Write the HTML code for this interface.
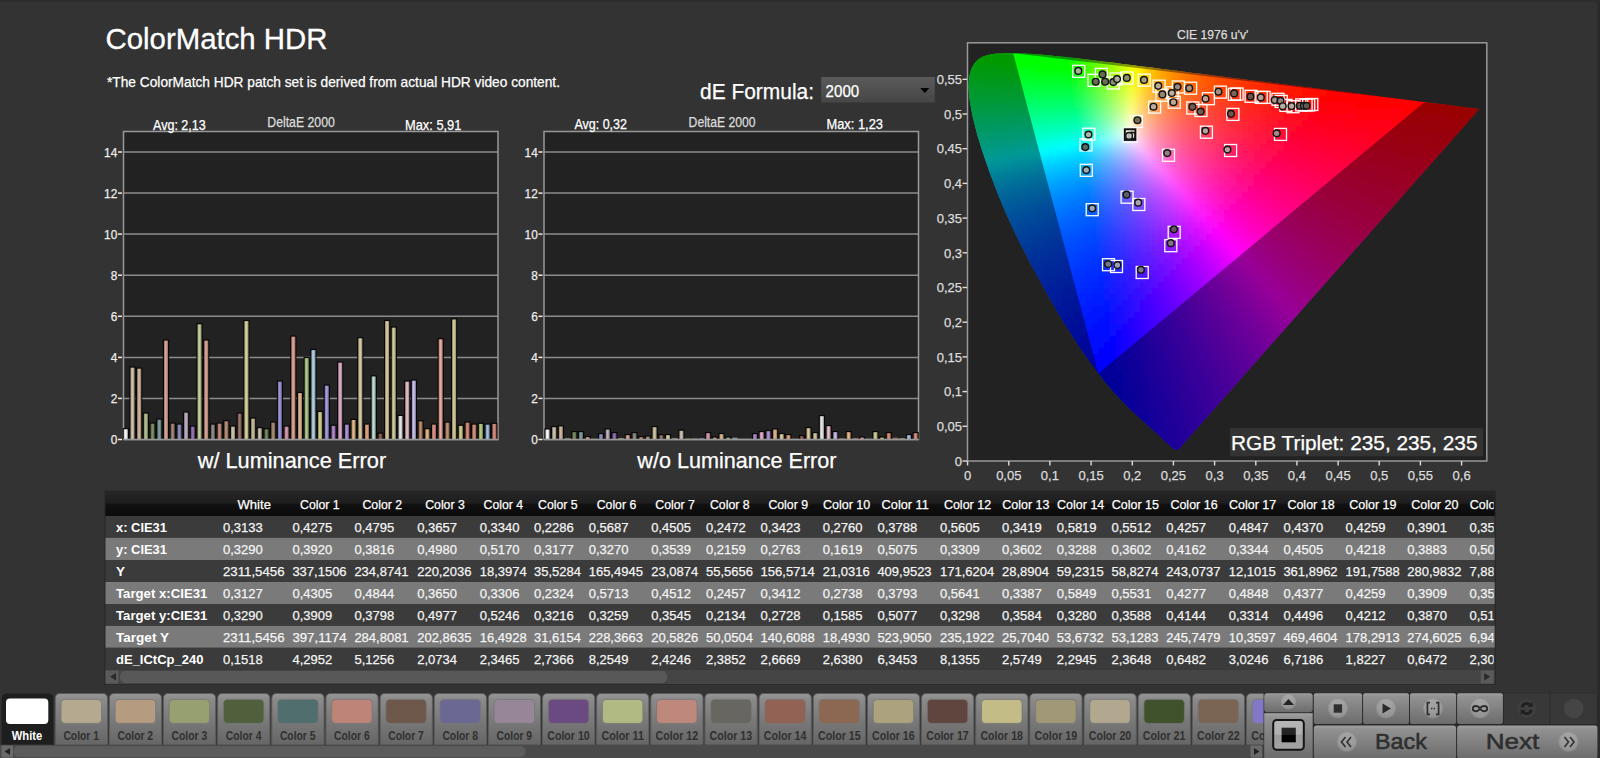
<!DOCTYPE html>
<html><head><meta charset="utf-8"><title>ColorMatch HDR</title>
<style>
html,body{margin:0;padding:0;background:#333;overflow:hidden}
svg{display:block;font-family:"Liberation Sans", "DejaVu Sans", sans-serif}
.c rect{width:7px;height:7px}
</style></head><body>
<svg width="1600" height="758" viewBox="0 0 1600 758">
<defs><clipPath id="locus"><path d="M1178.4 449.5L1176.7 449.9L1174.9 449.5L1173.4 448.4L1171.9 447.3L1170.8 446.4L1169.5 445.3L1168.0 444.0L1166.3 442.5L1164.5 440.8L1162.5 438.9L1161.4 437.8L1160.2 436.8L1159.0 435.6L1157.8 434.5L1156.5 433.3L1155.1 432.0L1153.6 430.7L1152.0 429.2L1150.4 427.7L1148.6 426.2L1146.8 424.5L1144.9 422.8L1143.0 421.0L1141.0 419.2L1138.9 417.3L1136.7 415.3L1134.4 413.1L1132.0 410.9L1129.5 408.5L1127.0 405.9L1124.3 403.3L1121.6 400.5L1118.8 397.5L1115.8 394.3L1112.8 391.0L1109.6 387.3L1106.2 383.2L1102.6 378.7L1098.7 373.7L1094.6 368.3L1090.3 362.4L1085.8 356.1L1081.2 349.4L1076.5 342.4L1071.7 335.0L1066.7 327.1L1061.6 318.9L1056.5 310.3L1051.3 301.3L1046.0 292.0L1040.8 282.5L1035.5 272.8L1030.2 262.9L1025.1 253.0L1020.0 243.0L1015.0 232.9L1010.3 222.8L1005.8 212.9L1001.6 203.0L997.7 193.4L994.1 184.0L990.6 174.9L987.4 166.1L984.5 157.6L981.8 149.4L979.4 141.7L977.2 134.5L975.4 127.6L973.8 121.2L972.4 115.2L971.3 109.6L970.3 104.4L969.6 99.6L969.1 95.1L968.8 90.9L968.6 87.1L968.7 83.5L968.9 80.2L969.2 77.1L969.8 74.2L970.5 71.6L971.3 69.1L972.3 66.9L973.4 64.9L974.7 63.1L976.1 61.4L977.6 60.0L979.2 58.8L980.9 57.7L982.7 56.8L984.5 56.0L986.5 55.4L988.5 54.8L990.5 54.4L992.7 54.1L994.8 53.8L997.1 53.6L999.3 53.5L1001.6 53.4L1003.9 53.3L1006.3 53.2L1008.6 53.2L1010.9 53.2L1013.3 53.2L1015.6 53.2L1017.9 53.3L1020.3 53.4L1022.7 53.5L1025.1 53.6L1027.6 53.7L1030.0 53.8L1032.5 54.0L1035.1 54.2L1037.7 54.4L1040.3 54.6L1043.0 54.8L1045.7 55.0L1048.5 55.3L1051.3 55.6L1054.1 55.9L1057.1 56.1L1060.0 56.5L1063.1 56.8L1066.1 57.1L1069.3 57.5L1072.5 57.8L1075.8 58.2L1079.1 58.6L1082.5 59.0L1086.0 59.4L1089.6 59.8L1093.2 60.3L1096.9 60.7L1100.7 61.2L1104.5 61.7L1108.5 62.1L1112.5 62.6L1116.6 63.1L1120.8 63.7L1125.0 64.2L1129.4 64.7L1133.8 65.3L1138.3 65.9L1142.9 66.4L1147.6 67.0L1152.4 67.6L1157.3 68.3L1162.2 68.9L1167.3 69.5L1172.4 70.2L1177.6 70.8L1182.9 71.5L1188.2 72.2L1193.7 72.9L1199.2 73.6L1204.8 74.3L1210.5 75.0L1216.2 75.7L1222.0 76.4L1227.8 77.2L1233.7 77.9L1239.6 78.7L1245.6 79.4L1251.7 80.2L1257.7 81.0L1263.7 81.7L1269.7 82.5L1275.6 83.2L1281.5 84.0L1287.2 84.7L1293.0 85.4L1298.8 86.2L1304.5 86.9L1310.3 87.6L1316.0 88.3L1321.6 89.0L1327.1 89.7L1332.4 90.4L1337.7 91.1L1342.8 91.7L1347.8 92.3L1352.7 93.0L1357.4 93.6L1362.1 94.1L1366.6 94.7L1371.0 95.3L1375.3 95.8L1379.4 96.3L1383.4 96.9L1387.3 97.3L1391.0 97.8L1394.6 98.3L1398.1 98.7L1401.4 99.1L1404.6 99.5L1407.8 99.9L1410.8 100.3L1413.7 100.7L1416.5 101.0L1419.2 101.4L1421.8 101.7L1424.4 102.0L1426.9 102.3L1429.3 102.7L1431.7 103.0L1434.0 103.2L1436.2 103.5L1438.3 103.8L1440.4 104.1L1442.4 104.3L1444.3 104.6L1446.2 104.8L1447.9 105.0L1451.3 105.4L1454.3 105.8L1457.0 106.2L1459.4 106.5L1461.6 106.7L1463.5 107.0L1465.3 107.2L1467.7 107.5L1469.5 107.7L1471.4 108.0L1473.4 108.2L1475.2 108.5L1477.1 108.7L1478.9 108.9L1479.3 109.0Z"/></clipPath><filter id="cb" x="-5%" y="-5%" width="110%" height="110%"><feGaussianBlur stdDeviation="3.0"/></filter><linearGradient id="bg" x1="0" x2="1" y1="0" y2="0"><stop offset="0" stop-color="#000" stop-opacity=".3"/><stop offset=".45" stop-color="#fff" stop-opacity=".18"/><stop offset="1" stop-color="#000" stop-opacity=".35"/></linearGradient><linearGradient id="dd" x1="0" x2="0" y1="0" y2="1"><stop offset="0" stop-color="#5a5a5a"/><stop offset="1" stop-color="#464646"/></linearGradient><linearGradient id="th" x1="0" x2="0" y1="0" y2="1"><stop offset="0" stop-color="#262626"/><stop offset=".46" stop-color="#1e1e1e"/><stop offset=".54" stop-color="#101010"/><stop offset="1" stop-color="#0b0b0b"/></linearGradient><clipPath id="tc"><rect x="105.5" y="490" width="1388.2" height="196"/></clipPath><linearGradient id="cg" x1="0" x2="0" y1="0" y2="1"><stop offset="0" stop-color="#979797"/><stop offset=".12" stop-color="#8a8a8a"/><stop offset="1" stop-color="#666"/></linearGradient><clipPath id="sc"><rect x="0" y="690" width="1264" height="68"/></clipPath><linearGradient id="bt" x1="0" x2="0" y1="0" y2="1"><stop offset="0" stop-color="#a2a2a2"/><stop offset=".1" stop-color="#929292"/><stop offset="1" stop-color="#6c6c6c"/></linearGradient><radialGradient id="hl"><stop offset="0" stop-color="#fff" stop-opacity=".26"/><stop offset=".82" stop-color="#fff" stop-opacity=".2"/><stop offset="1" stop-color="#fff" stop-opacity="0"/></radialGradient><linearGradient id="gl" x1="0" x2="0" y1="0" y2="1"><stop offset="0" stop-color="#b6b6b6"/><stop offset=".48" stop-color="#b0b0b0"/><stop offset=".5" stop-color="#9c9c9c"/><stop offset="1" stop-color="#a4a4a4"/></linearGradient><linearGradient id="gk" x1="0" x2="0" y1="0" y2="1"><stop offset="0" stop-color="#262626"/><stop offset=".48" stop-color="#202020"/><stop offset=".5" stop-color="#000"/><stop offset="1" stop-color="#000"/></linearGradient></defs>
<rect x="0" y="0" width="1600" height="758" fill="#333"/>
<text x="105.5" y="48.7" font-size="29.5" fill="#fff" textLength="222" lengthAdjust="spacingAndGlyphs" stroke="#fff" stroke-width="0.3">ColorMatch HDR</text>
<text x="107" y="86.7" font-size="14.6" fill="#fff" textLength="453" lengthAdjust="spacingAndGlyphs" stroke="#fff" stroke-width="0.25">*The ColorMatch HDR patch set is derived from actual HDR video content.</text>
<rect x="123.5" y="131.5" width="374.5" height="308.0" fill="#222"/>
<line x1="123.5" y1="398.4" x2="498.0" y2="398.4" stroke="#8c8c8c" stroke-width="1.5"/>
<line x1="123.5" y1="357.4" x2="498.0" y2="357.4" stroke="#8c8c8c" stroke-width="1.5"/>
<line x1="123.5" y1="316.3" x2="498.0" y2="316.3" stroke="#8c8c8c" stroke-width="1.5"/>
<line x1="123.5" y1="275.2" x2="498.0" y2="275.2" stroke="#8c8c8c" stroke-width="1.5"/>
<line x1="123.5" y1="234.1" x2="498.0" y2="234.1" stroke="#8c8c8c" stroke-width="1.5"/>
<line x1="123.5" y1="193.1" x2="498.0" y2="193.1" stroke="#8c8c8c" stroke-width="1.5"/>
<line x1="123.5" y1="152.0" x2="498.0" y2="152.0" stroke="#8c8c8c" stroke-width="1.5"/>
<rect x="123.5" y="131.5" width="374.5" height="308.0" fill="none" stroke="#999" stroke-width="1.5"/>
<line x1="118.0" y1="439.5" x2="122.0" y2="439.5" stroke="#eee" stroke-width="1.5"/>
<text x="117.3" y="444.3" font-size="13.6" fill="#eee" text-anchor="end" textLength="6.6" lengthAdjust="spacingAndGlyphs" stroke="#eee" stroke-width="0.25">0</text>
<line x1="118.0" y1="398.4" x2="122.0" y2="398.4" stroke="#eee" stroke-width="1.5"/>
<text x="117.3" y="403.2" font-size="13.6" fill="#eee" text-anchor="end" textLength="6.6" lengthAdjust="spacingAndGlyphs" stroke="#eee" stroke-width="0.25">2</text>
<line x1="118.0" y1="357.4" x2="122.0" y2="357.4" stroke="#eee" stroke-width="1.5"/>
<text x="117.3" y="362.2" font-size="13.6" fill="#eee" text-anchor="end" textLength="6.6" lengthAdjust="spacingAndGlyphs" stroke="#eee" stroke-width="0.25">4</text>
<line x1="118.0" y1="316.3" x2="122.0" y2="316.3" stroke="#eee" stroke-width="1.5"/>
<text x="117.3" y="321.1" font-size="13.6" fill="#eee" text-anchor="end" textLength="6.6" lengthAdjust="spacingAndGlyphs" stroke="#eee" stroke-width="0.25">6</text>
<line x1="118.0" y1="275.2" x2="122.0" y2="275.2" stroke="#eee" stroke-width="1.5"/>
<text x="117.3" y="280.0" font-size="13.6" fill="#eee" text-anchor="end" textLength="6.6" lengthAdjust="spacingAndGlyphs" stroke="#eee" stroke-width="0.25">8</text>
<line x1="118.0" y1="234.1" x2="122.0" y2="234.1" stroke="#eee" stroke-width="1.5"/>
<text x="117.3" y="238.9" font-size="13.6" fill="#eee" text-anchor="end" textLength="13.2" lengthAdjust="spacingAndGlyphs" stroke="#eee" stroke-width="0.25">10</text>
<line x1="118.0" y1="193.1" x2="122.0" y2="193.1" stroke="#eee" stroke-width="1.5"/>
<text x="117.3" y="197.9" font-size="13.6" fill="#eee" text-anchor="end" textLength="13.2" lengthAdjust="spacingAndGlyphs" stroke="#eee" stroke-width="0.25">12</text>
<line x1="118.0" y1="152.0" x2="122.0" y2="152.0" stroke="#eee" stroke-width="1.5"/>
<text x="117.3" y="156.8" font-size="13.6" fill="#eee" text-anchor="end" textLength="13.2" lengthAdjust="spacingAndGlyphs" stroke="#eee" stroke-width="0.25">14</text>
<rect x="544" y="131.5" width="374.5" height="308.0" fill="#222"/>
<line x1="544" y1="398.4" x2="918.5" y2="398.4" stroke="#8c8c8c" stroke-width="1.5"/>
<line x1="544" y1="357.4" x2="918.5" y2="357.4" stroke="#8c8c8c" stroke-width="1.5"/>
<line x1="544" y1="316.3" x2="918.5" y2="316.3" stroke="#8c8c8c" stroke-width="1.5"/>
<line x1="544" y1="275.2" x2="918.5" y2="275.2" stroke="#8c8c8c" stroke-width="1.5"/>
<line x1="544" y1="234.1" x2="918.5" y2="234.1" stroke="#8c8c8c" stroke-width="1.5"/>
<line x1="544" y1="193.1" x2="918.5" y2="193.1" stroke="#8c8c8c" stroke-width="1.5"/>
<line x1="544" y1="152.0" x2="918.5" y2="152.0" stroke="#8c8c8c" stroke-width="1.5"/>
<rect x="544" y="131.5" width="374.5" height="308.0" fill="none" stroke="#999" stroke-width="1.5"/>
<line x1="538.5" y1="439.5" x2="542.5" y2="439.5" stroke="#eee" stroke-width="1.5"/>
<text x="537.8" y="444.3" font-size="13.6" fill="#eee" text-anchor="end" textLength="6.6" lengthAdjust="spacingAndGlyphs" stroke="#eee" stroke-width="0.25">0</text>
<line x1="538.5" y1="398.4" x2="542.5" y2="398.4" stroke="#eee" stroke-width="1.5"/>
<text x="537.8" y="403.2" font-size="13.6" fill="#eee" text-anchor="end" textLength="6.6" lengthAdjust="spacingAndGlyphs" stroke="#eee" stroke-width="0.25">2</text>
<line x1="538.5" y1="357.4" x2="542.5" y2="357.4" stroke="#eee" stroke-width="1.5"/>
<text x="537.8" y="362.2" font-size="13.6" fill="#eee" text-anchor="end" textLength="6.6" lengthAdjust="spacingAndGlyphs" stroke="#eee" stroke-width="0.25">4</text>
<line x1="538.5" y1="316.3" x2="542.5" y2="316.3" stroke="#eee" stroke-width="1.5"/>
<text x="537.8" y="321.1" font-size="13.6" fill="#eee" text-anchor="end" textLength="6.6" lengthAdjust="spacingAndGlyphs" stroke="#eee" stroke-width="0.25">6</text>
<line x1="538.5" y1="275.2" x2="542.5" y2="275.2" stroke="#eee" stroke-width="1.5"/>
<text x="537.8" y="280.0" font-size="13.6" fill="#eee" text-anchor="end" textLength="6.6" lengthAdjust="spacingAndGlyphs" stroke="#eee" stroke-width="0.25">8</text>
<line x1="538.5" y1="234.1" x2="542.5" y2="234.1" stroke="#eee" stroke-width="1.5"/>
<text x="537.8" y="238.9" font-size="13.6" fill="#eee" text-anchor="end" textLength="13.2" lengthAdjust="spacingAndGlyphs" stroke="#eee" stroke-width="0.25">10</text>
<line x1="538.5" y1="193.1" x2="542.5" y2="193.1" stroke="#eee" stroke-width="1.5"/>
<text x="537.8" y="197.9" font-size="13.6" fill="#eee" text-anchor="end" textLength="13.2" lengthAdjust="spacingAndGlyphs" stroke="#eee" stroke-width="0.25">12</text>
<line x1="538.5" y1="152.0" x2="542.5" y2="152.0" stroke="#eee" stroke-width="1.5"/>
<text x="537.8" y="156.8" font-size="13.6" fill="#eee" text-anchor="end" textLength="13.2" lengthAdjust="spacingAndGlyphs" stroke="#eee" stroke-width="0.25">14</text>
<rect x="967.5" y="42.8" width="519.3" height="418.2" fill="#222"/>
<g clip-path="url(#locus)"><g filter="url(#cb)" class="c"><g transform="translate(0 42)"><rect x=984 fill=#0f0 /><rect x=990 fill=#0f0 /><rect x=996 fill=#0f0 /><rect x=1002 fill=#0f0 /><rect x=1008 fill=#0f0 /><rect x=1014 fill=#0f0 /><rect x=1020 fill=#0f0 /><rect x=1026 fill=#0f0 /><rect x=1032 fill=#0f0 /><rect x=1038 fill=#0f0 /><rect x=1044 fill=#0f0 /><rect x=1050 fill=#0f0 /><rect x=1056 fill=#0f0 /><rect x=1062 fill=#0f0 /></g>
<g transform="translate(0 48)"><rect x=972 fill=#0f0 /><rect x=978 fill=#0f0 /><rect x=984 fill=#0f0 /><rect x=990 fill=#0f0 /><rect x=996 fill=#0f0 /><rect x=1002 fill=#0f0 /><rect x=1008 fill=#0f0 /><rect x=1014 fill=#0f0 /><rect x=1020 fill=#0f0 /><rect x=1026 fill=#0f0 /><rect x=1032 fill=#0f0 /><rect x=1038 fill=#0f0 /><rect x=1044 fill=#0f0 /><rect x=1050 fill=#0f0 /><rect x=1056 fill=#0f0 /><rect x=1062 fill=#0f0 /><rect x=1068 fill=#0eff00 /><rect x=1074 fill=#23ff00 /><rect x=1080 fill=#37ff00 /><rect x=1086 fill=#4bff00 /><rect x=1092 fill=#5fff00 /><rect x=1098 fill=#74ff00 /><rect x=1104 fill=#89ff00 /><rect x=1110 fill=#9fff00 /></g>
<g transform="translate(0 54)"><rect x=966 fill=#0f0 /><rect x=972 fill=#0f0 /><rect x=978 fill=#0f0 /><rect x=984 fill=#0f0 /><rect x=990 fill=#0f0 /><rect x=996 fill=#0f0 /><rect x=1002 fill=#0f0 /><rect x=1008 fill=#0f0 /><rect x=1014 fill=#0f0 /><rect x=1020 fill=#0f0 /><rect x=1026 fill=#0f0 /><rect x=1032 fill=#0f0 /><rect x=1038 fill=#0f0 /><rect x=1044 fill=#0f0 /><rect x=1050 fill=#0f0 /><rect x=1056 fill=#0f0 /><rect x=1062 fill=#0f0 /><rect x=1068 fill=#0bff00 /><rect x=1074 fill=#20ff00 /><rect x=1080 fill=#35ff00 /><rect x=1086 fill=#49ff00 /><rect x=1092 fill=#5eff00 /><rect x=1098 fill=#73ff00 /><rect x=1104 fill=#89ff00 /><rect x=1110 fill=#9fff00 /><rect x=1116 fill=#b6ff00 /><rect x=1122 fill=#ceff00 /><rect x=1128 fill=#e7ff00 /><rect x=1134 fill=#fffd00 /><rect x=1140 fill=#ffe500 /><rect x=1146 fill=#ffd100 /><rect x=1152 fill=#ffbf00 /><rect x=1158 fill=#ffaf00 /></g>
<g transform="translate(0 60)"><rect x=960 fill=#00ff0a /><rect x=966 fill=#00ff09 /><rect x=972 fill=#00ff07 /><rect x=978 fill=#00ff06 /><rect x=984 fill=#00ff04 /><rect x=990 fill=#00ff03 /><rect x=996 fill=#00ff01 /><rect x=1002 fill=#0f0 /><rect x=1008 fill=#0f0 /><rect x=1014 fill=#0f0 /><rect x=1020 fill=#0f0 /><rect x=1026 fill=#0f0 /><rect x=1032 fill=#0f0 /><rect x=1038 fill=#0f0 /><rect x=1044 fill=#0f0 /><rect x=1050 fill=#0f0 /><rect x=1056 fill=#0f0 /><rect x=1062 fill=#0f0 /><rect x=1068 fill=#08ff00 /><rect x=1074 fill=#1eff00 /><rect x=1080 fill=#3f0 /><rect x=1086 fill=#48ff00 /><rect x=1092 fill=#5dff00 /><rect x=1098 fill=#72ff00 /><rect x=1104 fill=#8f0 /><rect x=1110 fill=#9fff00 /><rect x=1116 fill=#b7ff00 /><rect x=1122 fill=#cfff00 /><rect x=1128 fill=#e9ff00 /><rect x=1134 fill=#fffb00 /><rect x=1140 fill=#ffe300 /><rect x=1146 fill=#ffce00 /><rect x=1152 fill=#ffbc00 /><rect x=1158 fill=#ffad00 /><rect x=1164 fill=#ff9f00 /><rect x=1170 fill=#ff9200 /><rect x=1176 fill=#ff8700 /><rect x=1182 fill=#ff7d00 /><rect x=1188 fill=#ff7400 /><rect x=1194 fill=#ff6b00 /><rect x=1200 fill=#ff6400 /><rect x=1206 fill=#ff5d00 /></g>
<g transform="translate(0 66)"><rect x=960 fill=#00ff18 /><rect x=966 fill=#00ff17 /><rect x=972 fill=#00ff16 /><rect x=978 fill=#00ff14 /><rect x=984 fill=#00ff13 /><rect x=990 fill=#00ff12 /><rect x=996 fill=#0f1 /><rect x=1002 fill=#00ff10 /><rect x=1008 fill=#00ff0e /><rect x=1014 fill=#00ff0d /><rect x=1020 fill=#00ff0b /><rect x=1026 fill=#00ff0a /><rect x=1032 fill=#00ff08 /><rect x=1038 fill=#00ff06 /><rect x=1044 fill=#00ff05 /><rect x=1050 fill=#00ff03 /><rect x=1056 fill=#0f0 /><rect x=1062 fill=#0f0 /><rect x=1068 fill=#05ff00 /><rect x=1074 fill=#1bff00 /><rect x=1080 fill=#31ff00 /><rect x=1086 fill=#46ff00 /><rect x=1092 fill=#5bff00 /><rect x=1098 fill=#71ff00 /><rect x=1104 fill=#8f0 /><rect x=1110 fill=#9fff00 /><rect x=1116 fill=#b8ff00 /><rect x=1122 fill=#d1ff00 /><rect x=1128 fill=#eaff00 /><rect x=1134 fill=#fff900 /><rect x=1140 fill=#ffe000 /><rect x=1146 fill=#fc0 /><rect x=1152 fill=#ffba00 /><rect x=1158 fill=#fa0 /><rect x=1164 fill=#ff9c00 /><rect x=1170 fill=#ff9000 /><rect x=1176 fill=#ff8500 /><rect x=1182 fill=#ff7b00 /><rect x=1188 fill=#ff7100 /><rect x=1194 fill=#ff6900 /><rect x=1200 fill=#ff6100 /><rect x=1206 fill=#ff5a00 /><rect x=1212 fill=#ff5400 /><rect x=1218 fill=#ff4e00 /><rect x=1224 fill=#ff4800 /><rect x=1230 fill=#ff4300 /><rect x=1236 fill=#ff3e00 /><rect x=1242 fill=#ff3a00 /><rect x=1248 fill=#ff3500 /><rect x=1254 fill=#ff3100 /></g>
<g transform="translate(0 72)"><rect x=960 fill=#00ff25 /><rect x=966 fill=#00ff24 /><rect x=972 fill=#00ff23 /><rect x=978 fill=#0f2 /><rect x=984 fill=#00ff21 /><rect x=990 fill=#00ff20 /><rect x=996 fill=#00ff1f /><rect x=1002 fill=#00ff1f /><rect x=1008 fill=#00ff1d /><rect x=1014 fill=#00ff1c /><rect x=1020 fill=#00ff1b /><rect x=1026 fill=#00ff1a /><rect x=1032 fill=#00ff19 /><rect x=1038 fill=#00ff18 /><rect x=1044 fill=#00ff16 /><rect x=1050 fill=#00ff15 /><rect x=1056 fill=#00ff14 /><rect x=1062 fill=#00ff12 /><rect x=1068 fill=#01ff11 /><rect x=1074 fill=#18ff0f /><rect x=1080 fill=#2eff0d /><rect x=1086 fill=#44ff0b /><rect x=1092 fill=#5aff09 /><rect x=1098 fill=#71ff07 /><rect x=1104 fill=#88ff05 /><rect x=1110 fill=#a0ff03 /><rect x=1116 fill=#b8ff00 /><rect x=1122 fill=#d2ff00 /><rect x=1128 fill=#ecff00 /><rect x=1134 fill=#fff600 /><rect x=1140 fill=#ffde00 /><rect x=1146 fill=#ffc900 /><rect x=1152 fill=#ffb700 /><rect x=1158 fill=#ffa700 /><rect x=1164 fill=#f90 /><rect x=1170 fill=#ff8d00 /><rect x=1176 fill=#ff8200 /><rect x=1182 fill=#ff7800 /><rect x=1188 fill=#ff6f00 /><rect x=1194 fill=#ff6700 /><rect x=1200 fill=#ff5f00 /><rect x=1206 fill=#ff5800 /><rect x=1212 fill=#ff5200 /><rect x=1218 fill=#ff4c00 /><rect x=1224 fill=#ff4600 /><rect x=1230 fill=#ff4100 /><rect x=1236 fill=#ff3c00 /><rect x=1242 fill=#ff3700 /><rect x=1248 fill=#f30 /><rect x=1254 fill=#ff2f00 /><rect x=1260 fill=#ff2b00 /><rect x=1266 fill=#ff2800 /><rect x=1272 fill=#ff2400 /><rect x=1278 fill=#ff2100 /><rect x=1284 fill=#ff1e00 /><rect x=1290 fill=#ff1b00 /><rect x=1296 fill=#ff1800 /><rect x=1302 fill=#ff1500 /></g>
<g transform="translate(0 78)"><rect x=960 fill=#00ff32 /><rect x=966 fill=#00ff31 /><rect x=972 fill=#00ff30 /><rect x=978 fill=#00ff30 /><rect x=984 fill=#00ff2f /><rect x=990 fill=#00ff2f /><rect x=996 fill=#00ff2e /><rect x=1002 fill=#00ff2d /><rect x=1008 fill=#00ff2c /><rect x=1014 fill=#00ff2c /><rect x=1020 fill=#00ff2b /><rect x=1026 fill=#00ff2a /><rect x=1032 fill=#00ff29 /><rect x=1038 fill=#00ff28 /><rect x=1044 fill=#00ff27 /><rect x=1050 fill=#00ff26 /><rect x=1056 fill=#00ff25 /><rect x=1062 fill=#00ff24 /><rect x=1068 fill=#00ff23 /><rect x=1074 fill=#16ff22 /><rect x=1080 fill=#2cff21 /><rect x=1086 fill=#42ff1f /><rect x=1092 fill=#59ff1e /><rect x=1098 fill=#70ff1d /><rect x=1104 fill=#87ff1b /><rect x=1110 fill=#a0ff1a /><rect x=1116 fill=#b9ff18 /><rect x=1122 fill=#d3ff16 /><rect x=1128 fill=#eeff14 /><rect x=1134 fill=#fff412 /><rect x=1140 fill=#ffdb0e /><rect x=1146 fill=#ffc70b /><rect x=1152 fill=#ffb408 /><rect x=1158 fill=#ffa506 /><rect x=1164 fill=#ff9703 /><rect x=1170 fill=#ff8a01 /><rect x=1176 fill=#ff7f00 /><rect x=1182 fill=#ff7500 /><rect x=1188 fill=#ff6c00 /><rect x=1194 fill=#ff6400 /><rect x=1200 fill=#ff5d00 /><rect x=1206 fill=#ff5600 /><rect x=1212 fill=#ff4f00 /><rect x=1218 fill=#ff4900 /><rect x=1224 fill=#f40 /><rect x=1230 fill=#ff3f00 /><rect x=1236 fill=#ff3a00 /><rect x=1242 fill=#ff3500 /><rect x=1248 fill=#ff3100 /><rect x=1254 fill=#ff2d00 /><rect x=1260 fill=#ff2900 /><rect x=1266 fill=#ff2600 /><rect x=1272 fill=#f20 /><rect x=1278 fill=#ff1f00 /><rect x=1284 fill=#ff1c00 /><rect x=1290 fill=#ff1900 /><rect x=1296 fill=#ff1600 /><rect x=1302 fill=#ff1300 /><rect x=1308 fill=#f10 /><rect x=1314 fill=#ff0e00 /><rect x=1320 fill=#ff0c00 /><rect x=1326 fill=#ff0900 /><rect x=1332 fill=#ff0700 /><rect x=1338 fill=#ff0500 /><rect x=1344 fill=#ff0200 /></g>
<g transform="translate(0 84)"><rect x=960 fill=#00ff3f /><rect x=966 fill=#00ff3e /><rect x=972 fill=#00ff3e /><rect x=978 fill=#00ff3d /><rect x=984 fill=#00ff3d /><rect x=990 fill=#00ff3d /><rect x=996 fill=#00ff3c /><rect x=1002 fill=#00ff3c /><rect x=1008 fill=#00ff3b /><rect x=1014 fill=#00ff3b /><rect x=1020 fill=#00ff3a /><rect x=1026 fill=#00ff3a /><rect x=1032 fill=#00ff39 /><rect x=1038 fill=#00ff39 /><rect x=1044 fill=#00ff38 /><rect x=1050 fill=#00ff37 /><rect x=1056 fill=#00ff37 /><rect x=1062 fill=#00ff36 /><rect x=1068 fill=#00ff35 /><rect x=1074 fill=#13ff35 /><rect x=1080 fill=#2aff34 /><rect x=1086 fill=#40ff33 /><rect x=1092 fill=#57ff32 /><rect x=1098 fill=#6fff31 /><rect x=1104 fill=#87ff30 /><rect x=1110 fill=#a0ff2f /><rect x=1116 fill=#baff2e /><rect x=1122 fill=#d4ff2d /><rect x=1128 fill=#f0ff2c /><rect x=1134 fill=#fff128 /><rect x=1140 fill=#ffd923 /><rect x=1146 fill=#ffc41f /><rect x=1152 fill=#ffb21b /><rect x=1158 fill=#ffa217 /><rect x=1164 fill=#ff9414 /><rect x=1170 fill=#ff8812 /><rect x=1176 fill=#ff7d0f /><rect x=1182 fill=#ff730d /><rect x=1188 fill=#ff6a0b /><rect x=1194 fill=#ff6209 /><rect x=1200 fill=#ff5a08 /><rect x=1206 fill=#ff5306 /><rect x=1212 fill=#ff4d05 /><rect x=1218 fill=#ff4703 /><rect x=1224 fill=#ff4102 /><rect x=1230 fill=#ff3c00 /><rect x=1236 fill=#ff3800 /><rect x=1242 fill=#f30 /><rect x=1248 fill=#ff2f00 /><rect x=1254 fill=#ff2b00 /><rect x=1260 fill=#ff2700 /><rect x=1266 fill=#ff2400 /><rect x=1272 fill=#ff2000 /><rect x=1278 fill=#ff1d00 /><rect x=1284 fill=#ff1a00 /><rect x=1290 fill=#ff1700 /><rect x=1296 fill=#ff1400 /><rect x=1302 fill=#f10 /><rect x=1308 fill=#ff0f00 /><rect x=1314 fill=#ff0c00 /><rect x=1320 fill=#ff0a00 /><rect x=1326 fill=#ff0700 /><rect x=1332 fill=#ff0500 /><rect x=1338 fill=#ff0300 /><rect x=1344 fill=#f00 /><rect x=1350 fill=#f00 /><rect x=1356 fill=#f00 /><rect x=1362 fill=#f00 /><rect x=1368 fill=#f00 /><rect x=1374 fill=#f00 /><rect x=1380 fill=#f00 /><rect x=1386 fill=#f00 /><rect x=1392 fill=#f00 /></g>
<g transform="translate(0 90)"><rect x=960 fill=#00ff4c /><rect x=966 fill=#00ff4c /><rect x=972 fill=#00ff4b /><rect x=978 fill=#00ff4b /><rect x=984 fill=#00ff4b /><rect x=990 fill=#00ff4b /><rect x=996 fill=#00ff4b /><rect x=1002 fill=#00ff4a /><rect x=1008 fill=#00ff4a /><rect x=1014 fill=#00ff4a /><rect x=1020 fill=#00ff4a /><rect x=1026 fill=#00ff4a /><rect x=1032 fill=#00ff49 /><rect x=1038 fill=#00ff49 /><rect x=1044 fill=#00ff49 /><rect x=1050 fill=#00ff49 /><rect x=1056 fill=#00ff48 /><rect x=1062 fill=#00ff48 /><rect x=1068 fill=#00ff48 /><rect x=1074 fill=#0fff47 /><rect x=1080 fill=#27ff47 /><rect x=1086 fill=#3eff47 /><rect x=1092 fill=#56ff46 /><rect x=1098 fill=#6eff46 /><rect x=1104 fill=#87ff45 /><rect x=1110 fill=#a0ff45 /><rect x=1116 fill=#baff45 /><rect x=1122 fill=#d6ff44 /><rect x=1128 fill=#f2ff44 /><rect x=1134 fill=#ffef3f /><rect x=1140 fill=#ffd638 /><rect x=1146 fill=#ffc132 /><rect x=1152 fill=#ffaf2d /><rect x=1158 fill=#ff9f28 /><rect x=1164 fill=#ff9124 /><rect x=1170 fill=#ff8521 /><rect x=1176 fill=#ff7a1e /><rect x=1182 fill=#ff701b /><rect x=1188 fill=#ff6718 /><rect x=1194 fill=#ff5f16 /><rect x=1200 fill=#ff5814 /><rect x=1206 fill=#ff5112 /><rect x=1212 fill=#ff4a10 /><rect x=1218 fill=#ff450e /><rect x=1224 fill=#ff3f0d /><rect x=1230 fill=#ff3a0b /><rect x=1236 fill=#ff350a /><rect x=1242 fill=#ff3109 /><rect x=1248 fill=#ff2d07 /><rect x=1254 fill=#ff2906 /><rect x=1260 fill=#ff2505 /><rect x=1266 fill=#ff2104 /><rect x=1272 fill=#ff1e03 /><rect x=1278 fill=#ff1b02 /><rect x=1284 fill=#ff1801 /><rect x=1290 fill=#ff1500 /><rect x=1296 fill=#ff1200 /><rect x=1302 fill=#ff0f00 /><rect x=1308 fill=#ff0d00 /><rect x=1314 fill=#ff0a00 /><rect x=1320 fill=#ff0800 /><rect x=1326 fill=#ff0500 /><rect x=1332 fill=#ff0300 /><rect x=1338 fill=#f00 /><rect x=1344 fill=#f00 /><rect x=1350 fill=#f00 /><rect x=1356 fill=#f00 /><rect x=1362 fill=#f00 /><rect x=1368 fill=#f00 /><rect x=1374 fill=#f00 /><rect x=1380 fill=#f00 /><rect x=1386 fill=#f00 /><rect x=1392 fill=#f00 /><rect x=1398 fill=#f00 /><rect x=1404 fill=#f00 /><rect x=1410 fill=#f00 /><rect x=1416 fill=#f00 /><rect x=1422 fill=#f00 /><rect x=1428 fill=#f00 /><rect x=1434 fill=#f00 /><rect x=1440 fill=#f00 /></g>
<g transform="translate(0 96)"><rect x=960 fill=#00ff59 /><rect x=966 fill=#00ff59 /><rect x=972 fill=#00ff59 /><rect x=978 fill=#00ff59 /><rect x=984 fill=#00ff59 /><rect x=990 fill=#00ff59 /><rect x=996 fill=#00ff59 /><rect x=1002 fill=#00ff59 /><rect x=1008 fill=#00ff59 /><rect x=1014 fill=#00ff59 /><rect x=1020 fill=#00ff5a /><rect x=1026 fill=#00ff5a /><rect x=1032 fill=#00ff5a /><rect x=1038 fill=#00ff5a /><rect x=1044 fill=#00ff5a /><rect x=1050 fill=#00ff5a /><rect x=1056 fill=#00ff5a /><rect x=1062 fill=#00ff5a /><rect x=1068 fill=#00ff5a /><rect x=1074 fill=#0cff5a /><rect x=1080 fill=#25ff5a /><rect x=1086 fill=#3cff5b /><rect x=1092 fill=#54ff5b /><rect x=1098 fill=#6dff5b /><rect x=1104 fill=#86ff5b /><rect x=1110 fill=#a0ff5b /><rect x=1116 fill=#bbff5b /><rect x=1122 fill=#d7ff5b /><rect x=1128 fill=#f5ff5b /><rect x=1134 fill=#ffec55 /><rect x=1140 fill=#ffd34c /><rect x=1146 fill=#ffbe45 /><rect x=1152 fill=#ffac3e /><rect x=1158 fill=#ff9c39 /><rect x=1164 fill=#ff8f34 /><rect x=1170 fill=#ff822f /><rect x=1176 fill=#ff772c /><rect x=1182 fill=#ff6d28 /><rect x=1188 fill=#ff6525 /><rect x=1194 fill=#ff5c22 /><rect x=1200 fill=#ff5520 /><rect x=1206 fill=#ff4e1d /><rect x=1212 fill=#ff481b /><rect x=1218 fill=#ff4219 /><rect x=1224 fill=#ff3d17 /><rect x=1230 fill=#ff3815 /><rect x=1236 fill=#ff3314 /><rect x=1242 fill=#ff2f12 /><rect x=1248 fill=#ff2a11 /><rect x=1254 fill=#ff270f /><rect x=1260 fill=#ff230e /><rect x=1266 fill=#ff1f0d /><rect x=1272 fill=#ff1c0b /><rect x=1278 fill=#ff190a /><rect x=1284 fill=#ff1609 /><rect x=1290 fill=#ff1308 /><rect x=1296 fill=#ff1007 /><rect x=1302 fill=#ff0d06 /><rect x=1308 fill=#ff0b06 /><rect x=1314 fill=#ff0805 /><rect x=1320 fill=#ff0604 /><rect x=1326 fill=#ff0303 /><rect x=1332 fill=#ff0102 /><rect x=1338 fill=#ff0001 /><rect x=1344 fill=#ff0001 /><rect x=1350 fill=#f00 /><rect x=1356 fill=#f00 /><rect x=1362 fill=#f00 /><rect x=1368 fill=#f00 /><rect x=1374 fill=#f00 /><rect x=1380 fill=#f00 /><rect x=1386 fill=#f00 /><rect x=1392 fill=#f00 /><rect x=1398 fill=#f00 /><rect x=1404 fill=#f00 /><rect x=1410 fill=#f00 /><rect x=1416 fill=#f00 /><rect x=1422 fill=#f00 /><rect x=1428 fill=#f00 /><rect x=1434 fill=#f00 /><rect x=1440 fill=#f00 /><rect x=1446 fill=#f00 /><rect x=1452 fill=#f00 /><rect x=1458 fill=#f00 /><rect x=1464 fill=#f00 /><rect x=1470 fill=#f00 /></g>
<g transform="translate(0 102)"><rect x=960 fill=#0f6 /><rect x=966 fill=#00ff67 /><rect x=972 fill=#00ff67 /><rect x=978 fill=#00ff67 /><rect x=984 fill=#00ff67 /><rect x=990 fill=#00ff68 /><rect x=996 fill=#00ff68 /><rect x=1002 fill=#00ff68 /><rect x=1008 fill=#00ff69 /><rect x=1014 fill=#00ff69 /><rect x=1020 fill=#00ff69 /><rect x=1026 fill=#00ff6a /><rect x=1032 fill=#00ff6a /><rect x=1038 fill=#00ff6b /><rect x=1044 fill=#00ff6b /><rect x=1050 fill=#00ff6c /><rect x=1056 fill=#00ff6c /><rect x=1062 fill=#00ff6d /><rect x=1068 fill=#00ff6d /><rect x=1074 fill=#08ff6e /><rect x=1080 fill=#22ff6e /><rect x=1086 fill=#3aff6f /><rect x=1092 fill=#53ff6f /><rect x=1098 fill=#6cff70 /><rect x=1104 fill=#86ff71 /><rect x=1110 fill=#a0ff72 /><rect x=1116 fill=#bcff72 /><rect x=1122 fill=#d9ff73 /><rect x=1128 fill=#f7ff74 /><rect x=1134 fill=#ffe96b /><rect x=1140 fill=#ffd060 /><rect x=1146 fill=#ffbb57 /><rect x=1152 fill=#ffa950 /><rect x=1158 fill=#ff9949 /><rect x=1164 fill=#ff8c43 /><rect x=1170 fill=#ff7f3e /><rect x=1176 fill=#ff7539 /><rect x=1182 fill=#ff6b35 /><rect x=1188 fill=#ff6231 /><rect x=1194 fill=#ff5a2e /><rect x=1200 fill=#ff522b /><rect x=1206 fill=#ff4c28 /><rect x=1212 fill=#ff4625 /><rect x=1218 fill=#ff4023 /><rect x=1224 fill=#ff3a21 /><rect x=1230 fill=#ff351f /><rect x=1236 fill=#ff311d /><rect x=1242 fill=#ff2c1b /><rect x=1248 fill=#ff2819 /><rect x=1254 fill=#ff2418 /><rect x=1260 fill=#ff2116 /><rect x=1266 fill=#ff1d15 /><rect x=1272 fill=#ff1a13 /><rect x=1278 fill=#ff1712 /><rect x=1284 fill=#ff1411 /><rect x=1290 fill=#ff1110 /><rect x=1296 fill=#ff0e0f /><rect x=1302 fill=#ff0b0e /><rect x=1308 fill=#ff090d /><rect x=1314 fill=#ff060c /><rect x=1320 fill=#ff040b /><rect x=1326 fill=#ff010a /><rect x=1332 fill=#ff0009 /><rect x=1338 fill=#ff0008 /><rect x=1344 fill=#ff0007 /><rect x=1350 fill=#ff0007 /><rect x=1356 fill=#ff0006 /><rect x=1362 fill=#ff0005 /><rect x=1368 fill=#ff0004 /><rect x=1374 fill=#ff0004 /><rect x=1380 fill=#ff0003 /><rect x=1386 fill=#ff0002 /><rect x=1392 fill=#ff0002 /><rect x=1398 fill=#ff0001 /><rect x=1404 fill=#f00 /><rect x=1410 fill=#f00 /><rect x=1416 fill=#f00 /><rect x=1422 fill=#f00 /><rect x=1428 fill=#f00 /><rect x=1434 fill=#f00 /><rect x=1440 fill=#f00 /><rect x=1446 fill=#f00 /><rect x=1452 fill=#f00 /><rect x=1458 fill=#f00 /><rect x=1464 fill=#f00 /><rect x=1470 fill=#f00 /><rect x=1476 fill=#f00 /></g>
<g transform="translate(0 108)"><rect x=960 fill=#00ff74 /><rect x=966 fill=#00ff74 /><rect x=972 fill=#00ff75 /><rect x=978 fill=#00ff75 /><rect x=984 fill=#00ff76 /><rect x=990 fill=#0f7 /><rect x=996 fill=#0f7 /><rect x=1002 fill=#00ff78 /><rect x=1008 fill=#00ff78 /><rect x=1014 fill=#00ff79 /><rect x=1020 fill=#00ff7a /><rect x=1026 fill=#00ff7b /><rect x=1032 fill=#00ff7b /><rect x=1038 fill=#00ff7c /><rect x=1044 fill=#00ff7d /><rect x=1050 fill=#00ff7e /><rect x=1056 fill=#00ff7f /><rect x=1062 fill=#00ff7f /><rect x=1068 fill=#00ff80 /><rect x=1074 fill=#05ff81 /><rect x=1080 fill=#1fff83 /><rect x=1086 fill=#38ff84 /><rect x=1092 fill=#51ff85 /><rect x=1098 fill=#6bff86 /><rect x=1104 fill=#85ff87 /><rect x=1110 fill=#a0ff89 /><rect x=1116 fill=#bdff8a /><rect x=1122 fill=#dbff8c /><rect x=1128 fill=#faff8d /><rect x=1134 fill=#ffe681 /><rect x=1140 fill=#ffcd75 /><rect x=1146 fill=#ffb86a /><rect x=1152 fill=#ffa661 /><rect x=1158 fill=#ff9659 /><rect x=1164 fill=#ff8952 /><rect x=1170 fill=#ff7d4c /><rect x=1176 fill=#ff7247 /><rect x=1182 fill=#ff6842 /><rect x=1188 fill=#ff5f3e /><rect x=1194 fill=#ff573a /><rect x=1200 fill=#ff5036 /><rect x=1206 fill=#ff4933 /><rect x=1212 fill=#ff4330 /><rect x=1218 fill=#ff3d2d /><rect x=1224 fill=#ff382a /><rect x=1230 fill=#ff3328 /><rect x=1236 fill=#ff2e26 /><rect x=1242 fill=#ff2a24 /><rect x=1248 fill=#ff2622 /><rect x=1254 fill=#ff2220 /><rect x=1260 fill=#ff1e1e /><rect x=1266 fill=#ff1b1c /><rect x=1272 fill=#ff181b /><rect x=1278 fill=#ff1519 /><rect x=1284 fill=#ff1218 /><rect x=1290 fill=#ff0f17 /><rect x=1296 fill=#ff0c16 /><rect x=1302 fill=#ff0914 /><rect x=1308 fill=#ff0713 /><rect x=1314 fill=#ff0412 /><rect x=1320 fill=#ff0111 /><rect x=1326 fill=#ff0010 /><rect x=1332 fill=#ff000f /><rect x=1338 fill=#ff000e /><rect x=1344 fill=#ff000d /><rect x=1350 fill=#ff000c /><rect x=1356 fill=#ff000c /><rect x=1362 fill=#ff000b /><rect x=1368 fill=#ff000a /><rect x=1374 fill=#ff0009 /><rect x=1380 fill=#ff0009 /><rect x=1386 fill=#ff0008 /><rect x=1392 fill=#ff0007 /><rect x=1398 fill=#ff0007 /><rect x=1404 fill=#ff0006 /><rect x=1410 fill=#ff0005 /><rect x=1416 fill=#ff0005 /><rect x=1422 fill=#ff0004 /><rect x=1428 fill=#ff0004 /><rect x=1434 fill=#ff0003 /><rect x=1440 fill=#ff0002 /><rect x=1446 fill=#ff0002 /><rect x=1452 fill=#ff0001 /><rect x=1458 fill=#ff0001 /><rect x=1464 fill=#f00 /><rect x=1470 fill=#f00 /><rect x=1476 fill=#f00 /><rect x=1482 fill=#f00 /></g>
<g transform="translate(0 114)"><rect x=960 fill=#00ff82 /><rect x=966 fill=#00ff83 /><rect x=972 fill=#00ff83 /><rect x=978 fill=#00ff84 /><rect x=984 fill=#00ff85 /><rect x=990 fill=#00ff86 /><rect x=996 fill=#00ff87 /><rect x=1002 fill=#00ff87 /><rect x=1008 fill=#0f8 /><rect x=1014 fill=#00ff89 /><rect x=1020 fill=#00ff8a /><rect x=1026 fill=#00ff8c /><rect x=1032 fill=#00ff8d /><rect x=1038 fill=#00ff8e /><rect x=1044 fill=#00ff8f /><rect x=1050 fill=#00ff90 /><rect x=1056 fill=#00ff92 /><rect x=1062 fill=#00ff93 /><rect x=1068 fill=#00ff94 /><rect x=1074 fill=#00ff96 /><rect x=1080 fill=#1cff97 /><rect x=1086 fill=#35ff99 /><rect x=1092 fill=#4fff9b /><rect x=1098 fill=#6aff9d /><rect x=1104 fill=#85ff9f /><rect x=1110 fill=#a1ffa1 /><rect x=1116 fill=#beffa3 /><rect x=1122 fill=#dcffa5 /><rect x=1128 fill=#fcffa8 /><rect x=1134 fill=#ffe398 /><rect x=1140 fill=#ffca89 /><rect x=1146 fill=#ffb57d /><rect x=1152 fill=#ffa372 /><rect x=1158 fill=#ff9369 /><rect x=1164 fill=#ff8662 /><rect x=1170 fill=#ff7a5b /><rect x=1176 fill=#ff6f54 /><rect x=1182 fill=#ff654f /><rect x=1188 fill=#ff5c4a /><rect x=1194 fill=#ff5445 /><rect x=1200 fill=#ff4d41 /><rect x=1206 fill=#ff473d /><rect x=1212 fill=#ff403a /><rect x=1218 fill=#ff3b37 /><rect x=1224 fill=#ff3534 /><rect x=1230 fill=#ff3131 /><rect x=1236 fill=#ff2c2f /><rect x=1242 fill=#ff282c /><rect x=1248 fill=#ff242a /><rect x=1254 fill=#ff2028 /><rect x=1260 fill=#ff1c26 /><rect x=1266 fill=#ff1924 /><rect x=1272 fill=#ff1622 /><rect x=1278 fill=#ff1221 /><rect x=1284 fill=#ff0f1f /><rect x=1290 fill=#ff0d1e /><rect x=1296 fill=#ff0a1c /><rect x=1302 fill=#ff071b /><rect x=1308 fill=#ff041a /><rect x=1314 fill=#ff0218 /><rect x=1320 fill=#ff0017 /><rect x=1326 fill=#ff0016 /><rect x=1332 fill=#ff0015 /><rect x=1338 fill=#ff0014 /><rect x=1344 fill=#ff0013 /><rect x=1350 fill=#ff0012 /><rect x=1356 fill=#f01 /><rect x=1362 fill=#ff0010 /><rect x=1368 fill=#ff000f /><rect x=1374 fill=#ff000f /><rect x=1380 fill=#ff000e /><rect x=1386 fill=#ff000d /><rect x=1392 fill=#ff000c /><rect x=1398 fill=#ff000c /><rect x=1404 fill=#ff000b /><rect x=1410 fill=#ff000a /><rect x=1416 fill=#ff000a /><rect x=1422 fill=#ff0009 /><rect x=1428 fill=#ff0008 /><rect x=1434 fill=#ff0008 /><rect x=1440 fill=#ff0007 /><rect x=1446 fill=#ff0007 /><rect x=1452 fill=#ff0006 /><rect x=1458 fill=#ff0006 /><rect x=1464 fill=#ff0005 /><rect x=1470 fill=#ff0004 /><rect x=1476 fill=#ff0004 /></g>
<g transform="translate(0 120)"><rect x=960 fill=#00ff90 /><rect x=966 fill=#00ff91 /><rect x=972 fill=#00ff92 /><rect x=978 fill=#00ff93 /><rect x=984 fill=#00ff94 /><rect x=990 fill=#00ff95 /><rect x=996 fill=#00ff96 /><rect x=1002 fill=#00ff98 /><rect x=1008 fill=#0f9 /><rect x=1014 fill=#00ff9a /><rect x=1020 fill=#00ff9b /><rect x=1026 fill=#00ff9d /><rect x=1032 fill=#00ff9e /><rect x=1038 fill=#00ffa0 /><rect x=1044 fill=#00ffa2 /><rect x=1050 fill=#00ffa3 /><rect x=1056 fill=#00ffa5 /><rect x=1062 fill=#00ffa7 /><rect x=1068 fill=#00ffa9 /><rect x=1074 fill=#00ffab /><rect x=1080 fill=#18ffad /><rect x=1086 fill=#33ffaf /><rect x=1092 fill=#4dffb2 /><rect x=1098 fill=#68ffb4 /><rect x=1104 fill=#84ffb7 /><rect x=1110 fill=#a1ffb9 /><rect x=1116 fill=#bfffbc /><rect x=1122 fill=#deffc0 /><rect x=1128 fill=#ffffc3 /><rect x=1134 fill=#ffe0af /><rect x=1140 fill=#ffc79e /><rect x=1146 fill=#ffb290 /><rect x=1152 fill=#ffa084 /><rect x=1158 fill=#ff907a /><rect x=1164 fill=#ff8371 /><rect x=1170 fill=#ff7769 /><rect x=1176 fill=#ff6c62 /><rect x=1182 fill=#ff625c /><rect x=1188 fill=#ff5a56 /><rect x=1194 fill=#ff5251 /><rect x=1200 fill=#ff4a4c /><rect x=1206 fill=#ff4448 /><rect x=1212 fill=#ff3e44 /><rect x=1218 fill=#ff3841 /><rect x=1224 fill=#ff333d /><rect x=1230 fill=#ff2e3a /><rect x=1236 fill=#ff2a37 /><rect x=1242 fill=#ff2535 /><rect x=1248 fill=#ff2132 /><rect x=1254 fill=#ff1e30 /><rect x=1260 fill=#ff1a2e /><rect x=1266 fill=#ff172c /><rect x=1272 fill=#ff132a /><rect x=1278 fill=#ff1028 /><rect x=1284 fill=#ff0d26 /><rect x=1290 fill=#ff0a25 /><rect x=1296 fill=#ff0823 /><rect x=1302 fill=#ff0521 /><rect x=1308 fill=#ff0220 /><rect x=1314 fill=#ff001f /><rect x=1320 fill=#ff001d /><rect x=1326 fill=#ff001c /><rect x=1332 fill=#ff001b /><rect x=1338 fill=#ff001a /><rect x=1344 fill=#ff0019 /><rect x=1350 fill=#ff0018 /><rect x=1356 fill=#ff0017 /><rect x=1362 fill=#ff0016 /><rect x=1368 fill=#ff0015 /><rect x=1374 fill=#ff0014 /><rect x=1380 fill=#ff0013 /><rect x=1386 fill=#ff0012 /><rect x=1392 fill=#f01 /><rect x=1398 fill=#f01 /><rect x=1404 fill=#ff0010 /><rect x=1410 fill=#ff000f /><rect x=1416 fill=#ff000e /><rect x=1422 fill=#ff000e /><rect x=1428 fill=#ff000d /><rect x=1434 fill=#ff000c /><rect x=1440 fill=#ff000c /><rect x=1446 fill=#ff000b /><rect x=1452 fill=#ff000a /><rect x=1458 fill=#ff000a /><rect x=1464 fill=#ff0009 /><rect x=1470 fill=#ff0009 /></g>
<g transform="translate(0 126)"><rect x=966 fill=#00ffa0 /><rect x=972 fill=#00ffa1 /><rect x=978 fill=#00ffa2 /><rect x=984 fill=#00ffa4 /><rect x=990 fill=#00ffa5 /><rect x=996 fill=#00ffa6 /><rect x=1002 fill=#00ffa8 /><rect x=1008 fill=#0fa /><rect x=1014 fill=#00ffab /><rect x=1020 fill=#00ffad /><rect x=1026 fill=#00ffaf /><rect x=1032 fill=#00ffb1 /><rect x=1038 fill=#00ffb3 /><rect x=1044 fill=#00ffb5 /><rect x=1050 fill=#00ffb7 /><rect x=1056 fill=#00ffb9 /><rect x=1062 fill=#0fb /><rect x=1068 fill=#00ffbe /><rect x=1074 fill=#00ffc1 /><rect x=1080 fill=#15ffc3 /><rect x=1086 fill=#30ffc6 /><rect x=1092 fill=#4bffc9 /><rect x=1098 fill=#67ffcc /><rect x=1104 fill=#83ffd0 /><rect x=1110 fill=#a1ffd3 /><rect x=1116 fill=#c0ffd7 /><rect x=1122 fill=#e0ffdb /><rect x=1128 fill=#fffcdd /><rect x=1134 fill=#ffddc6 /><rect x=1140 fill=#ffc4b3 /><rect x=1146 fill=#ffafa3 /><rect x=1152 fill=#ff9d96 /><rect x=1158 fill=#ff8d8a /><rect x=1164 fill=#ff7f80 /><rect x=1170 fill=#ff7377 /><rect x=1176 fill=#ff6970 /><rect x=1182 fill=#ff5f69 /><rect x=1188 fill=#ff5762 /><rect x=1194 fill=#ff4f5d /><rect x=1200 fill=#ff4857 /><rect x=1206 fill=#ff4153 /><rect x=1212 fill=#ff3b4e /><rect x=1218 fill=#ff364a /><rect x=1224 fill=#ff3047 /><rect x=1230 fill=#ff2c43 /><rect x=1236 fill=#ff2740 /><rect x=1242 fill=#ff233d /><rect x=1248 fill=#ff1f3b /><rect x=1254 fill=#ff1b38 /><rect x=1260 fill=#ff1835 /><rect x=1266 fill=#ff1433 /><rect x=1272 fill=#ff1131 /><rect x=1278 fill=#ff0e2f /><rect x=1284 fill=#ff0b2d /><rect x=1290 fill=#ff082b /><rect x=1296 fill=#ff052a /><rect x=1302 fill=#ff0228 /><rect x=1308 fill=#ff0026 /><rect x=1314 fill=#ff0025 /><rect x=1320 fill=#ff0023 /><rect x=1326 fill=#f02 /><rect x=1332 fill=#ff0021 /><rect x=1338 fill=#ff001f /><rect x=1344 fill=#ff001e /><rect x=1350 fill=#ff001d /><rect x=1356 fill=#ff001c /><rect x=1362 fill=#ff001b /><rect x=1368 fill=#ff001a /><rect x=1374 fill=#ff0019 /><rect x=1380 fill=#ff0018 /><rect x=1386 fill=#ff0017 /><rect x=1392 fill=#ff0016 /><rect x=1398 fill=#ff0015 /><rect x=1404 fill=#ff0015 /><rect x=1410 fill=#ff0014 /><rect x=1416 fill=#ff0013 /><rect x=1422 fill=#ff0012 /><rect x=1428 fill=#f01 /><rect x=1434 fill=#f01 /><rect x=1440 fill=#ff0010 /><rect x=1446 fill=#ff000f /><rect x=1452 fill=#ff000f /><rect x=1458 fill=#ff000e /><rect x=1464 fill=#ff000d /><rect x=1470 fill=#ff000d /></g>
<g transform="translate(0 132)"><rect x=966 fill=#00ffaf /><rect x=972 fill=#00ffb0 /><rect x=978 fill=#00ffb2 /><rect x=984 fill=#00ffb3 /><rect x=990 fill=#00ffb5 /><rect x=996 fill=#00ffb7 /><rect x=1002 fill=#00ffb9 /><rect x=1008 fill=#0fb /><rect x=1014 fill=#00ffbd /><rect x=1020 fill=#00ffbf /><rect x=1026 fill=#00ffc1 /><rect x=1032 fill=#00ffc3 /><rect x=1038 fill=#00ffc6 /><rect x=1044 fill=#00ffc8 /><rect x=1050 fill=#00ffcb /><rect x=1056 fill=#00ffce /><rect x=1062 fill=#00ffd1 /><rect x=1068 fill=#00ffd4 /><rect x=1074 fill=#00ffd7 /><rect x=1080 fill=#11ffda /><rect x=1086 fill=#2dffde /><rect x=1092 fill=#49ffe2 /><rect x=1098 fill=#66ffe6 /><rect x=1104 fill=#83ffea /><rect x=1110 fill=#a1ffee /><rect x=1116 fill=#c1fff3 /><rect x=1122 fill=#e2fff8 /><rect x=1128 fill=#fff9f7 /><rect x=1134 fill=#ffdade /><rect x=1140 fill=#ffc1c8 /><rect x=1146 fill=#ffabb7 /><rect x=1152 fill=#ff99a8 /><rect x=1158 fill=#ff8a9b /><rect x=1164 fill=#ff7c90 /><rect x=1170 fill=#ff7086 /><rect x=1176 fill=#ff667d /><rect x=1182 fill=#ff5c76 /><rect x=1188 fill=#ff546f /><rect x=1194 fill=#ff4c68 /><rect x=1200 fill=#ff4563 /><rect x=1206 fill=#ff3e5d /><rect x=1212 fill=#ff3859 /><rect x=1218 fill=#ff3354 /><rect x=1224 fill=#ff2e50 /><rect x=1230 fill=#ff294c /><rect x=1236 fill=#ff2549 /><rect x=1242 fill=#ff2046 /><rect x=1248 fill=#ff1c43 /><rect x=1254 fill=#ff1940 /><rect x=1260 fill=#ff153d /><rect x=1266 fill=#ff123b /><rect x=1272 fill=#ff0f38 /><rect x=1278 fill=#ff0c36 /><rect x=1284 fill=#ff0934 /><rect x=1290 fill=#ff0632 /><rect x=1296 fill=#ff0330 /><rect x=1302 fill=#ff002e /><rect x=1308 fill=#ff002d /><rect x=1314 fill=#ff002b /><rect x=1320 fill=#ff0029 /><rect x=1326 fill=#ff0028 /><rect x=1332 fill=#ff0026 /><rect x=1338 fill=#ff0025 /><rect x=1344 fill=#ff0024 /><rect x=1350 fill=#ff0023 /><rect x=1356 fill=#ff0021 /><rect x=1362 fill=#ff0020 /><rect x=1368 fill=#ff001f /><rect x=1374 fill=#ff001e /><rect x=1380 fill=#ff001d /><rect x=1386 fill=#ff001c /><rect x=1392 fill=#ff001b /><rect x=1398 fill=#ff001a /><rect x=1404 fill=#ff0019 /><rect x=1410 fill=#ff0018 /><rect x=1416 fill=#ff0017 /><rect x=1422 fill=#ff0017 /><rect x=1428 fill=#ff0016 /><rect x=1434 fill=#ff0015 /><rect x=1440 fill=#ff0014 /><rect x=1446 fill=#ff0014 /><rect x=1452 fill=#ff0013 /><rect x=1458 fill=#ff0012 /><rect x=1464 fill=#ff0012 /></g>
<g transform="translate(0 138)"><rect x=966 fill=#00ffbe /><rect x=972 fill=#00ffc0 /><rect x=978 fill=#00ffc2 /><rect x=984 fill=#00ffc4 /><rect x=990 fill=#00ffc6 /><rect x=996 fill=#00ffc8 /><rect x=1002 fill=#00ffca /><rect x=1008 fill=#0fc /><rect x=1014 fill=#00ffcf /><rect x=1020 fill=#00ffd1 /><rect x=1026 fill=#00ffd4 /><rect x=1032 fill=#00ffd7 /><rect x=1038 fill=#00ffda /><rect x=1044 fill=#0fd /><rect x=1050 fill=#00ffe0 /><rect x=1056 fill=#00ffe3 /><rect x=1062 fill=#00ffe7 /><rect x=1068 fill=#00ffea /><rect x=1074 fill=#0fe /><rect x=1080 fill=#0dfff2 /><rect x=1086 fill=#2afff7 /><rect x=1092 fill=#47fffb /><rect x=1098 fill=#64feff /><rect x=1104 fill=#7ff9ff /><rect x=1110 fill=#9bf4ff /><rect x=1116 fill=#b6efff /><rect x=1122 fill=#d1eaff /><rect x=1128 fill=#ede4ff /><rect x=1134 fill=#ffd7f6 /><rect x=1140 fill=#ffbdde /><rect x=1146 fill=#ffa8cb /><rect x=1152 fill=#ff96ba /><rect x=1158 fill=#ff86ac /><rect x=1164 fill=#ff799f /><rect x=1170 fill=#ff6d95 /><rect x=1176 fill=#ff638b /><rect x=1182 fill=#ff5983 /><rect x=1188 fill=#ff517b /><rect x=1194 fill=#ff4974 /><rect x=1200 fill=#ff426e /><rect x=1206 fill=#ff3c68 /><rect x=1212 fill=#ff3663 /><rect x=1218 fill=#ff305e /><rect x=1224 fill=#ff2b5a /><rect x=1230 fill=#ff2655 /><rect x=1236 fill=#ff2252 /><rect x=1242 fill=#ff1e4e /><rect x=1248 fill=#ff1a4b /><rect x=1254 fill=#ff1648 /><rect x=1260 fill=#ff1345 /><rect x=1266 fill=#ff0f42 /><rect x=1272 fill=#ff0c40 /><rect x=1278 fill=#ff093d /><rect x=1284 fill=#ff063b /><rect x=1290 fill=#ff0339 /><rect x=1296 fill=#ff0037 /><rect x=1302 fill=#ff0035 /><rect x=1308 fill=#f03 /><rect x=1314 fill=#ff0031 /><rect x=1320 fill=#ff002f /><rect x=1326 fill=#ff002e /><rect x=1332 fill=#ff002c /><rect x=1338 fill=#ff002b /><rect x=1344 fill=#ff0029 /><rect x=1350 fill=#ff0028 /><rect x=1356 fill=#ff0027 /><rect x=1362 fill=#ff0025 /><rect x=1368 fill=#ff0024 /><rect x=1374 fill=#ff0023 /><rect x=1380 fill=#f02 /><rect x=1386 fill=#ff0021 /><rect x=1392 fill=#ff0020 /><rect x=1398 fill=#ff001f /><rect x=1404 fill=#ff001e /><rect x=1410 fill=#ff001d /><rect x=1416 fill=#ff001c /><rect x=1422 fill=#ff001b /><rect x=1428 fill=#ff001a /><rect x=1434 fill=#ff0019 /><rect x=1440 fill=#ff0018 /><rect x=1446 fill=#ff0018 /><rect x=1452 fill=#ff0017 /><rect x=1458 fill=#ff0016 /></g>
<g transform="translate(0 144)"><rect x=972 fill=#00ffd0 /><rect x=978 fill=#00ffd2 /><rect x=984 fill=#00ffd4 /><rect x=990 fill=#00ffd7 /><rect x=996 fill=#00ffd9 /><rect x=1002 fill=#00ffdc /><rect x=1008 fill=#00ffdf /><rect x=1014 fill=#00ffe2 /><rect x=1020 fill=#00ffe4 /><rect x=1026 fill=#00ffe8 /><rect x=1032 fill=#00ffeb /><rect x=1038 fill=#0fe /><rect x=1044 fill=#00fff2 /><rect x=1050 fill=#00fff6 /><rect x=1056 fill=#00fff9 /><rect x=1062 fill=#00fffe /><rect x=1068 fill=#00fcff /><rect x=1074 fill=#00f8ff /><rect x=1080 fill=#09f3ff /><rect x=1086 fill=#25efff /><rect x=1092 fill=#3feaff /><rect x=1098 fill=#59e5ff /><rect x=1104 fill=#72e1ff /><rect x=1110 fill=#8bdcff /><rect x=1116 fill=#a4d7ff /><rect x=1122 fill=#bed2ff /><rect x=1128 fill=#d7cdff /><rect x=1134 fill=#f0c7ff /><rect x=1140 fill=#ffbaf4 /><rect x=1146 fill=#ffa4df /><rect x=1152 fill=#ff92cc /><rect x=1158 fill=#ff83bd /><rect x=1164 fill=#ff76af /><rect x=1170 fill=#ff6aa3 /><rect x=1176 fill=#ff5f99 /><rect x=1182 fill=#ff5690 /><rect x=1188 fill=#ff4e87 /><rect x=1194 fill=#ff4680 /><rect x=1200 fill=#ff3f79 /><rect x=1206 fill=#ff3973 /><rect x=1212 fill=#ff336d /><rect x=1218 fill=#ff2d68 /><rect x=1224 fill=#ff2863 /><rect x=1230 fill=#ff245f /><rect x=1236 fill=#ff1f5a /><rect x=1242 fill=#ff1b57 /><rect x=1248 fill=#ff1753 /><rect x=1254 fill=#ff1450 /><rect x=1260 fill=#ff104c /><rect x=1266 fill=#ff0d4a /><rect x=1272 fill=#ff0a47 /><rect x=1278 fill=#ff0744 /><rect x=1284 fill=#ff0442 /><rect x=1290 fill=#ff003f /><rect x=1296 fill=#ff003d /><rect x=1302 fill=#ff003b /><rect x=1308 fill=#ff0039 /><rect x=1314 fill=#ff0037 /><rect x=1320 fill=#ff0035 /><rect x=1326 fill=#f03 /><rect x=1332 fill=#ff0032 /><rect x=1338 fill=#ff0030 /><rect x=1344 fill=#ff002f /><rect x=1350 fill=#ff002d /><rect x=1356 fill=#ff002c /><rect x=1362 fill=#ff002a /><rect x=1368 fill=#ff0029 /><rect x=1374 fill=#ff0028 /><rect x=1380 fill=#ff0027 /><rect x=1386 fill=#ff0025 /><rect x=1392 fill=#ff0024 /><rect x=1398 fill=#ff0023 /><rect x=1404 fill=#f02 /><rect x=1410 fill=#ff0021 /><rect x=1416 fill=#ff0020 /><rect x=1422 fill=#ff001f /><rect x=1428 fill=#ff001e /><rect x=1434 fill=#ff001d /><rect x=1440 fill=#ff001d /><rect x=1446 fill=#ff001c /><rect x=1452 fill=#ff001b /></g>
<g transform="translate(0 150)"><rect x=972 fill=#00ffe0 /><rect x=978 fill=#00ffe3 /><rect x=984 fill=#00ffe5 /><rect x=990 fill=#00ffe8 /><rect x=996 fill=#00ffeb /><rect x=1002 fill=#0fe /><rect x=1008 fill=#00fff1 /><rect x=1014 fill=#00fff5 /><rect x=1020 fill=#00fff8 /><rect x=1026 fill=#00fffc /><rect x=1032 fill=#00feff /><rect x=1038 fill=#00fbff /><rect x=1044 fill=#00f7ff /><rect x=1050 fill=#00f3ff /><rect x=1056 fill=#00efff /><rect x=1062 fill=#00ebff /><rect x=1068 fill=#00e6ff /><rect x=1074 fill=#00e2ff /><rect x=1080 fill=#04deff /><rect x=1086 fill=#1fd9ff /><rect x=1092 fill=#37d5ff /><rect x=1098 fill=#4fd0ff /><rect x=1104 fill=#67ccff /><rect x=1110 fill=#7ec7ff /><rect x=1116 fill=#96c2ff /><rect x=1122 fill=#adbdff /><rect x=1128 fill=#c4b8ff /><rect x=1134 fill=#dcb3ff /><rect x=1140 fill=#f4aeff /><rect x=1146 fill=#ffa1f3 /><rect x=1152 fill=#ff8fdf /><rect x=1158 fill=#ff7fce /><rect x=1164 fill=#ff72bf /><rect x=1170 fill=#ff66b2 /><rect x=1176 fill=#ff5ca7 /><rect x=1182 fill=#ff539d /><rect x=1188 fill=#ff4a94 /><rect x=1194 fill=#ff438c /><rect x=1200 fill=#ff3c84 /><rect x=1206 fill=#ff367d /><rect x=1212 fill=#ff3077 /><rect x=1218 fill=#ff2b72 /><rect x=1224 fill=#ff266c /><rect x=1230 fill=#ff2168 /><rect x=1236 fill=#ff1d63 /><rect x=1242 fill=#ff195f /><rect x=1248 fill=#ff155b /><rect x=1254 fill=#ff1158 /><rect x=1260 fill=#ff0e54 /><rect x=1266 fill=#ff0a51 /><rect x=1272 fill=#ff074e /><rect x=1278 fill=#ff044b /><rect x=1284 fill=#ff0148 /><rect x=1290 fill=#ff0046 /><rect x=1296 fill=#f04 /><rect x=1302 fill=#ff0041 /><rect x=1308 fill=#ff003f /><rect x=1314 fill=#ff003d /><rect x=1320 fill=#ff003b /><rect x=1326 fill=#ff0039 /><rect x=1332 fill=#ff0037 /><rect x=1338 fill=#ff0036 /><rect x=1344 fill=#ff0034 /><rect x=1350 fill=#ff0032 /><rect x=1356 fill=#ff0031 /><rect x=1362 fill=#ff002f /><rect x=1368 fill=#ff002e /><rect x=1374 fill=#ff002d /><rect x=1380 fill=#ff002b /><rect x=1386 fill=#ff002a /><rect x=1392 fill=#ff0029 /><rect x=1398 fill=#ff0028 /><rect x=1404 fill=#ff0027 /><rect x=1410 fill=#ff0026 /><rect x=1416 fill=#ff0025 /><rect x=1422 fill=#ff0024 /><rect x=1428 fill=#ff0023 /><rect x=1434 fill=#f02 /><rect x=1440 fill=#ff0021 /><rect x=1446 fill=#ff0020 /></g>
<g transform="translate(0 156)"><rect x=972 fill=#00fff1 /><rect x=978 fill=#00fff4 /><rect x=984 fill=#00fff7 /><rect x=990 fill=#00fffa /><rect x=996 fill=#00fffe /><rect x=1002 fill=#00fdff /><rect x=1008 fill=#00f9ff /><rect x=1014 fill=#00f6ff /><rect x=1020 fill=#00f2ff /><rect x=1026 fill=#00efff /><rect x=1032 fill=#00ebff /><rect x=1038 fill=#00e7ff /><rect x=1044 fill=#00e3ff /><rect x=1050 fill=#00dfff /><rect x=1056 fill=#00dbff /><rect x=1062 fill=#00d7ff /><rect x=1068 fill=#00d3ff /><rect x=1074 fill=#00cfff /><rect x=1080 fill=#00cbff /><rect x=1086 fill=#19c7ff /><rect x=1092 fill=#31c2ff /><rect x=1098 fill=#47beff /><rect x=1104 fill=#5db9ff /><rect x=1110 fill=#73b5ff /><rect x=1116 fill=#89b0ff /><rect x=1122 fill=#9facff /><rect x=1128 fill=#b4a7ff /><rect x=1134 fill=#caa2ff /><rect x=1140 fill=#e09dff /><rect x=1146 fill=#f698ff /><rect x=1152 fill=#ff8bf2 /><rect x=1158 fill=#ff7ce0 /><rect x=1164 fill=#ff6fd0 /><rect x=1170 fill=#ff63c1 /><rect x=1176 fill=#ff59b5 /><rect x=1182 fill=#ff4faa /><rect x=1188 fill=#ff47a0 /><rect x=1194 fill=#ff4098 /><rect x=1200 fill=#ff3990 /><rect x=1206 fill=#f38 /><rect x=1212 fill=#ff2d82 /><rect x=1218 fill=#ff287c /><rect x=1224 fill=#ff2376 /><rect x=1230 fill=#ff1e71 /><rect x=1236 fill=#ff1a6c /><rect x=1242 fill=#ff1667 /><rect x=1248 fill=#ff1263 /><rect x=1254 fill=#ff0f5f /><rect x=1260 fill=#ff0b5c /><rect x=1266 fill=#ff0858 /><rect x=1272 fill=#ff0455 /><rect x=1278 fill=#ff0152 /><rect x=1284 fill=#ff004f /><rect x=1290 fill=#ff004d /><rect x=1296 fill=#ff004a /><rect x=1302 fill=#ff0048 /><rect x=1308 fill=#ff0045 /><rect x=1314 fill=#ff0043 /><rect x=1320 fill=#ff0041 /><rect x=1326 fill=#ff003f /><rect x=1332 fill=#ff003d /><rect x=1338 fill=#ff003b /><rect x=1344 fill=#ff0039 /><rect x=1350 fill=#ff0038 /><rect x=1356 fill=#ff0036 /><rect x=1362 fill=#ff0035 /><rect x=1368 fill=#f03 /><rect x=1374 fill=#ff0032 /><rect x=1380 fill=#ff0030 /><rect x=1386 fill=#ff002f /><rect x=1392 fill=#ff002e /><rect x=1398 fill=#ff002c /><rect x=1404 fill=#ff002b /><rect x=1410 fill=#ff002a /><rect x=1416 fill=#ff0029 /><rect x=1422 fill=#ff0028 /><rect x=1428 fill=#ff0027 /><rect x=1434 fill=#ff0026 /><rect x=1440 fill=#ff0025 /></g>
<g transform="translate(0 162)"><rect x=978 fill=#00f8ff /><rect x=984 fill=#00f5ff /><rect x=990 fill=#00f2ff /><rect x=996 fill=#0ef /><rect x=1002 fill=#00ebff /><rect x=1008 fill=#00e8ff /><rect x=1014 fill=#00e4ff /><rect x=1020 fill=#00e1ff /><rect x=1026 fill=#0df /><rect x=1032 fill=#00d9ff /><rect x=1038 fill=#00d6ff /><rect x=1044 fill=#00d2ff /><rect x=1050 fill=#00ceff /><rect x=1056 fill=#00caff /><rect x=1062 fill=#00c7ff /><rect x=1068 fill=#00c3ff /><rect x=1074 fill=#00bfff /><rect x=1080 fill=#00baff /><rect x=1086 fill=#14b6ff /><rect x=1092 fill=#2bb2ff /><rect x=1098 fill=#40aeff /><rect x=1104 fill=#55a9ff /><rect x=1110 fill=#69a5ff /><rect x=1116 fill=#7ea1ff /><rect x=1122 fill=#929cff /><rect x=1128 fill=#a697ff /><rect x=1134 fill=#bb93ff /><rect x=1140 fill=#cf8eff /><rect x=1146 fill=#e489ff /><rect x=1152 fill=#f984ff /><rect x=1158 fill=#ff78f1 /><rect x=1164 fill=#ff6be0 /><rect x=1170 fill=#ff5fd1 /><rect x=1176 fill=#ff55c3 /><rect x=1182 fill=#ff4cb8 /><rect x=1188 fill=#ff44ad /><rect x=1194 fill=#ff3da4 /><rect x=1200 fill=#ff369b /><rect x=1206 fill=#ff3093 /><rect x=1212 fill=#ff2a8c /><rect x=1218 fill=#ff2585 /><rect x=1224 fill=#ff207f /><rect x=1230 fill=#ff1b7a /><rect x=1236 fill=#ff1775 /><rect x=1242 fill=#ff1370 /><rect x=1248 fill=#ff0f6c /><rect x=1254 fill=#ff0c67 /><rect x=1260 fill=#ff0863 /><rect x=1266 fill=#ff0560 /><rect x=1272 fill=#ff025c /><rect x=1278 fill=#ff0059 /><rect x=1284 fill=#ff0056 /><rect x=1290 fill=#ff0053 /><rect x=1296 fill=#ff0050 /><rect x=1302 fill=#ff004e /><rect x=1308 fill=#ff004b /><rect x=1314 fill=#ff0049 /><rect x=1320 fill=#ff0047 /><rect x=1326 fill=#ff0045 /><rect x=1332 fill=#ff0043 /><rect x=1338 fill=#ff0041 /><rect x=1344 fill=#ff003f /><rect x=1350 fill=#ff003d /><rect x=1356 fill=#ff003b /><rect x=1362 fill=#ff003a /><rect x=1368 fill=#ff0038 /><rect x=1374 fill=#ff0036 /><rect x=1380 fill=#ff0035 /><rect x=1386 fill=#ff0034 /><rect x=1392 fill=#ff0032 /><rect x=1398 fill=#ff0031 /><rect x=1404 fill=#ff0030 /><rect x=1410 fill=#ff002e /><rect x=1416 fill=#ff002d /><rect x=1422 fill=#ff002c /><rect x=1428 fill=#ff002b /><rect x=1434 fill=#ff002a /></g>
<g transform="translate(0 168)"><rect x=978 fill=#00e8ff /><rect x=984 fill=#00e5ff /><rect x=990 fill=#00e2ff /><rect x=996 fill=#00deff /><rect x=1002 fill=#00dbff /><rect x=1008 fill=#00d8ff /><rect x=1014 fill=#00d4ff /><rect x=1020 fill=#00d1ff /><rect x=1026 fill=#00cdff /><rect x=1032 fill=#00caff /><rect x=1038 fill=#00c6ff /><rect x=1044 fill=#00c3ff /><rect x=1050 fill=#00bfff /><rect x=1056 fill=#0bf /><rect x=1062 fill=#00b8ff /><rect x=1068 fill=#00b4ff /><rect x=1074 fill=#00b0ff /><rect x=1080 fill=#00acff /><rect x=1086 fill=#10a8ff /><rect x=1092 fill=#25a4ff /><rect x=1098 fill=#39a0ff /><rect x=1104 fill=#4d9bff /><rect x=1110 fill=#6097ff /><rect x=1116 fill=#7493ff /><rect x=1122 fill=#878eff /><rect x=1128 fill=#9a8aff /><rect x=1134 fill=#ad85ff /><rect x=1140 fill=#c181ff /><rect x=1146 fill=#d47cff /><rect x=1152 fill=#e777ff /><rect x=1158 fill=#fb72ff /><rect x=1164 fill=#ff67f1 /><rect x=1170 fill=#ff5ce0 /><rect x=1176 fill=#ff52d2 /><rect x=1182 fill=#ff49c5 /><rect x=1188 fill=#ff41ba /><rect x=1194 fill=#ff39b0 /><rect x=1200 fill=#ff33a6 /><rect x=1206 fill=#ff2d9e /><rect x=1212 fill=#ff2796 /><rect x=1218 fill=#ff228f /><rect x=1224 fill=#ff1d89 /><rect x=1230 fill=#ff1983 /><rect x=1236 fill=#ff147e /><rect x=1242 fill=#ff1078 /><rect x=1248 fill=#ff0d74 /><rect x=1254 fill=#ff096f /><rect x=1260 fill=#ff066b /><rect x=1266 fill=#ff0267 /><rect x=1272 fill=#ff0064 /><rect x=1278 fill=#ff0060 /><rect x=1284 fill=#ff005d /><rect x=1290 fill=#ff005a /><rect x=1296 fill=#ff0057 /><rect x=1302 fill=#ff0054 /><rect x=1308 fill=#ff0051 /><rect x=1314 fill=#ff004f /><rect x=1320 fill=#ff004d /><rect x=1326 fill=#ff004a /><rect x=1332 fill=#ff0048 /><rect x=1338 fill=#ff0046 /><rect x=1344 fill=#f04 /><rect x=1350 fill=#ff0042 /><rect x=1356 fill=#ff0040 /><rect x=1362 fill=#ff003f /><rect x=1368 fill=#ff003d /><rect x=1374 fill=#ff003b /><rect x=1380 fill=#ff003a /><rect x=1386 fill=#ff0038 /><rect x=1392 fill=#ff0037 /><rect x=1398 fill=#ff0035 /><rect x=1404 fill=#ff0034 /><rect x=1410 fill=#f03 /><rect x=1416 fill=#ff0031 /><rect x=1422 fill=#ff0030 /><rect x=1428 fill=#ff002f /></g>
<g transform="translate(0 174)"><rect x=978 fill=#00daff /><rect x=984 fill=#00d6ff /><rect x=990 fill=#00d3ff /><rect x=996 fill=#00d0ff /><rect x=1002 fill=#00cdff /><rect x=1008 fill=#00caff /><rect x=1014 fill=#00c6ff /><rect x=1020 fill=#00c3ff /><rect x=1026 fill=#00bfff /><rect x=1032 fill=#00bcff /><rect x=1038 fill=#00b9ff /><rect x=1044 fill=#00b5ff /><rect x=1050 fill=#00b1ff /><rect x=1056 fill=#00aeff /><rect x=1062 fill=#0af /><rect x=1068 fill=#00a6ff /><rect x=1074 fill=#00a3ff /><rect x=1080 fill=#009fff /><rect x=1086 fill=#0c9bff /><rect x=1092 fill=#2097ff /><rect x=1098 fill=#3493ff /><rect x=1104 fill=#468fff /><rect x=1110 fill=#598bff /><rect x=1116 fill=#6b86ff /><rect x=1122 fill=#7d82ff /><rect x=1128 fill=#8f7eff /><rect x=1134 fill=#a17aff /><rect x=1140 fill=#b375ff /><rect x=1146 fill=#c671ff /><rect x=1152 fill=#d86cff /><rect x=1158 fill=#ea67ff /><rect x=1164 fill=#fd62ff /><rect x=1170 fill=#ff58f0 /><rect x=1176 fill=#ff4ee1 /><rect x=1182 fill=#ff45d3 /><rect x=1188 fill=#ff3dc7 /><rect x=1194 fill=#ff36bc /><rect x=1200 fill=#ff2fb2 /><rect x=1206 fill=#ff29a9 /><rect x=1212 fill=#ff24a1 /><rect x=1218 fill=#ff1f99 /><rect x=1224 fill=#ff1a93 /><rect x=1230 fill=#ff168c /><rect x=1236 fill=#ff1186 /><rect x=1242 fill=#ff0e81 /><rect x=1248 fill=#ff0a7c /><rect x=1254 fill=#ff0677 /><rect x=1260 fill=#ff0273 /><rect x=1266 fill=#ff006f /><rect x=1272 fill=#ff006b /><rect x=1278 fill=#ff0067 /><rect x=1284 fill=#ff0064 /><rect x=1290 fill=#ff0060 /><rect x=1296 fill=#ff005d /><rect x=1302 fill=#ff005a /><rect x=1308 fill=#ff0058 /><rect x=1314 fill=#f05 /><rect x=1320 fill=#ff0052 /><rect x=1326 fill=#ff0050 /><rect x=1332 fill=#ff004e /><rect x=1338 fill=#ff004b /><rect x=1344 fill=#ff0049 /><rect x=1350 fill=#ff0047 /><rect x=1356 fill=#ff0045 /><rect x=1362 fill=#f04 /><rect x=1368 fill=#ff0042 /><rect x=1374 fill=#ff0040 /><rect x=1380 fill=#ff003e /><rect x=1386 fill=#ff003d /><rect x=1392 fill=#ff003b /><rect x=1398 fill=#ff003a /><rect x=1404 fill=#ff0038 /><rect x=1410 fill=#ff0037 /><rect x=1416 fill=#ff0036 /><rect x=1422 fill=#ff0034 /><rect x=1428 fill=#f03 /></g>
<g transform="translate(0 180)"><rect x=984 fill=#00c9ff /><rect x=990 fill=#00c6ff /><rect x=996 fill=#00c3ff /><rect x=1002 fill=#00c0ff /><rect x=1008 fill=#00bdff /><rect x=1014 fill=#00b9ff /><rect x=1020 fill=#00b6ff /><rect x=1026 fill=#00b3ff /><rect x=1032 fill=#00afff /><rect x=1038 fill=#00acff /><rect x=1044 fill=#00a9ff /><rect x=1050 fill=#00a5ff /><rect x=1056 fill=#00a2ff /><rect x=1062 fill=#009eff /><rect x=1068 fill=#009aff /><rect x=1074 fill=#0097ff /><rect x=1080 fill=#0093ff /><rect x=1086 fill=#098fff /><rect x=1092 fill=#1c8bff /><rect x=1098 fill=#2e87ff /><rect x=1104 fill=#4084ff /><rect x=1110 fill=#5280ff /><rect x=1116 fill=#637bff /><rect x=1122 fill=#7477ff /><rect x=1128 fill=#8573ff /><rect x=1134 fill=#976fff /><rect x=1140 fill=#a86bff /><rect x=1146 fill=#b966ff /><rect x=1152 fill=#ca62ff /><rect x=1158 fill=#db5dff /><rect x=1164 fill=#ed59ff /><rect x=1170 fill=#fe54ff /><rect x=1176 fill=#ff4aef /><rect x=1182 fill=#ff42e1 /><rect x=1188 fill=#ff3ad4 /><rect x=1194 fill=#ff33c8 /><rect x=1200 fill=#ff2cbe /><rect x=1206 fill=#ff26b4 /><rect x=1212 fill=#ff21ac /><rect x=1218 fill=#ff1ca4 /><rect x=1224 fill=#ff179c /><rect x=1230 fill=#ff1396 /><rect x=1236 fill=#ff0e8f /><rect x=1242 fill=#ff0b8a /><rect x=1248 fill=#ff0784 /><rect x=1254 fill=#ff037f /><rect x=1260 fill=#ff007b /><rect x=1266 fill=#ff0076 /><rect x=1272 fill=#ff0072 /><rect x=1278 fill=#ff006e /><rect x=1284 fill=#ff006a /><rect x=1290 fill=#ff0067 /><rect x=1296 fill=#ff0064 /><rect x=1302 fill=#ff0061 /><rect x=1308 fill=#ff005e /><rect x=1314 fill=#ff005b /><rect x=1320 fill=#ff0058 /><rect x=1326 fill=#ff0056 /><rect x=1332 fill=#ff0053 /><rect x=1338 fill=#ff0051 /><rect x=1344 fill=#ff004f /><rect x=1350 fill=#ff004d /><rect x=1356 fill=#ff004b /><rect x=1362 fill=#ff0049 /><rect x=1368 fill=#ff0047 /><rect x=1374 fill=#ff0045 /><rect x=1380 fill=#ff0043 /><rect x=1386 fill=#ff0041 /><rect x=1392 fill=#ff0040 /><rect x=1398 fill=#ff003e /><rect x=1404 fill=#ff003d /><rect x=1410 fill=#ff003b /><rect x=1416 fill=#ff003a /><rect x=1422 fill=#ff0039 /></g>
<g transform="translate(0 186)"><rect x=984 fill=#00bdff /><rect x=990 fill=#00baff /><rect x=996 fill=#00b7ff /><rect x=1002 fill=#00b4ff /><rect x=1008 fill=#00b1ff /><rect x=1014 fill=#00aeff /><rect x=1020 fill=#00abff /><rect x=1026 fill=#00a7ff /><rect x=1032 fill=#00a4ff /><rect x=1038 fill=#00a1ff /><rect x=1044 fill=#009dff /><rect x=1050 fill=#009aff /><rect x=1056 fill=#0097ff /><rect x=1062 fill=#0093ff /><rect x=1068 fill=#0090ff /><rect x=1074 fill=#008cff /><rect x=1080 fill=#08f /><rect x=1086 fill=#0585ff /><rect x=1092 fill=#1881ff /><rect x=1098 fill=#2a7dff /><rect x=1104 fill=#3b79ff /><rect x=1110 fill=#4b75ff /><rect x=1116 fill=#5c72ff /><rect x=1122 fill=#6c6eff /><rect x=1128 fill=#7d69ff /><rect x=1134 fill=#8d65ff /><rect x=1140 fill=#9d61ff /><rect x=1146 fill=#ad5dff /><rect x=1152 fill=#be59ff /><rect x=1158 fill=#ce54ff /><rect x=1164 fill=#df50ff /><rect x=1170 fill=#ef4bff /><rect x=1176 fill=#ff47fe /><rect x=1182 fill=#ff3eef /><rect x=1188 fill=#ff36e1 /><rect x=1194 fill=#ff2fd5 /><rect x=1200 fill=#ff29c9 /><rect x=1206 fill=#ff23bf /><rect x=1212 fill=#ff1db6 /><rect x=1218 fill=#ff18ae /><rect x=1224 fill=#ff14a6 /><rect x=1230 fill=#ff0f9f /><rect x=1236 fill=#ff0b98 /><rect x=1242 fill=#ff0792 /><rect x=1248 fill=#ff048d /><rect x=1254 fill=#ff0087 /><rect x=1260 fill=#ff0082 /><rect x=1266 fill=#ff007e /><rect x=1272 fill=#ff0079 /><rect x=1278 fill=#ff0075 /><rect x=1284 fill=#ff0071 /><rect x=1290 fill=#ff006e /><rect x=1296 fill=#ff006a /><rect x=1302 fill=#ff0067 /><rect x=1308 fill=#ff0064 /><rect x=1314 fill=#ff0061 /><rect x=1320 fill=#ff005e /><rect x=1326 fill=#ff005b /><rect x=1332 fill=#ff0059 /><rect x=1338 fill=#ff0056 /><rect x=1344 fill=#ff0054 /><rect x=1350 fill=#ff0052 /><rect x=1356 fill=#ff0050 /><rect x=1362 fill=#ff004e /><rect x=1368 fill=#ff004c /><rect x=1374 fill=#ff004a /><rect x=1380 fill=#ff0048 /><rect x=1386 fill=#ff0046 /><rect x=1392 fill=#f04 /><rect x=1398 fill=#ff0043 /><rect x=1404 fill=#ff0041 /><rect x=1410 fill=#ff0040 /><rect x=1416 fill=#ff003e /></g>
<g transform="translate(0 192)"><rect x=984 fill=#00b2ff /><rect x=990 fill=#00afff /><rect x=996 fill=#00acff /><rect x=1002 fill=#00a9ff /><rect x=1008 fill=#00a6ff /><rect x=1014 fill=#00a3ff /><rect x=1020 fill=#00a0ff /><rect x=1026 fill=#009dff /><rect x=1032 fill=#009aff /><rect x=1038 fill=#0096ff /><rect x=1044 fill=#0093ff /><rect x=1050 fill=#0090ff /><rect x=1056 fill=#008cff /><rect x=1062 fill=#0089ff /><rect x=1068 fill=#0086ff /><rect x=1074 fill=#0082ff /><rect x=1080 fill=#007fff /><rect x=1086 fill=#027bff /><rect x=1092 fill=#1577ff /><rect x=1098 fill=#2574ff /><rect x=1104 fill=#3670ff /><rect x=1110 fill=#466cff /><rect x=1116 fill=#5569ff /><rect x=1122 fill=#6565ff /><rect x=1128 fill=#7561ff /><rect x=1134 fill=#845dff /><rect x=1140 fill=#9459ff /><rect x=1146 fill=#a355ff /><rect x=1152 fill=#b350ff /><rect x=1158 fill=#c24cff /><rect x=1164 fill=#d248ff /><rect x=1170 fill=#e144ff /><rect x=1176 fill=#f13fff /><rect x=1182 fill=#ff3afd /><rect x=1188 fill=#ff32ee /><rect x=1194 fill=#ff2ce1 /><rect x=1200 fill=#ff25d5 /><rect x=1206 fill=#ff1fcb /><rect x=1212 fill=#ff1ac1 /><rect x=1218 fill=#ff15b8 /><rect x=1224 fill=#ff11b0 /><rect x=1230 fill=#ff0ca8 /><rect x=1236 fill=#ff08a1 /><rect x=1242 fill=#ff049b /><rect x=1248 fill=#ff0095 /><rect x=1254 fill=#ff008f /><rect x=1260 fill=#ff008a /><rect x=1266 fill=#ff0085 /><rect x=1272 fill=#ff0081 /><rect x=1278 fill=#ff007c /><rect x=1284 fill=#ff0078 /><rect x=1290 fill=#ff0074 /><rect x=1296 fill=#ff0071 /><rect x=1302 fill=#ff006d /><rect x=1308 fill=#ff006a /><rect x=1314 fill=#ff0067 /><rect x=1320 fill=#ff0064 /><rect x=1326 fill=#ff0061 /><rect x=1332 fill=#ff005e /><rect x=1338 fill=#ff005c /><rect x=1344 fill=#ff0059 /><rect x=1350 fill=#ff0057 /><rect x=1356 fill=#f05 /><rect x=1362 fill=#ff0053 /><rect x=1368 fill=#ff0051 /><rect x=1374 fill=#ff004f /><rect x=1380 fill=#ff004d /><rect x=1386 fill=#ff004b /><rect x=1392 fill=#ff0049 /><rect x=1398 fill=#ff0047 /><rect x=1404 fill=#ff0046 /><rect x=1410 fill=#f04 /></g>
<g transform="translate(0 198)"><rect x=990 fill=#00a5ff /><rect x=996 fill=#00a2ff /><rect x=1002 fill=#009fff /><rect x=1008 fill=#009cff /><rect x=1014 fill=#09f /><rect x=1020 fill=#0096ff /><rect x=1026 fill=#0093ff /><rect x=1032 fill=#0090ff /><rect x=1038 fill=#008dff /><rect x=1044 fill=#008aff /><rect x=1050 fill=#0086ff /><rect x=1056 fill=#0083ff /><rect x=1062 fill=#0080ff /><rect x=1068 fill=#007dff /><rect x=1074 fill=#0079ff /><rect x=1080 fill=#0076ff /><rect x=1086 fill=#0072ff /><rect x=1092 fill=#116fff /><rect x=1098 fill=#226bff /><rect x=1104 fill=#3168ff /><rect x=1110 fill=#4164ff /><rect x=1116 fill=#5060ff /><rect x=1122 fill=#5f5dff /><rect x=1128 fill=#6d59ff /><rect x=1134 fill=#7c55ff /><rect x=1140 fill=#8b51ff /><rect x=1146 fill=#9a4dff /><rect x=1152 fill=#a949ff /><rect x=1158 fill=#b745ff /><rect x=1164 fill=#c641ff /><rect x=1170 fill=#d53cff /><rect x=1176 fill=#e438ff /><rect x=1182 fill=#f334ff /><rect x=1188 fill=#ff2ffc /><rect x=1194 fill=#ff28ee /><rect x=1200 fill=#ff22e1 /><rect x=1206 fill=#ff1cd6 /><rect x=1212 fill=#ff17cc /><rect x=1218 fill=#ff12c2 /><rect x=1224 fill=#ff0dba /><rect x=1230 fill=#ff09b2 /><rect x=1236 fill=#ff05aa /><rect x=1242 fill=#ff00a4 /><rect x=1248 fill=#ff009d /><rect x=1254 fill=#ff0097 /><rect x=1260 fill=#ff0092 /><rect x=1266 fill=#ff008d /><rect x=1272 fill=#f08 /><rect x=1278 fill=#ff0083 /><rect x=1284 fill=#ff007f /><rect x=1290 fill=#ff007b /><rect x=1296 fill=#f07 /><rect x=1302 fill=#ff0074 /><rect x=1308 fill=#ff0070 /><rect x=1314 fill=#ff006d /><rect x=1320 fill=#ff006a /><rect x=1326 fill=#ff0067 /><rect x=1332 fill=#ff0064 /><rect x=1338 fill=#ff0061 /><rect x=1344 fill=#ff005f /><rect x=1350 fill=#ff005c /><rect x=1356 fill=#ff005a /><rect x=1362 fill=#ff0058 /><rect x=1368 fill=#f05 /><rect x=1374 fill=#ff0053 /><rect x=1380 fill=#ff0051 /><rect x=1386 fill=#ff004f /><rect x=1392 fill=#ff004e /><rect x=1398 fill=#ff004c /><rect x=1404 fill=#ff004a /></g>
<g transform="translate(0 204)"><rect x=990 fill=#009cff /><rect x=996 fill=#09f /><rect x=1002 fill=#0096ff /><rect x=1008 fill=#0093ff /><rect x=1014 fill=#0090ff /><rect x=1020 fill=#008dff /><rect x=1026 fill=#008aff /><rect x=1032 fill=#0087ff /><rect x=1038 fill=#0084ff /><rect x=1044 fill=#0081ff /><rect x=1050 fill=#007eff /><rect x=1056 fill=#007bff /><rect x=1062 fill=#0078ff /><rect x=1068 fill=#0074ff /><rect x=1074 fill=#0071ff /><rect x=1080 fill=#006eff /><rect x=1086 fill=#006aff /><rect x=1092 fill=#0e67ff /><rect x=1098 fill=#1e63ff /><rect x=1104 fill=#2d60ff /><rect x=1110 fill=#3c5cff /><rect x=1116 fill=#4a59ff /><rect x=1122 fill=#5955ff /><rect x=1128 fill=#6751ff /><rect x=1134 fill=#754eff /><rect x=1140 fill=#834aff /><rect x=1146 fill=#9146ff /><rect x=1152 fill=#9f42ff /><rect x=1158 fill=#ae3eff /><rect x=1164 fill=#bc3aff /><rect x=1170 fill=#ca36ff /><rect x=1176 fill=#d832ff /><rect x=1182 fill=#e72dff /><rect x=1188 fill=#f529ff /><rect x=1194 fill=#ff24fb /><rect x=1200 fill=#ff1eee /><rect x=1206 fill=#ff18e2 /><rect x=1212 fill=#ff13d7 /><rect x=1218 fill=#ff0ecd /><rect x=1224 fill=#ff0ac4 /><rect x=1230 fill=#ff05bb /><rect x=1236 fill=#ff01b4 /><rect x=1242 fill=#ff00ac /><rect x=1248 fill=#ff00a6 /><rect x=1254 fill=#ff00a0 /><rect x=1260 fill=#ff009a /><rect x=1266 fill=#ff0094 /><rect x=1272 fill=#ff008f /><rect x=1278 fill=#ff008b /><rect x=1284 fill=#ff0086 /><rect x=1290 fill=#ff0082 /><rect x=1296 fill=#ff007e /><rect x=1302 fill=#ff007a /><rect x=1308 fill=#ff0076 /><rect x=1314 fill=#ff0073 /><rect x=1320 fill=#ff0070 /><rect x=1326 fill=#ff006d /><rect x=1332 fill=#ff006a /><rect x=1338 fill=#ff0067 /><rect x=1344 fill=#ff0064 /><rect x=1350 fill=#ff0061 /><rect x=1356 fill=#ff005f /><rect x=1362 fill=#ff005d /><rect x=1368 fill=#ff005a /><rect x=1374 fill=#ff0058 /><rect x=1380 fill=#ff0056 /><rect x=1386 fill=#ff0054 /><rect x=1392 fill=#ff0052 /><rect x=1398 fill=#ff0050 /></g>
<g transform="translate(0 210)"><rect x=996 fill=#0090ff /><rect x=1002 fill=#008eff /><rect x=1008 fill=#008bff /><rect x=1014 fill=#08f /><rect x=1020 fill=#0085ff /><rect x=1026 fill=#0082ff /><rect x=1032 fill=#007fff /><rect x=1038 fill=#007cff /><rect x=1044 fill=#0079ff /><rect x=1050 fill=#0076ff /><rect x=1056 fill=#0073ff /><rect x=1062 fill=#0070ff /><rect x=1068 fill=#006dff /><rect x=1074 fill=#0069ff /><rect x=1080 fill=#06f /><rect x=1086 fill=#0063ff /><rect x=1092 fill=#0b60ff /><rect x=1098 fill=#1b5cff /><rect x=1104 fill=#2959ff /><rect x=1110 fill=#3755ff /><rect x=1116 fill=#4552ff /><rect x=1122 fill=#534eff /><rect x=1128 fill=#614bff /><rect x=1134 fill=#6e47ff /><rect x=1140 fill=#7c43ff /><rect x=1146 fill=#8a40ff /><rect x=1152 fill=#973cff /><rect x=1158 fill=#a538ff /><rect x=1164 fill=#b234ff /><rect x=1170 fill=#c030ff /><rect x=1176 fill=#cd2cff /><rect x=1182 fill=#db28ff /><rect x=1188 fill=#e923ff /><rect x=1194 fill=#f71fff /><rect x=1200 fill=#ff1afa /><rect x=1206 fill=#ff15ed /><rect x=1212 fill=#ff0fe2 /><rect x=1218 fill=#ff0bd7 /><rect x=1224 fill=#ff06ce /><rect x=1230 fill=#ff01c5 /><rect x=1236 fill=#ff00bd /><rect x=1242 fill=#ff00b5 /><rect x=1248 fill=#ff00ae /><rect x=1254 fill=#ff00a8 /><rect x=1260 fill=#ff00a2 /><rect x=1266 fill=#ff009c /><rect x=1272 fill=#ff0097 /><rect x=1278 fill=#ff0092 /><rect x=1284 fill=#ff008d /><rect x=1290 fill=#f08 /><rect x=1296 fill=#ff0084 /><rect x=1302 fill=#ff0080 /><rect x=1308 fill=#ff007d /><rect x=1314 fill=#ff0079 /><rect x=1320 fill=#ff0076 /><rect x=1326 fill=#ff0072 /><rect x=1332 fill=#ff006f /><rect x=1338 fill=#ff006c /><rect x=1344 fill=#ff0069 /><rect x=1350 fill=#ff0067 /><rect x=1356 fill=#ff0064 /><rect x=1362 fill=#ff0062 /><rect x=1368 fill=#ff005f /><rect x=1374 fill=#ff005d /><rect x=1380 fill=#ff005b /><rect x=1386 fill=#ff0059 /><rect x=1392 fill=#ff0057 /></g>
<g transform="translate(0 216)"><rect x=996 fill=#0089ff /><rect x=1002 fill=#0086ff /><rect x=1008 fill=#0083ff /><rect x=1014 fill=#0080ff /><rect x=1020 fill=#007dff /><rect x=1026 fill=#007aff /><rect x=1032 fill=#0078ff /><rect x=1038 fill=#0075ff /><rect x=1044 fill=#0072ff /><rect x=1050 fill=#006fff /><rect x=1056 fill=#006cff /><rect x=1062 fill=#0069ff /><rect x=1068 fill=#0065ff /><rect x=1074 fill=#0062ff /><rect x=1080 fill=#005fff /><rect x=1086 fill=#005cff /><rect x=1092 fill=#0959ff /><rect x=1098 fill=#1755ff /><rect x=1104 fill=#2652ff /><rect x=1110 fill=#334fff /><rect x=1116 fill=#414bff /><rect x=1122 fill=#4e48ff /><rect x=1128 fill=#5b44ff /><rect x=1134 fill=#6841ff /><rect x=1140 fill=#753dff /><rect x=1146 fill=#823aff /><rect x=1152 fill=#8f36ff /><rect x=1158 fill=#9c32ff /><rect x=1164 fill=#a92eff /><rect x=1170 fill=#b62aff /><rect x=1176 fill=#c326ff /><rect x=1182 fill=#d122ff /><rect x=1188 fill=#de1eff /><rect x=1194 fill=#eb1aff /><rect x=1200 fill=#f816ff /><rect x=1206 fill=#ff11f9 /><rect x=1212 fill=#ff0ced /><rect x=1218 fill=#ff07e2 /><rect x=1224 fill=#ff02d8 /><rect x=1230 fill=#ff00cf /><rect x=1236 fill=#ff00c6 /><rect x=1242 fill=#ff00be /><rect x=1248 fill=#ff00b7 /><rect x=1254 fill=#ff00b0 /><rect x=1260 fill=#f0a /><rect x=1266 fill=#ff00a4 /><rect x=1272 fill=#ff009e /><rect x=1278 fill=#f09 /><rect x=1284 fill=#ff0094 /><rect x=1290 fill=#ff008f /><rect x=1296 fill=#ff008b /><rect x=1302 fill=#ff0087 /><rect x=1308 fill=#ff0083 /><rect x=1314 fill=#ff007f /><rect x=1320 fill=#ff007b /><rect x=1326 fill=#ff0078 /><rect x=1332 fill=#ff0075 /><rect x=1338 fill=#ff0072 /><rect x=1344 fill=#ff006f /><rect x=1350 fill=#ff006c /><rect x=1356 fill=#ff0069 /><rect x=1362 fill=#ff0067 /><rect x=1368 fill=#ff0064 /><rect x=1374 fill=#ff0062 /><rect x=1380 fill=#ff005f /><rect x=1386 fill=#ff005d /></g>
<g transform="translate(0 222)"><rect x=1002 fill=#007eff /><rect x=1008 fill=#007cff /><rect x=1014 fill=#0079ff /><rect x=1020 fill=#0076ff /><rect x=1026 fill=#0073ff /><rect x=1032 fill=#0071ff /><rect x=1038 fill=#006eff /><rect x=1044 fill=#006bff /><rect x=1050 fill=#0068ff /><rect x=1056 fill=#0065ff /><rect x=1062 fill=#0062ff /><rect x=1068 fill=#005fff /><rect x=1074 fill=#005cff /><rect x=1080 fill=#0059ff /><rect x=1086 fill=#0056ff /><rect x=1092 fill=#0652ff /><rect x=1098 fill=#154fff /><rect x=1104 fill=#224cff /><rect x=1110 fill=#3049ff /><rect x=1116 fill=#3d45ff /><rect x=1122 fill=#4942ff /><rect x=1128 fill=#563fff /><rect x=1134 fill=#633bff /><rect x=1140 fill=#6f38ff /><rect x=1146 fill=#7c34ff /><rect x=1152 fill=#8830ff /><rect x=1158 fill=#952dff /><rect x=1164 fill=#a129ff /><rect x=1170 fill=#ae25ff /><rect x=1176 fill=#ba21ff /><rect x=1182 fill=#c71dff /><rect x=1188 fill=#d319ff /><rect x=1194 fill=#e015ff /><rect x=1200 fill=#ed11ff /><rect x=1206 fill=#f90dff /><rect x=1212 fill=#ff08f8 /><rect x=1218 fill=#ff03ed /><rect x=1224 fill=#ff00e2 /><rect x=1230 fill=#ff00d8 /><rect x=1236 fill=#ff00cf /><rect x=1242 fill=#ff00c7 /><rect x=1248 fill=#ff00bf /><rect x=1254 fill=#ff00b8 /><rect x=1260 fill=#ff00b2 /><rect x=1266 fill=#ff00ab /><rect x=1272 fill=#ff00a6 /><rect x=1278 fill=#ff00a0 /><rect x=1284 fill=#ff009b /><rect x=1290 fill=#ff0096 /><rect x=1296 fill=#ff0091 /><rect x=1302 fill=#ff008d /><rect x=1308 fill=#ff0089 /><rect x=1314 fill=#ff0085 /><rect x=1320 fill=#ff0081 /><rect x=1326 fill=#ff007e /><rect x=1332 fill=#ff007a /><rect x=1338 fill=#f07 /><rect x=1344 fill=#ff0074 /><rect x=1350 fill=#ff0071 /><rect x=1356 fill=#ff006e /><rect x=1362 fill=#ff006c /><rect x=1368 fill=#ff0069 /><rect x=1374 fill=#ff0067 /><rect x=1380 fill=#ff0064 /></g>
<g transform="translate(0 228)"><rect x=1002 fill=#0078ff /><rect x=1008 fill=#0075ff /><rect x=1014 fill=#0072ff /><rect x=1020 fill=#0070ff /><rect x=1026 fill=#006dff /><rect x=1032 fill=#006aff /><rect x=1038 fill=#0067ff /><rect x=1044 fill=#0064ff /><rect x=1050 fill=#0062ff /><rect x=1056 fill=#005fff /><rect x=1062 fill=#005cff /><rect x=1068 fill=#0059ff /><rect x=1074 fill=#0056ff /><rect x=1080 fill=#0053ff /><rect x=1086 fill=#0050ff /><rect x=1092 fill=#034dff /><rect x=1098 fill=#1249ff /><rect x=1104 fill=#1f46ff /><rect x=1110 fill=#2c43ff /><rect x=1116 fill=#3940ff /><rect x=1122 fill=#453dff /><rect x=1128 fill=#5139ff /><rect x=1134 fill=#5d36ff /><rect x=1140 fill=#6a32ff /><rect x=1146 fill=#762fff /><rect x=1152 fill=#822bff /><rect x=1158 fill=#8e28ff /><rect x=1164 fill=#9a24ff /><rect x=1170 fill=#a620ff /><rect x=1176 fill=#b21dff /><rect x=1182 fill=#be19ff /><rect x=1188 fill=#ca15ff /><rect x=1194 fill=#d611ff /><rect x=1200 fill=#e20dff /><rect x=1206 fill=#ee08ff /><rect x=1212 fill=#fb03ff /><rect x=1218 fill=#ff00f7 /><rect x=1224 fill=#ff00ec /><rect x=1230 fill=#ff00e2 /><rect x=1236 fill=#ff00d9 /><rect x=1242 fill=#ff00d0 /><rect x=1248 fill=#ff00c8 /><rect x=1254 fill=#ff00c1 /><rect x=1260 fill=#ff00ba /><rect x=1266 fill=#ff00b3 /><rect x=1272 fill=#ff00ad /><rect x=1278 fill=#ff00a7 /><rect x=1284 fill=#ff00a2 /><rect x=1290 fill=#ff009d /><rect x=1296 fill=#ff0098 /><rect x=1302 fill=#ff0094 /><rect x=1308 fill=#ff008f /><rect x=1314 fill=#ff008b /><rect x=1320 fill=#ff0087 /><rect x=1326 fill=#ff0084 /><rect x=1332 fill=#ff0080 /><rect x=1338 fill=#ff007d /><rect x=1344 fill=#ff0079 /><rect x=1350 fill=#ff0076 /><rect x=1356 fill=#ff0074 /><rect x=1362 fill=#ff0071 /><rect x=1368 fill=#ff006e /><rect x=1374 fill=#ff006b /><rect x=1380 fill=#ff0069 /></g>
<g transform="translate(0 234)"><rect x=1008 fill=#006fff /><rect x=1014 fill=#006cff /><rect x=1020 fill=#0069ff /><rect x=1026 fill=#0067ff /><rect x=1032 fill=#0064ff /><rect x=1038 fill=#0061ff /><rect x=1044 fill=#005eff /><rect x=1050 fill=#005cff /><rect x=1056 fill=#0059ff /><rect x=1062 fill=#0056ff /><rect x=1068 fill=#0053ff /><rect x=1074 fill=#0050ff /><rect x=1080 fill=#004dff /><rect x=1086 fill=#004aff /><rect x=1092 fill=#0147ff /><rect x=1098 fill=#0f44ff /><rect x=1104 fill=#1c41ff /><rect x=1110 fill=#293eff /><rect x=1116 fill=#353bff /><rect x=1122 fill=#4137ff /><rect x=1128 fill=#4d34ff /><rect x=1134 fill=#5931ff /><rect x=1140 fill=#642eff /><rect x=1146 fill=#702aff /><rect x=1152 fill=#7c27ff /><rect x=1158 fill=#8723ff /><rect x=1164 fill=#9320ff /><rect x=1170 fill=#9e1cff /><rect x=1176 fill=#aa18ff /><rect x=1182 fill=#b614ff /><rect x=1188 fill=#c111ff /><rect x=1194 fill=#cd0cff /><rect x=1200 fill=#d908ff /><rect x=1206 fill=#e404ff /><rect x=1212 fill=#f000ff /><rect x=1218 fill=#fc00ff /><rect x=1224 fill=#ff00f7 /><rect x=1230 fill=#ff00ec /><rect x=1236 fill=#ff00e2 /><rect x=1242 fill=#ff00d9 /><rect x=1248 fill=#ff00d1 /><rect x=1254 fill=#ff00c9 /><rect x=1260 fill=#ff00c2 /><rect x=1266 fill=#f0b /><rect x=1272 fill=#ff00b5 /><rect x=1278 fill=#ff00af /><rect x=1284 fill=#ff00a9 /><rect x=1290 fill=#ff00a4 /><rect x=1296 fill=#ff009f /><rect x=1302 fill=#ff009a /><rect x=1308 fill=#ff0096 /><rect x=1314 fill=#ff0091 /><rect x=1320 fill=#ff008d /><rect x=1326 fill=#ff0089 /><rect x=1332 fill=#ff0086 /><rect x=1338 fill=#ff0082 /><rect x=1344 fill=#ff007f /><rect x=1350 fill=#ff007c /><rect x=1356 fill=#ff0079 /><rect x=1362 fill=#ff0076 /><rect x=1368 fill=#ff0073 /><rect x=1374 fill=#ff0070 /></g>
<g transform="translate(0 240)"><rect x=1008 fill=#0069ff /><rect x=1014 fill=#06f /><rect x=1020 fill=#0063ff /><rect x=1026 fill=#0061ff /><rect x=1032 fill=#005eff /><rect x=1038 fill=#005bff /><rect x=1044 fill=#0059ff /><rect x=1050 fill=#0056ff /><rect x=1056 fill=#0053ff /><rect x=1062 fill=#0050ff /><rect x=1068 fill=#004eff /><rect x=1074 fill=#004bff /><rect x=1080 fill=#0048ff /><rect x=1086 fill=#0045ff /><rect x=1092 fill=#0042ff /><rect x=1098 fill=#0d3fff /><rect x=1104 fill=#1a3cff /><rect x=1110 fill=#2639ff /><rect x=1116 fill=#3236ff /><rect x=1122 fill=#3d33ff /><rect x=1128 fill=#4930ff /><rect x=1134 fill=#542cff /><rect x=1140 fill=#5f29ff /><rect x=1146 fill=#6b26ff /><rect x=1152 fill=#7622ff /><rect x=1158 fill=#811fff /><rect x=1164 fill=#8c1bff /><rect x=1170 fill=#9718ff /><rect x=1176 fill=#a314ff /><rect x=1182 fill=#ae10ff /><rect x=1188 fill=#b90cff /><rect x=1194 fill=#c408ff /><rect x=1200 fill=#d004ff /><rect x=1206 fill=#db00ff /><rect x=1212 fill=#e600ff /><rect x=1218 fill=#f200ff /><rect x=1224 fill=#fd00ff /><rect x=1230 fill=#ff00f6 /><rect x=1236 fill=#ff00ec /><rect x=1242 fill=#ff00e2 /><rect x=1248 fill=#ff00da /><rect x=1254 fill=#ff00d1 /><rect x=1260 fill=#ff00ca /><rect x=1266 fill=#ff00c3 /><rect x=1272 fill=#ff00bc /><rect x=1278 fill=#ff00b6 /><rect x=1284 fill=#ff00b0 /><rect x=1290 fill=#ff00ab /><rect x=1296 fill=#ff00a5 /><rect x=1302 fill=#ff00a0 /><rect x=1308 fill=#ff009c /><rect x=1314 fill=#ff0097 /><rect x=1320 fill=#ff0093 /><rect x=1326 fill=#ff008f /><rect x=1332 fill=#ff008b /><rect x=1338 fill=#f08 /><rect x=1344 fill=#ff0084 /><rect x=1350 fill=#ff0081 /><rect x=1356 fill=#ff007e /><rect x=1362 fill=#ff007b /><rect x=1368 fill=#ff0078 /></g>
<g transform="translate(0 246)"><rect x=1014 fill=#0061ff /><rect x=1020 fill=#005eff /><rect x=1026 fill=#005bff /><rect x=1032 fill=#0059ff /><rect x=1038 fill=#0056ff /><rect x=1044 fill=#0053ff /><rect x=1050 fill=#0051ff /><rect x=1056 fill=#004eff /><rect x=1062 fill=#004bff /><rect x=1068 fill=#0049ff /><rect x=1074 fill=#0046ff /><rect x=1080 fill=#0043ff /><rect x=1086 fill=#0040ff /><rect x=1092 fill=#003dff /><rect x=1098 fill=#0b3aff /><rect x=1104 fill=#1737ff /><rect x=1110 fill=#2334ff /><rect x=1116 fill=#2e31ff /><rect x=1122 fill=#3a2eff /><rect x=1128 fill=#452bff /><rect x=1134 fill=#5028ff /><rect x=1140 fill=#5b25ff /><rect x=1146 fill=#6621ff /><rect x=1152 fill=#711eff /><rect x=1158 fill=#7b1bff /><rect x=1164 fill=#8617ff /><rect x=1170 fill=#9114ff /><rect x=1176 fill=#9c10ff /><rect x=1182 fill=#a70cff /><rect x=1188 fill=#b109ff /><rect x=1194 fill=#bc04ff /><rect x=1200 fill=#c700ff /><rect x=1206 fill=#d200ff /><rect x=1212 fill=#d0f /><rect x=1218 fill=#e800ff /><rect x=1224 fill=#f300ff /><rect x=1230 fill=#fe00ff /><rect x=1236 fill=#ff00f5 /><rect x=1242 fill=#ff00ec /><rect x=1248 fill=#ff00e2 /><rect x=1254 fill=#ff00da /><rect x=1260 fill=#ff00d2 /><rect x=1266 fill=#ff00cb /><rect x=1272 fill=#ff00c4 /><rect x=1278 fill=#ff00bd /><rect x=1284 fill=#ff00b7 /><rect x=1290 fill=#ff00b2 /><rect x=1296 fill=#ff00ac /><rect x=1302 fill=#ff00a7 /><rect x=1308 fill=#ff00a2 /><rect x=1314 fill=#ff009e /><rect x=1320 fill=#f09 /><rect x=1326 fill=#ff0095 /><rect x=1332 fill=#ff0091 /><rect x=1338 fill=#ff008d /><rect x=1344 fill=#ff008a /><rect x=1350 fill=#ff0086 /><rect x=1356 fill=#ff0083 /><rect x=1362 fill=#ff0080 /></g>
<g transform="translate(0 252)"><rect x=1014 fill=#005bff /><rect x=1020 fill=#0059ff /><rect x=1026 fill=#0056ff /><rect x=1032 fill=#0054ff /><rect x=1038 fill=#0051ff /><rect x=1044 fill=#004fff /><rect x=1050 fill=#004cff /><rect x=1056 fill=#0049ff /><rect x=1062 fill=#0047ff /><rect x=1068 fill=#04f /><rect x=1074 fill=#0041ff /><rect x=1080 fill=#003eff /><rect x=1086 fill=#003cff /><rect x=1092 fill=#0039ff /><rect x=1098 fill=#0836ff /><rect x=1104 fill=#1533ff /><rect x=1110 fill=#2030ff /><rect x=1116 fill=#2b2dff /><rect x=1122 fill=#362aff /><rect x=1128 fill=#4127ff /><rect x=1134 fill=#4c24ff /><rect x=1140 fill=#5621ff /><rect x=1146 fill=#611dff /><rect x=1152 fill=#6c1aff /><rect x=1158 fill=#7617ff /><rect x=1164 fill=#8113ff /><rect x=1170 fill=#8b10ff /><rect x=1176 fill=#950cff /><rect x=1182 fill=#a009ff /><rect x=1188 fill=#aa05ff /><rect x=1194 fill=#b500ff /><rect x=1200 fill=#bf00ff /><rect x=1206 fill=#ca00ff /><rect x=1212 fill=#d400ff /><rect x=1218 fill=#df00ff /><rect x=1224 fill=#ea00ff /><rect x=1230 fill=#f400ff /><rect x=1236 fill=#f0f /><rect x=1242 fill=#ff00f5 /><rect x=1248 fill=#ff00eb /><rect x=1254 fill=#ff00e3 /><rect x=1260 fill=#ff00da /><rect x=1266 fill=#ff00d3 /><rect x=1272 fill=#ff00cb /><rect x=1278 fill=#ff00c5 /><rect x=1284 fill=#ff00be /><rect x=1290 fill=#ff00b8 /><rect x=1296 fill=#ff00b3 /><rect x=1302 fill=#ff00ae /><rect x=1308 fill=#ff00a9 /><rect x=1314 fill=#ff00a4 /><rect x=1320 fill=#ff009f /><rect x=1326 fill=#ff009b /><rect x=1332 fill=#ff0097 /><rect x=1338 fill=#ff0093 /><rect x=1344 fill=#ff008f /><rect x=1350 fill=#ff008c /><rect x=1356 fill=#f08 /></g>
<g transform="translate(0 258)"><rect x=1020 fill=#0054ff /><rect x=1026 fill=#0051ff /><rect x=1032 fill=#004fff /><rect x=1038 fill=#004cff /><rect x=1044 fill=#004aff /><rect x=1050 fill=#0047ff /><rect x=1056 fill=#0045ff /><rect x=1062 fill=#0042ff /><rect x=1068 fill=#003fff /><rect x=1074 fill=#003dff /><rect x=1080 fill=#003aff /><rect x=1086 fill=#0037ff /><rect x=1092 fill=#0034ff /><rect x=1098 fill=#0632ff /><rect x=1104 fill=#122fff /><rect x=1110 fill=#1e2cff /><rect x=1116 fill=#2829ff /><rect x=1122 fill=#3326ff /><rect x=1128 fill=#3e23ff /><rect x=1134 fill=#4820ff /><rect x=1140 fill=#521dff /><rect x=1146 fill=#5d1aff /><rect x=1152 fill=#6716ff /><rect x=1158 fill=#7113ff /><rect x=1164 fill=#7b10ff /><rect x=1170 fill=#850cff /><rect x=1176 fill=#8f09ff /><rect x=1182 fill=#9a05ff /><rect x=1188 fill=#a401ff /><rect x=1194 fill=#ae00ff /><rect x=1200 fill=#b800ff /><rect x=1206 fill=#c200ff /><rect x=1212 fill=#c0f /><rect x=1218 fill=#d700ff /><rect x=1224 fill=#e100ff /><rect x=1230 fill=#eb00ff /><rect x=1236 fill=#f500ff /><rect x=1242 fill=#ff00fe /><rect x=1248 fill=#ff00f4 /><rect x=1254 fill=#ff00eb /><rect x=1260 fill=#ff00e3 /><rect x=1266 fill=#ff00db /><rect x=1272 fill=#ff00d3 /><rect x=1278 fill=#f0c /><rect x=1284 fill=#ff00c6 /><rect x=1290 fill=#ff00bf /><rect x=1296 fill=#ff00ba /><rect x=1302 fill=#ff00b4 /><rect x=1308 fill=#ff00af /><rect x=1314 fill=#f0a /><rect x=1320 fill=#ff00a5 /><rect x=1326 fill=#ff00a1 /><rect x=1332 fill=#ff009d /><rect x=1338 fill=#f09 /><rect x=1344 fill=#ff0095 /><rect x=1350 fill=#ff0091 /></g>
<g transform="translate(0 264)"><rect x=1020 fill=#004fff /><rect x=1026 fill=#004dff /><rect x=1032 fill=#004aff /><rect x=1038 fill=#0048ff /><rect x=1044 fill=#0045ff /><rect x=1050 fill=#0043ff /><rect x=1056 fill=#0040ff /><rect x=1062 fill=#003eff /><rect x=1068 fill=#003bff /><rect x=1074 fill=#0038ff /><rect x=1080 fill=#0036ff /><rect x=1086 fill=#03f /><rect x=1092 fill=#0030ff /><rect x=1098 fill=#042eff /><rect x=1104 fill=#102bff /><rect x=1110 fill=#1b28ff /><rect x=1116 fill=#2625ff /><rect x=1122 fill=#3022ff /><rect x=1128 fill=#3a1fff /><rect x=1134 fill=#451cff /><rect x=1140 fill=#4f19ff /><rect x=1146 fill=#5916ff /><rect x=1152 fill=#6213ff /><rect x=1158 fill=#6c10ff /><rect x=1164 fill=#760cff /><rect x=1170 fill=#8009ff /><rect x=1176 fill=#8a05ff /><rect x=1182 fill=#9401ff /><rect x=1188 fill=#9e00ff /><rect x=1194 fill=#a700ff /><rect x=1200 fill=#b100ff /><rect x=1206 fill=#b0f /><rect x=1212 fill=#c500ff /><rect x=1218 fill=#cf00ff /><rect x=1224 fill=#d900ff /><rect x=1230 fill=#e300ff /><rect x=1236 fill=#ed00ff /><rect x=1242 fill=#f700ff /><rect x=1248 fill=#ff00fd /><rect x=1254 fill=#ff00f4 /><rect x=1260 fill=#ff00eb /><rect x=1266 fill=#ff00e3 /><rect x=1272 fill=#ff00db /><rect x=1278 fill=#ff00d4 /><rect x=1284 fill=#ff00cd /><rect x=1290 fill=#ff00c6 /><rect x=1296 fill=#ff00c0 /><rect x=1302 fill=#f0b /><rect x=1308 fill=#ff00b5 /><rect x=1314 fill=#ff00b0 /><rect x=1320 fill=#ff00ab /><rect x=1326 fill=#ff00a7 /><rect x=1332 fill=#ff00a2 /><rect x=1338 fill=#ff009e /><rect x=1344 fill=#ff009a /></g>
<g transform="translate(0 270)"><rect x=1026 fill=#0049ff /><rect x=1032 fill=#0046ff /><rect x=1038 fill=#04f /><rect x=1044 fill=#0041ff /><rect x=1050 fill=#003fff /><rect x=1056 fill=#003cff /><rect x=1062 fill=#003aff /><rect x=1068 fill=#0037ff /><rect x=1074 fill=#0035ff /><rect x=1080 fill=#0032ff /><rect x=1086 fill=#002fff /><rect x=1092 fill=#002dff /><rect x=1098 fill=#022aff /><rect x=1104 fill=#0e27ff /><rect x=1110 fill=#1924ff /><rect x=1116 fill=#2322ff /><rect x=1122 fill=#2d1fff /><rect x=1128 fill=#371cff /><rect x=1134 fill=#4119ff /><rect x=1140 fill=#4b16ff /><rect x=1146 fill=#5513ff /><rect x=1152 fill=#5e10ff /><rect x=1158 fill=#680cff /><rect x=1164 fill=#7109ff /><rect x=1170 fill=#7b05ff /><rect x=1176 fill=#8502ff /><rect x=1182 fill=#8e00ff /><rect x=1188 fill=#9800ff /><rect x=1194 fill=#a100ff /><rect x=1200 fill=#ab00ff /><rect x=1206 fill=#b400ff /><rect x=1212 fill=#be00ff /><rect x=1218 fill=#c700ff /><rect x=1224 fill=#d100ff /><rect x=1230 fill=#db00ff /><rect x=1236 fill=#e400ff /><rect x=1242 fill=#e0f /><rect x=1248 fill=#f800ff /><rect x=1254 fill=#ff00fd /><rect x=1260 fill=#ff00f3 /><rect x=1266 fill=#ff00eb /><rect x=1272 fill=#ff00e3 /><rect x=1278 fill=#ff00db /><rect x=1284 fill=#ff00d4 /><rect x=1290 fill=#ff00ce /><rect x=1296 fill=#ff00c7 /><rect x=1302 fill=#ff00c1 /><rect x=1308 fill=#ff00bc /><rect x=1314 fill=#ff00b6 /><rect x=1320 fill=#ff00b1 /><rect x=1326 fill=#ff00ad /><rect x=1332 fill=#ff00a8 /><rect x=1338 fill=#ff00a4 /></g>
<g transform="translate(0 276)"><rect x=1026 fill=#04f /><rect x=1032 fill=#0042ff /><rect x=1038 fill=#0040ff /><rect x=1044 fill=#003dff /><rect x=1050 fill=#003bff /><rect x=1056 fill=#0038ff /><rect x=1062 fill=#0036ff /><rect x=1068 fill=#03f /><rect x=1074 fill=#0031ff /><rect x=1080 fill=#002eff /><rect x=1086 fill=#002cff /><rect x=1092 fill=#0029ff /><rect x=1098 fill=#0026ff /><rect x=1104 fill=#0c24ff /><rect x=1110 fill=#1721ff /><rect x=1116 fill=#211eff /><rect x=1122 fill=#2b1bff /><rect x=1128 fill=#3418ff /><rect x=1134 fill=#3e15ff /><rect x=1140 fill=#4812ff /><rect x=1146 fill=#510fff /><rect x=1152 fill=#5a0cff /><rect x=1158 fill=#6409ff /><rect x=1164 fill=#6d06ff /><rect x=1170 fill=#7602ff /><rect x=1176 fill=#8000ff /><rect x=1182 fill=#8900ff /><rect x=1188 fill=#9200ff /><rect x=1194 fill=#9b00ff /><rect x=1200 fill=#a500ff /><rect x=1206 fill=#ae00ff /><rect x=1212 fill=#b700ff /><rect x=1218 fill=#c100ff /><rect x=1224 fill=#ca00ff /><rect x=1230 fill=#d300ff /><rect x=1236 fill=#d0f /><rect x=1242 fill=#e600ff /><rect x=1248 fill=#ef00ff /><rect x=1254 fill=#f900ff /><rect x=1260 fill=#ff00fc /><rect x=1266 fill=#ff00f3 /><rect x=1272 fill=#ff00eb /><rect x=1278 fill=#ff00e3 /><rect x=1284 fill=#ff00dc /><rect x=1290 fill=#ff00d5 /><rect x=1296 fill=#ff00ce /><rect x=1302 fill=#ff00c8 /><rect x=1308 fill=#ff00c2 /><rect x=1314 fill=#ff00bd /><rect x=1320 fill=#ff00b8 /><rect x=1326 fill=#ff00b3 /><rect x=1332 fill=#ff00ae /><rect x=1338 fill=#ff00a9 /></g>
<g transform="translate(0 282)"><rect x=1032 fill=#003eff /><rect x=1038 fill=#003cff /><rect x=1044 fill=#0039ff /><rect x=1050 fill=#0037ff /><rect x=1056 fill=#0035ff /><rect x=1062 fill=#0032ff /><rect x=1068 fill=#0030ff /><rect x=1074 fill=#002dff /><rect x=1080 fill=#002bff /><rect x=1086 fill=#0028ff /><rect x=1092 fill=#0025ff /><rect x=1098 fill=#0023ff /><rect x=1104 fill=#0a20ff /><rect x=1110 fill=#151eff /><rect x=1116 fill=#1f1bff /><rect x=1122 fill=#2818ff /><rect x=1128 fill=#3215ff /><rect x=1134 fill=#3b12ff /><rect x=1140 fill=#440fff /><rect x=1146 fill=#4e0cff /><rect x=1152 fill=#5709ff /><rect x=1158 fill=#6006ff /><rect x=1164 fill=#6902ff /><rect x=1170 fill=#7200ff /><rect x=1176 fill=#7b00ff /><rect x=1182 fill=#8400ff /><rect x=1188 fill=#8d00ff /><rect x=1194 fill=#9600ff /><rect x=1200 fill=#9f00ff /><rect x=1206 fill=#a800ff /><rect x=1212 fill=#b100ff /><rect x=1218 fill=#ba00ff /><rect x=1224 fill=#c300ff /><rect x=1230 fill=#c0f /><rect x=1236 fill=#d500ff /><rect x=1242 fill=#de00ff /><rect x=1248 fill=#e700ff /><rect x=1254 fill=#f100ff /><rect x=1260 fill=#fa00ff /><rect x=1266 fill=#ff00fb /><rect x=1272 fill=#ff00f3 /><rect x=1278 fill=#ff00ea /><rect x=1284 fill=#ff00e3 /><rect x=1290 fill=#ff00dc /><rect x=1296 fill=#ff00d5 /><rect x=1302 fill=#ff00cf /><rect x=1308 fill=#ff00c9 /><rect x=1314 fill=#ff00c3 /><rect x=1320 fill=#ff00be /><rect x=1326 fill=#ff00b9 /><rect x=1332 fill=#ff00b4 /></g>
<g transform="translate(0 288)"><rect x=1032 fill=#003aff /><rect x=1038 fill=#0038ff /><rect x=1044 fill=#0036ff /><rect x=1050 fill=#03f /><rect x=1056 fill=#0031ff /><rect x=1062 fill=#002fff /><rect x=1068 fill=#002cff /><rect x=1074 fill=#002aff /><rect x=1080 fill=#0027ff /><rect x=1086 fill=#0025ff /><rect x=1092 fill=#02f /><rect x=1098 fill=#0020ff /><rect x=1104 fill=#081dff /><rect x=1110 fill=#131aff /><rect x=1116 fill=#1c18ff /><rect x=1122 fill=#2615ff /><rect x=1128 fill=#2f12ff /><rect x=1134 fill=#380fff /><rect x=1140 fill=#410cff /><rect x=1146 fill=#4a09ff /><rect x=1152 fill=#5306ff /><rect x=1158 fill=#5c03ff /><rect x=1164 fill=#6500ff /><rect x=1170 fill=#6e00ff /><rect x=1176 fill=#7600ff /><rect x=1182 fill=#7f00ff /><rect x=1188 fill=#80f /><rect x=1194 fill=#9100ff /><rect x=1200 fill=#9a00ff /><rect x=1206 fill=#a200ff /><rect x=1212 fill=#ab00ff /><rect x=1218 fill=#b400ff /><rect x=1224 fill=#bd00ff /><rect x=1230 fill=#c500ff /><rect x=1236 fill=#ce00ff /><rect x=1242 fill=#d700ff /><rect x=1248 fill=#e000ff /><rect x=1254 fill=#e900ff /><rect x=1260 fill=#f200ff /><rect x=1266 fill=#fb00ff /><rect x=1272 fill=#ff00fb /><rect x=1278 fill=#ff00f2 /><rect x=1284 fill=#ff00ea /><rect x=1290 fill=#ff00e3 /><rect x=1296 fill=#ff00dc /><rect x=1302 fill=#ff00d5 /><rect x=1308 fill=#ff00cf /><rect x=1314 fill=#ff00c9 /><rect x=1320 fill=#ff00c4 /><rect x=1326 fill=#ff00bf /></g>
<g transform="translate(0 294)"><rect x=1038 fill=#0035ff /><rect x=1044 fill=#0032ff /><rect x=1050 fill=#0030ff /><rect x=1056 fill=#002eff /><rect x=1062 fill=#002bff /><rect x=1068 fill=#0029ff /><rect x=1074 fill=#0027ff /><rect x=1080 fill=#0024ff /><rect x=1086 fill=#02f /><rect x=1092 fill=#001fff /><rect x=1098 fill=#001cff /><rect x=1104 fill=#071aff /><rect x=1110 fill=#1117ff /><rect x=1116 fill=#1a15ff /><rect x=1122 fill=#2412ff /><rect x=1128 fill=#2d0fff /><rect x=1134 fill=#360cff /><rect x=1140 fill=#3e09ff /><rect x=1146 fill=#4706ff /><rect x=1152 fill=#5003ff /><rect x=1158 fill=#5900ff /><rect x=1164 fill=#6100ff /><rect x=1170 fill=#6a00ff /><rect x=1176 fill=#7200ff /><rect x=1182 fill=#7b00ff /><rect x=1188 fill=#8300ff /><rect x=1194 fill=#8c00ff /><rect x=1200 fill=#9400ff /><rect x=1206 fill=#9d00ff /><rect x=1212 fill=#a500ff /><rect x=1218 fill=#ae00ff /><rect x=1224 fill=#b700ff /><rect x=1230 fill=#bf00ff /><rect x=1236 fill=#c800ff /><rect x=1242 fill=#d000ff /><rect x=1248 fill=#d900ff /><rect x=1254 fill=#e200ff /><rect x=1260 fill=#ea00ff /><rect x=1266 fill=#f300ff /><rect x=1272 fill=#fb00ff /><rect x=1278 fill=#ff00fa /><rect x=1284 fill=#ff00f2 /><rect x=1290 fill=#ff00ea /><rect x=1296 fill=#ff00e3 /><rect x=1302 fill=#ff00dc /><rect x=1308 fill=#ff00d6 /><rect x=1314 fill=#ff00d0 /><rect x=1320 fill=#ff00ca /></g>
<g transform="translate(0 300)"><rect x=1038 fill=#0031ff /><rect x=1044 fill=#002fff /><rect x=1050 fill=#002dff /><rect x=1056 fill=#002aff /><rect x=1062 fill=#0028ff /><rect x=1068 fill=#0026ff /><rect x=1074 fill=#0023ff /><rect x=1080 fill=#0021ff /><rect x=1086 fill=#001fff /><rect x=1092 fill=#001cff /><rect x=1098 fill=#001aff /><rect x=1104 fill=#0517ff /><rect x=1110 fill=#0f14ff /><rect x=1116 fill=#1812ff /><rect x=1122 fill=#210fff /><rect x=1128 fill=#2a0cff /><rect x=1134 fill=#3309ff /><rect x=1140 fill=#3c06ff /><rect x=1146 fill=#4403ff /><rect x=1152 fill=#4d00ff /><rect x=1158 fill=#50f /><rect x=1164 fill=#5e00ff /><rect x=1170 fill=#60f /><rect x=1176 fill=#6e00ff /><rect x=1182 fill=#70f /><rect x=1188 fill=#7f00ff /><rect x=1194 fill=#8700ff /><rect x=1200 fill=#9000ff /><rect x=1206 fill=#9800ff /><rect x=1212 fill=#a000ff /><rect x=1218 fill=#a900ff /><rect x=1224 fill=#b100ff /><rect x=1230 fill=#b900ff /><rect x=1236 fill=#c100ff /><rect x=1242 fill=#ca00ff /><rect x=1248 fill=#d200ff /><rect x=1254 fill=#db00ff /><rect x=1260 fill=#e300ff /><rect x=1266 fill=#eb00ff /><rect x=1272 fill=#f400ff /><rect x=1278 fill=#fc00ff /><rect x=1284 fill=#ff00f9 /><rect x=1290 fill=#ff00f1 /><rect x=1296 fill=#ff00ea /><rect x=1302 fill=#ff00e3 /><rect x=1308 fill=#ff00dc /><rect x=1314 fill=#ff00d6 /></g>
<g transform="translate(0 306)"><rect x=1044 fill=#002cff /><rect x=1050 fill=#002aff /><rect x=1056 fill=#0027ff /><rect x=1062 fill=#0025ff /><rect x=1068 fill=#0023ff /><rect x=1074 fill=#0020ff /><rect x=1080 fill=#001eff /><rect x=1086 fill=#001cff /><rect x=1092 fill=#0019ff /><rect x=1098 fill=#0017ff /><rect x=1104 fill=#0314ff /><rect x=1110 fill=#0d12ff /><rect x=1116 fill=#160fff /><rect x=1122 fill=#1f0cff /><rect x=1128 fill=#2809ff /><rect x=1134 fill=#3107ff /><rect x=1140 fill=#3904ff /><rect x=1146 fill=#4100ff /><rect x=1152 fill=#4a00ff /><rect x=1158 fill=#5200ff /><rect x=1164 fill=#5a00ff /><rect x=1170 fill=#6200ff /><rect x=1176 fill=#6a00ff /><rect x=1182 fill=#7300ff /><rect x=1188 fill=#7b00ff /><rect x=1194 fill=#8300ff /><rect x=1200 fill=#8b00ff /><rect x=1206 fill=#9300ff /><rect x=1212 fill=#9b00ff /><rect x=1218 fill=#a300ff /><rect x=1224 fill=#ab00ff /><rect x=1230 fill=#b300ff /><rect x=1236 fill=#bc00ff /><rect x=1242 fill=#c400ff /><rect x=1248 fill=#c0f /><rect x=1254 fill=#d400ff /><rect x=1260 fill=#dc00ff /><rect x=1266 fill=#e400ff /><rect x=1272 fill=#ed00ff /><rect x=1278 fill=#f500ff /><rect x=1284 fill=#fd00ff /><rect x=1290 fill=#ff00f9 /><rect x=1296 fill=#ff00f1 /><rect x=1302 fill=#ff00ea /><rect x=1308 fill=#ff00e3 /></g>
<g transform="translate(0 312)"><rect x=1050 fill=#0027ff /><rect x=1056 fill=#0024ff /><rect x=1062 fill=#02f /><rect x=1068 fill=#0020ff /><rect x=1074 fill=#001eff /><rect x=1080 fill=#001bff /><rect x=1086 fill=#0019ff /><rect x=1092 fill=#0016ff /><rect x=1098 fill=#0014ff /><rect x=1104 fill=#0211ff /><rect x=1110 fill=#0c0fff /><rect x=1116 fill=#150cff /><rect x=1122 fill=#1d0aff /><rect x=1128 fill=#2607ff /><rect x=1134 fill=#2e04ff /><rect x=1140 fill=#3701ff /><rect x=1146 fill=#3f00ff /><rect x=1152 fill=#4700ff /><rect x=1158 fill=#4f00ff /><rect x=1164 fill=#5700ff /><rect x=1170 fill=#5f00ff /><rect x=1176 fill=#6700ff /><rect x=1182 fill=#6f00ff /><rect x=1188 fill=#70f /><rect x=1194 fill=#7f00ff /><rect x=1200 fill=#8700ff /><rect x=1206 fill=#8e00ff /><rect x=1212 fill=#9600ff /><rect x=1218 fill=#9e00ff /><rect x=1224 fill=#a600ff /><rect x=1230 fill=#ae00ff /><rect x=1236 fill=#b600ff /><rect x=1242 fill=#be00ff /><rect x=1248 fill=#c600ff /><rect x=1254 fill=#ce00ff /><rect x=1260 fill=#d600ff /><rect x=1266 fill=#de00ff /><rect x=1272 fill=#e600ff /><rect x=1278 fill=#e0f /><rect x=1284 fill=#f600ff /><rect x=1290 fill=#fe00ff /><rect x=1296 fill=#ff00f8 /><rect x=1302 fill=#ff00f1 /></g>
<g transform="translate(0 318)"><rect x=1050 fill=#0024ff /><rect x=1056 fill=#02f /><rect x=1062 fill=#001fff /><rect x=1068 fill=#001dff /><rect x=1074 fill=#001bff /><rect x=1080 fill=#0018ff /><rect x=1086 fill=#0016ff /><rect x=1092 fill=#0014ff /><rect x=1098 fill=#01f /><rect x=1104 fill=#000fff /><rect x=1110 fill=#0a0cff /><rect x=1116 fill=#130aff /><rect x=1122 fill=#1c07ff /><rect x=1128 fill=#2404ff /><rect x=1134 fill=#2c01ff /><rect x=1140 fill=#3400ff /><rect x=1146 fill=#3c00ff /><rect x=1152 fill=#40f /><rect x=1158 fill=#4c00ff /><rect x=1164 fill=#5400ff /><rect x=1170 fill=#5c00ff /><rect x=1176 fill=#6300ff /><rect x=1182 fill=#6b00ff /><rect x=1188 fill=#7300ff /><rect x=1194 fill=#7b00ff /><rect x=1200 fill=#8200ff /><rect x=1206 fill=#8a00ff /><rect x=1212 fill=#9200ff /><rect x=1218 fill=#9a00ff /><rect x=1224 fill=#a100ff /><rect x=1230 fill=#a900ff /><rect x=1236 fill=#b100ff /><rect x=1242 fill=#b800ff /><rect x=1248 fill=#c000ff /><rect x=1254 fill=#c800ff /><rect x=1260 fill=#d000ff /><rect x=1266 fill=#d700ff /><rect x=1272 fill=#df00ff /><rect x=1278 fill=#e700ff /><rect x=1284 fill=#ef00ff /><rect x=1290 fill=#f700ff /><rect x=1296 fill=#f0f /></g>
<g transform="translate(0 324)"><rect x=1056 fill=#001fff /><rect x=1062 fill=#001dff /><rect x=1068 fill=#001aff /><rect x=1074 fill=#0018ff /><rect x=1080 fill=#0016ff /><rect x=1086 fill=#0013ff /><rect x=1092 fill=#01f /><rect x=1098 fill=#000fff /><rect x=1104 fill=#000cff /><rect x=1110 fill=#080aff /><rect x=1116 fill=#1107ff /><rect x=1122 fill=#1a04ff /><rect x=1128 fill=#2201ff /><rect x=1134 fill=#2a00ff /><rect x=1140 fill=#3200ff /><rect x=1146 fill=#3a00ff /><rect x=1152 fill=#4100ff /><rect x=1158 fill=#4900ff /><rect x=1164 fill=#5100ff /><rect x=1170 fill=#5800ff /><rect x=1176 fill=#6000ff /><rect x=1182 fill=#6800ff /><rect x=1188 fill=#6f00ff /><rect x=1194 fill=#70f /><rect x=1200 fill=#7e00ff /><rect x=1206 fill=#8600ff /><rect x=1212 fill=#8d00ff /><rect x=1218 fill=#9500ff /><rect x=1224 fill=#9d00ff /><rect x=1230 fill=#a400ff /><rect x=1236 fill=#ac00ff /><rect x=1242 fill=#b300ff /><rect x=1248 fill=#b0f /><rect x=1254 fill=#c200ff /><rect x=1260 fill=#ca00ff /><rect x=1266 fill=#d100ff /><rect x=1272 fill=#d900ff /><rect x=1278 fill=#e100ff /><rect x=1284 fill=#e800ff /><rect x=1290 fill=#f000ff /></g>
<g transform="translate(0 330)"><rect x=1056 fill=#001cff /><rect x=1062 fill=#001aff /><rect x=1068 fill=#0018ff /><rect x=1074 fill=#0016ff /><rect x=1080 fill=#0013ff /><rect x=1086 fill=#01f /><rect x=1092 fill=#000fff /><rect x=1098 fill=#000cff /><rect x=1104 fill=#000aff /><rect x=1110 fill=#0707ff /><rect x=1116 fill=#1004ff /><rect x=1122 fill=#1802ff /><rect x=1128 fill=#2000ff /><rect x=1134 fill=#2800ff /><rect x=1140 fill=#3000ff /><rect x=1146 fill=#3700ff /><rect x=1152 fill=#3f00ff /><rect x=1158 fill=#4700ff /><rect x=1164 fill=#4e00ff /><rect x=1170 fill=#50f /><rect x=1176 fill=#5d00ff /><rect x=1182 fill=#6400ff /><rect x=1188 fill=#6c00ff /><rect x=1194 fill=#7300ff /><rect x=1200 fill=#7b00ff /><rect x=1206 fill=#8200ff /><rect x=1212 fill=#8900ff /><rect x=1218 fill=#9100ff /><rect x=1224 fill=#9800ff /><rect x=1230 fill=#9f00ff /><rect x=1236 fill=#a700ff /><rect x=1242 fill=#ae00ff /><rect x=1248 fill=#b500ff /><rect x=1254 fill=#bd00ff /><rect x=1260 fill=#c400ff /><rect x=1266 fill=#c0f /><rect x=1272 fill=#d300ff /><rect x=1278 fill=#db00ff /><rect x=1284 fill=#e200ff /><rect x=1290 fill=#e900ff /></g>
<g transform="translate(0 336)"><rect x=1062 fill=#0018ff /><rect x=1068 fill=#0015ff /><rect x=1074 fill=#0013ff /><rect x=1080 fill=#01f /><rect x=1086 fill=#000fff /><rect x=1092 fill=#000cff /><rect x=1098 fill=#000aff /><rect x=1104 fill=#0007ff /><rect x=1110 fill=#0505ff /><rect x=1116 fill=#0e02ff /><rect x=1122 fill=#1600ff /><rect x=1128 fill=#1e00ff /><rect x=1134 fill=#2600ff /><rect x=1140 fill=#2e00ff /><rect x=1146 fill=#3500ff /><rect x=1152 fill=#3d00ff /><rect x=1158 fill=#40f /><rect x=1164 fill=#4b00ff /><rect x=1170 fill=#5300ff /><rect x=1176 fill=#5a00ff /><rect x=1182 fill=#6100ff /><rect x=1188 fill=#6800ff /><rect x=1194 fill=#7000ff /><rect x=1200 fill=#70f /><rect x=1206 fill=#7e00ff /><rect x=1212 fill=#8500ff /><rect x=1218 fill=#8d00ff /><rect x=1224 fill=#9400ff /><rect x=1230 fill=#9b00ff /><rect x=1236 fill=#a200ff /><rect x=1242 fill=#a900ff /><rect x=1248 fill=#b100ff /><rect x=1254 fill=#b800ff /><rect x=1260 fill=#bf00ff /><rect x=1266 fill=#c600ff /><rect x=1272 fill=#cd00ff /><rect x=1278 fill=#d500ff /><rect x=1284 fill=#dc00ff /></g>
<g transform="translate(0 342)"><rect x=1068 fill=#0013ff /><rect x=1074 fill=#01f /><rect x=1080 fill=#000eff /><rect x=1086 fill=#000cff /><rect x=1092 fill=#000aff /><rect x=1098 fill=#0007ff /><rect x=1104 fill=#0005ff /><rect x=1110 fill=#0402ff /><rect x=1116 fill=#0d00ff /><rect x=1122 fill=#1500ff /><rect x=1128 fill=#1c00ff /><rect x=1134 fill=#2400ff /><rect x=1140 fill=#2c00ff /><rect x=1146 fill=#30f /><rect x=1152 fill=#3a00ff /><rect x=1158 fill=#4200ff /><rect x=1164 fill=#4900ff /><rect x=1170 fill=#5000ff /><rect x=1176 fill=#5700ff /><rect x=1182 fill=#5e00ff /><rect x=1188 fill=#6500ff /><rect x=1194 fill=#6c00ff /><rect x=1200 fill=#7300ff /><rect x=1206 fill=#7a00ff /><rect x=1212 fill=#8200ff /><rect x=1218 fill=#8900ff /><rect x=1224 fill=#9000ff /><rect x=1230 fill=#9700ff /><rect x=1236 fill=#9e00ff /><rect x=1242 fill=#a500ff /><rect x=1248 fill=#ac00ff /><rect x=1254 fill=#b300ff /><rect x=1260 fill=#ba00ff /><rect x=1266 fill=#c100ff /><rect x=1272 fill=#c800ff /><rect x=1278 fill=#cf00ff /></g>
<g transform="translate(0 348)"><rect x=1068 fill=#01f /><rect x=1074 fill=#000eff /><rect x=1080 fill=#000cff /><rect x=1086 fill=#000aff /><rect x=1092 fill=#0007ff /><rect x=1098 fill=#0005ff /><rect x=1104 fill=#0002ff /><rect x=1110 fill=#0300ff /><rect x=1116 fill=#0b00ff /><rect x=1122 fill=#1300ff /><rect x=1128 fill=#1b00ff /><rect x=1134 fill=#20f /><rect x=1140 fill=#2a00ff /><rect x=1146 fill=#3100ff /><rect x=1152 fill=#3800ff /><rect x=1158 fill=#3f00ff /><rect x=1164 fill=#4600ff /><rect x=1170 fill=#4d00ff /><rect x=1176 fill=#5400ff /><rect x=1182 fill=#5b00ff /><rect x=1188 fill=#6200ff /><rect x=1194 fill=#6900ff /><rect x=1200 fill=#7000ff /><rect x=1206 fill=#70f /><rect x=1212 fill=#7e00ff /><rect x=1218 fill=#8500ff /><rect x=1224 fill=#8c00ff /><rect x=1230 fill=#9300ff /><rect x=1236 fill=#90f /><rect x=1242 fill=#a000ff /><rect x=1248 fill=#a700ff /><rect x=1254 fill=#ae00ff /><rect x=1260 fill=#b500ff /><rect x=1266 fill=#bc00ff /><rect x=1272 fill=#c300ff /></g>
<g transform="translate(0 354)"><rect x=1074 fill=#000cff /><rect x=1080 fill=#000aff /><rect x=1086 fill=#0008ff /><rect x=1092 fill=#0005ff /><rect x=1098 fill=#0003ff /><rect x=1104 fill=#00f /><rect x=1110 fill=#0100ff /><rect x=1116 fill=#0a00ff /><rect x=1122 fill=#1200ff /><rect x=1128 fill=#1900ff /><rect x=1134 fill=#2100ff /><rect x=1140 fill=#2800ff /><rect x=1146 fill=#2f00ff /><rect x=1152 fill=#3600ff /><rect x=1158 fill=#3d00ff /><rect x=1164 fill=#40f /><rect x=1170 fill=#4b00ff /><rect x=1176 fill=#5200ff /><rect x=1182 fill=#5800ff /><rect x=1188 fill=#5f00ff /><rect x=1194 fill=#60f /><rect x=1200 fill=#6d00ff /><rect x=1206 fill=#7400ff /><rect x=1212 fill=#7a00ff /><rect x=1218 fill=#8100ff /><rect x=1224 fill=#80f /><rect x=1230 fill=#8f00ff /><rect x=1236 fill=#9500ff /><rect x=1242 fill=#9c00ff /><rect x=1248 fill=#a300ff /><rect x=1254 fill=#a0f /><rect x=1260 fill=#b000ff /><rect x=1266 fill=#b700ff /></g>
<g transform="translate(0 360)"><rect x=1080 fill=#0008ff /><rect x=1086 fill=#0005ff /><rect x=1092 fill=#0003ff /><rect x=1098 fill=#00f /><rect x=1104 fill=#00f /><rect x=1110 fill=#00f /><rect x=1116 fill=#0800ff /><rect x=1122 fill=#1000ff /><rect x=1128 fill=#1800ff /><rect x=1134 fill=#1f00ff /><rect x=1140 fill=#2600ff /><rect x=1146 fill=#2d00ff /><rect x=1152 fill=#3400ff /><rect x=1158 fill=#3b00ff /><rect x=1164 fill=#4200ff /><rect x=1170 fill=#4800ff /><rect x=1176 fill=#4f00ff /><rect x=1182 fill=#5600ff /><rect x=1188 fill=#5c00ff /><rect x=1194 fill=#6300ff /><rect x=1200 fill=#6a00ff /><rect x=1206 fill=#7000ff /><rect x=1212 fill=#70f /><rect x=1218 fill=#7e00ff /><rect x=1224 fill=#8400ff /><rect x=1230 fill=#8b00ff /><rect x=1236 fill=#9200ff /><rect x=1242 fill=#9800ff /><rect x=1248 fill=#9f00ff /><rect x=1254 fill=#a500ff /><rect x=1260 fill=#ac00ff /></g>
<g transform="translate(0 366)"><rect x=1086 fill=#0003ff /><rect x=1092 fill=#00f /><rect x=1098 fill=#00f /><rect x=1104 fill=#00f /><rect x=1110 fill=#00f /><rect x=1116 fill=#0700ff /><rect x=1122 fill=#0f00ff /><rect x=1128 fill=#1600ff /><rect x=1134 fill=#1d00ff /><rect x=1140 fill=#2400ff /><rect x=1146 fill=#2b00ff /><rect x=1152 fill=#3200ff /><rect x=1158 fill=#3900ff /><rect x=1164 fill=#3f00ff /><rect x=1170 fill=#4600ff /><rect x=1176 fill=#4d00ff /><rect x=1182 fill=#5300ff /><rect x=1188 fill=#5a00ff /><rect x=1194 fill=#6000ff /><rect x=1200 fill=#6700ff /><rect x=1206 fill=#6d00ff /><rect x=1212 fill=#7400ff /><rect x=1218 fill=#7a00ff /><rect x=1224 fill=#8100ff /><rect x=1230 fill=#8700ff /><rect x=1236 fill=#8e00ff /><rect x=1242 fill=#9400ff /><rect x=1248 fill=#9b00ff /><rect x=1254 fill=#a100ff /></g>
<g transform="translate(0 372)"><rect x=1086 fill=#0001ff /><rect x=1092 fill=#00f /><rect x=1098 fill=#00f /><rect x=1104 fill=#00f /><rect x=1110 fill=#00f /><rect x=1116 fill=#0600ff /><rect x=1122 fill=#0d00ff /><rect x=1128 fill=#1500ff /><rect x=1134 fill=#1c00ff /><rect x=1140 fill=#2300ff /><rect x=1146 fill=#2900ff /><rect x=1152 fill=#3000ff /><rect x=1158 fill=#3700ff /><rect x=1164 fill=#3d00ff /><rect x=1170 fill=#40f /><rect x=1176 fill=#4a00ff /><rect x=1182 fill=#5100ff /><rect x=1188 fill=#5700ff /><rect x=1194 fill=#5e00ff /><rect x=1200 fill=#6400ff /><rect x=1206 fill=#6a00ff /><rect x=1212 fill=#7100ff /><rect x=1218 fill=#70f /><rect x=1224 fill=#7d00ff /><rect x=1230 fill=#8400ff /><rect x=1236 fill=#8a00ff /><rect x=1242 fill=#9100ff /><rect x=1248 fill=#9700ff /></g>
<g transform="translate(0 378)"><rect x=1092 fill=#00f /><rect x=1098 fill=#00f /><rect x=1104 fill=#00f /><rect x=1110 fill=#00f /><rect x=1116 fill=#0500ff /><rect x=1122 fill=#0c00ff /><rect x=1128 fill=#1300ff /><rect x=1134 fill=#1a00ff /><rect x=1140 fill=#2100ff /><rect x=1146 fill=#2800ff /><rect x=1152 fill=#2e00ff /><rect x=1158 fill=#3500ff /><rect x=1164 fill=#3b00ff /><rect x=1170 fill=#4200ff /><rect x=1176 fill=#4800ff /><rect x=1182 fill=#4e00ff /><rect x=1188 fill=#50f /><rect x=1194 fill=#5b00ff /><rect x=1200 fill=#6100ff /><rect x=1206 fill=#6800ff /><rect x=1212 fill=#6e00ff /><rect x=1218 fill=#7400ff /><rect x=1224 fill=#7a00ff /><rect x=1230 fill=#8100ff /><rect x=1236 fill=#8700ff /><rect x=1242 fill=#8d00ff /></g>
<g transform="translate(0 384)"><rect x=1098 fill=#00f /><rect x=1104 fill=#00f /><rect x=1110 fill=#00f /><rect x=1116 fill=#0300ff /><rect x=1122 fill=#0b00ff /><rect x=1128 fill=#1200ff /><rect x=1134 fill=#1900ff /><rect x=1140 fill=#1f00ff /><rect x=1146 fill=#2600ff /><rect x=1152 fill=#2c00ff /><rect x=1158 fill=#30f /><rect x=1164 fill=#3900ff /><rect x=1170 fill=#4000ff /><rect x=1176 fill=#4600ff /><rect x=1182 fill=#4c00ff /><rect x=1188 fill=#5200ff /><rect x=1194 fill=#5800ff /><rect x=1200 fill=#5f00ff /><rect x=1206 fill=#6500ff /><rect x=1212 fill=#6b00ff /><rect x=1218 fill=#7100ff /><rect x=1224 fill=#70f /><rect x=1230 fill=#7d00ff /><rect x=1236 fill=#8300ff /><rect x=1242 fill=#8a00ff /></g>
<g transform="translate(0 390)"><rect x=1104 fill=#00f /><rect x=1110 fill=#00f /><rect x=1116 fill=#0200ff /><rect x=1122 fill=#0a00ff /><rect x=1128 fill=#10f /><rect x=1134 fill=#1700ff /><rect x=1140 fill=#1e00ff /><rect x=1146 fill=#2400ff /><rect x=1152 fill=#2b00ff /><rect x=1158 fill=#3100ff /><rect x=1164 fill=#3700ff /><rect x=1170 fill=#3e00ff /><rect x=1176 fill=#40f /><rect x=1182 fill=#4a00ff /><rect x=1188 fill=#5000ff /><rect x=1194 fill=#5600ff /><rect x=1200 fill=#5c00ff /><rect x=1206 fill=#6200ff /><rect x=1212 fill=#6800ff /><rect x=1218 fill=#6e00ff /><rect x=1224 fill=#7400ff /><rect x=1230 fill=#7a00ff /><rect x=1236 fill=#8000ff /></g>
<g transform="translate(0 396)"><rect x=1110 fill=#00f /><rect x=1116 fill=#0100ff /><rect x=1122 fill=#0800ff /><rect x=1128 fill=#0f00ff /><rect x=1134 fill=#1600ff /><rect x=1140 fill=#1d00ff /><rect x=1146 fill=#2300ff /><rect x=1152 fill=#2900ff /><rect x=1158 fill=#2f00ff /><rect x=1164 fill=#3600ff /><rect x=1170 fill=#3c00ff /><rect x=1176 fill=#4200ff /><rect x=1182 fill=#4800ff /><rect x=1188 fill=#4e00ff /><rect x=1194 fill=#5400ff /><rect x=1200 fill=#5a00ff /><rect x=1206 fill=#6000ff /><rect x=1212 fill=#60f /><rect x=1218 fill=#6b00ff /><rect x=1224 fill=#7100ff /><rect x=1230 fill=#70f /></g>
<g transform="translate(0 402)"><rect x=1116 fill=#00f /><rect x=1122 fill=#0700ff /><rect x=1128 fill=#0e00ff /><rect x=1134 fill=#1500ff /><rect x=1140 fill=#1b00ff /><rect x=1146 fill=#2100ff /><rect x=1152 fill=#2800ff /><rect x=1158 fill=#2e00ff /><rect x=1164 fill=#3400ff /><rect x=1170 fill=#3a00ff /><rect x=1176 fill=#4000ff /><rect x=1182 fill=#4600ff /><rect x=1188 fill=#4c00ff /><rect x=1194 fill=#5100ff /><rect x=1200 fill=#5700ff /><rect x=1206 fill=#5d00ff /><rect x=1212 fill=#6300ff /><rect x=1218 fill=#6900ff /><rect x=1224 fill=#6f00ff /></g>
<g transform="translate(0 408)"><rect x=1122 fill=#0600ff /><rect x=1128 fill=#0d00ff /><rect x=1134 fill=#1300ff /><rect x=1140 fill=#1a00ff /><rect x=1146 fill=#2000ff /><rect x=1152 fill=#2600ff /><rect x=1158 fill=#2c00ff /><rect x=1164 fill=#3200ff /><rect x=1170 fill=#3800ff /><rect x=1176 fill=#3e00ff /><rect x=1182 fill=#40f /><rect x=1188 fill=#4900ff /><rect x=1194 fill=#4f00ff /><rect x=1200 fill=#50f /><rect x=1206 fill=#5b00ff /><rect x=1212 fill=#6000ff /><rect x=1218 fill=#60f /></g>
<g transform="translate(0 414)"><rect x=1128 fill=#0c00ff /><rect x=1134 fill=#1200ff /><rect x=1140 fill=#1800ff /><rect x=1146 fill=#1f00ff /><rect x=1152 fill=#2500ff /><rect x=1158 fill=#2b00ff /><rect x=1164 fill=#3000ff /><rect x=1170 fill=#3600ff /><rect x=1176 fill=#3c00ff /><rect x=1182 fill=#4200ff /><rect x=1188 fill=#4700ff /><rect x=1194 fill=#4d00ff /><rect x=1200 fill=#5300ff /><rect x=1206 fill=#5800ff /><rect x=1212 fill=#5e00ff /></g>
<g transform="translate(0 420)"><rect x=1134 fill=#10f /><rect x=1140 fill=#1700ff /><rect x=1146 fill=#1d00ff /><rect x=1152 fill=#2300ff /><rect x=1158 fill=#2900ff /><rect x=1164 fill=#2f00ff /><rect x=1170 fill=#3500ff /><rect x=1176 fill=#3a00ff /><rect x=1182 fill=#4000ff /><rect x=1188 fill=#4500ff /><rect x=1194 fill=#4b00ff /><rect x=1200 fill=#5100ff /><rect x=1206 fill=#5600ff /></g>
<g transform="translate(0 426)"><rect x=1140 fill=#1600ff /><rect x=1146 fill=#1c00ff /><rect x=1152 fill=#20f /><rect x=1158 fill=#2800ff /><rect x=1164 fill=#2d00ff /><rect x=1170 fill=#30f /><rect x=1176 fill=#3800ff /><rect x=1182 fill=#3e00ff /><rect x=1188 fill=#40f /><rect x=1194 fill=#4900ff /><rect x=1200 fill=#4f00ff /></g>
<g transform="translate(0 432)"><rect x=1146 fill=#1b00ff /><rect x=1152 fill=#2000ff /><rect x=1158 fill=#2600ff /><rect x=1164 fill=#2c00ff /><rect x=1170 fill=#3100ff /><rect x=1176 fill=#3700ff /><rect x=1182 fill=#3c00ff /><rect x=1188 fill=#4200ff /><rect x=1194 fill=#4700ff /><rect x=1200 fill=#4d00ff /></g>
<g transform="translate(0 438)"><rect x=1152 fill=#1f00ff /><rect x=1158 fill=#2500ff /><rect x=1164 fill=#2a00ff /><rect x=1170 fill=#3000ff /><rect x=1176 fill=#3500ff /><rect x=1182 fill=#3b00ff /><rect x=1188 fill=#4000ff /><rect x=1194 fill=#4500ff /></g>
<g transform="translate(0 444)"><rect x=1158 fill=#2300ff /><rect x=1164 fill=#2900ff /><rect x=1170 fill=#2e00ff /><rect x=1176 fill=#3400ff /><rect x=1182 fill=#3900ff /><rect x=1188 fill=#3e00ff /></g>
<g transform="translate(0 450)"><rect x=1164 fill=#2700ff /><rect x=1170 fill=#2d00ff /><rect x=1176 fill=#3200ff /><rect x=1182 fill=#3700ff /></g>
<g transform="translate(0 456)"><rect x=1170 fill=#2b00ff /><rect x=1176 fill=#3100ff /></g></g><path d="M1178.4 449.5L1176.7 449.9L1174.9 449.5L1173.4 448.4L1171.9 447.3L1170.8 446.4L1169.5 445.3L1168.0 444.0L1166.3 442.5L1164.5 440.8L1162.5 438.9L1161.4 437.8L1160.2 436.8L1159.0 435.6L1157.8 434.5L1156.5 433.3L1155.1 432.0L1153.6 430.7L1152.0 429.2L1150.4 427.7L1148.6 426.2L1146.8 424.5L1144.9 422.8L1143.0 421.0L1141.0 419.2L1138.9 417.3L1136.7 415.3L1134.4 413.1L1132.0 410.9L1129.5 408.5L1127.0 405.9L1124.3 403.3L1121.6 400.5L1118.8 397.5L1115.8 394.3L1112.8 391.0L1109.6 387.3L1106.2 383.2L1102.6 378.7L1098.7 373.7L1094.6 368.3L1090.3 362.4L1085.8 356.1L1081.2 349.4L1076.5 342.4L1071.7 335.0L1066.7 327.1L1061.6 318.9L1056.5 310.3L1051.3 301.3L1046.0 292.0L1040.8 282.5L1035.5 272.8L1030.2 262.9L1025.1 253.0L1020.0 243.0L1015.0 232.9L1010.3 222.8L1005.8 212.9L1001.6 203.0L997.7 193.4L994.1 184.0L990.6 174.9L987.4 166.1L984.5 157.6L981.8 149.4L979.4 141.7L977.2 134.5L975.4 127.6L973.8 121.2L972.4 115.2L971.3 109.6L970.3 104.4L969.6 99.6L969.1 95.1L968.8 90.9L968.6 87.1L968.7 83.5L968.9 80.2L969.2 77.1L969.8 74.2L970.5 71.6L971.3 69.1L972.3 66.9L973.4 64.9L974.7 63.1L976.1 61.4L977.6 60.0L979.2 58.8L980.9 57.7L982.7 56.8L984.5 56.0L986.5 55.4L988.5 54.8L990.5 54.4L992.7 54.1L994.8 53.8L997.1 53.6L999.3 53.5L1001.6 53.4L1003.9 53.3L1006.3 53.2L1008.6 53.2L1010.9 53.2L1013.3 53.2L1015.6 53.2L1017.9 53.3L1020.3 53.4L1022.7 53.5L1025.1 53.6L1027.6 53.7L1030.0 53.8L1032.5 54.0L1035.1 54.2L1037.7 54.4L1040.3 54.6L1043.0 54.8L1045.7 55.0L1048.5 55.3L1051.3 55.6L1054.1 55.9L1057.1 56.1L1060.0 56.5L1063.1 56.8L1066.1 57.1L1069.3 57.5L1072.5 57.8L1075.8 58.2L1079.1 58.6L1082.5 59.0L1086.0 59.4L1089.6 59.8L1093.2 60.3L1096.9 60.7L1100.7 61.2L1104.5 61.7L1108.5 62.1L1112.5 62.6L1116.6 63.1L1120.8 63.7L1125.0 64.2L1129.4 64.7L1133.8 65.3L1138.3 65.9L1142.9 66.4L1147.6 67.0L1152.4 67.6L1157.3 68.3L1162.2 68.9L1167.3 69.5L1172.4 70.2L1177.6 70.8L1182.9 71.5L1188.2 72.2L1193.7 72.9L1199.2 73.6L1204.8 74.3L1210.5 75.0L1216.2 75.7L1222.0 76.4L1227.8 77.2L1233.7 77.9L1239.6 78.7L1245.6 79.4L1251.7 80.2L1257.7 81.0L1263.7 81.7L1269.7 82.5L1275.6 83.2L1281.5 84.0L1287.2 84.7L1293.0 85.4L1298.8 86.2L1304.5 86.9L1310.3 87.6L1316.0 88.3L1321.6 89.0L1327.1 89.7L1332.4 90.4L1337.7 91.1L1342.8 91.7L1347.8 92.3L1352.7 93.0L1357.4 93.6L1362.1 94.1L1366.6 94.7L1371.0 95.3L1375.3 95.8L1379.4 96.3L1383.4 96.9L1387.3 97.3L1391.0 97.8L1394.6 98.3L1398.1 98.7L1401.4 99.1L1404.6 99.5L1407.8 99.9L1410.8 100.3L1413.7 100.7L1416.5 101.0L1419.2 101.4L1421.8 101.7L1424.4 102.0L1426.9 102.3L1429.3 102.7L1431.7 103.0L1434.0 103.2L1436.2 103.5L1438.3 103.8L1440.4 104.1L1442.4 104.3L1444.3 104.6L1446.2 104.8L1447.9 105.0L1451.3 105.4L1454.3 105.8L1457.0 106.2L1459.4 106.5L1461.6 106.7L1463.5 107.0L1465.3 107.2L1467.7 107.5L1469.5 107.7L1471.4 108.0L1473.4 108.2L1475.2 108.5L1477.1 108.7L1478.9 108.9L1479.3 109.0Z M1424.5 102.0L1013.2 53.2L1098.3 373.5Z" fill="#000" fill-opacity="0.40" fill-rule="evenodd"/></g>
<rect x="967.5" y="42.8" width="519.3" height="418.2" fill="none" stroke="#999" stroke-width="1.5"/>
<g fill="none" stroke="#fff" stroke-width="1.3"><rect x="1072.7" y="65.3" width="12" height="12"/><rect x="1095.4" y="68.4" width="12" height="12"/><rect x="1088.0" y="74.3" width="12" height="12"/><rect x="1107.3" y="77.0" width="12" height="12"/><rect x="1110.1" y="73.0" width="12" height="12"/><rect x="1121.0" y="72.0" width="12" height="12"/><rect x="1138.2" y="74.1" width="12" height="12"/><rect x="1153.1" y="80.2" width="12" height="12"/><rect x="1172.3" y="81.0" width="12" height="12"/><rect x="1184.6" y="82.2" width="12" height="12"/><rect x="1156.0" y="89.2" width="12" height="12"/><rect x="1166.2" y="86.8" width="12" height="12"/><rect x="1168.2" y="96.2" width="12" height="12"/><rect x="1148.6" y="101.1" width="12" height="12"/><rect x="1186.8" y="102.0" width="12" height="12"/><rect x="1130.3" y="115.5" width="12" height="12"/><rect x="1202.4" y="92.7" width="12" height="12"/><rect x="1214.4" y="86.1" width="12" height="12"/><rect x="1194.9" y="104.5" width="12" height="12"/><rect x="1228.3" y="88.3" width="12" height="12"/><rect x="1231.1" y="88.0" width="12" height="12"/><rect x="1245.1" y="90.3" width="12" height="12"/><rect x="1255.2" y="91.4" width="12" height="12"/><rect x="1258.1" y="91.4" width="12" height="12"/><rect x="1272.0" y="93.3" width="12" height="12"/><rect x="1275.2" y="95.4" width="12" height="12"/><rect x="1279.9" y="99.4" width="12" height="12"/><rect x="1287.0" y="100.7" width="12" height="12"/><rect x="1295.7" y="98.9" width="12" height="12"/><rect x="1300.1" y="98.9" width="12" height="12"/><rect x="1302.7" y="98.9" width="12" height="12"/><rect x="1305.8" y="98.5" width="12" height="12"/><rect x="1226.9" y="108.4" width="12" height="12"/><rect x="1200.4" y="126.2" width="12" height="12"/><rect x="1274.5" y="128.4" width="12" height="12"/><rect x="1082.8" y="128.2" width="12" height="12"/><rect x="1080.0" y="138.9" width="12" height="12"/><rect x="1162.5" y="149.3" width="12" height="12"/><rect x="1224.6" y="144.5" width="12" height="12"/><rect x="1080.3" y="164.3" width="12" height="12"/><rect x="1086.2" y="203.7" width="12" height="12"/><rect x="1121.1" y="191.2" width="12" height="12"/><rect x="1132.8" y="198.5" width="12" height="12"/><rect x="1168.2" y="226.4" width="12" height="12"/><rect x="1164.8" y="239.7" width="12" height="12"/><rect x="1102.5" y="258.7" width="12" height="12"/><rect x="1110.5" y="260.5" width="12" height="12"/><rect x="1136.2" y="266.5" width="12" height="12"/></g><rect x="1123.3" y="128.3" width="13.4" height="14" fill="none" stroke="#fff" stroke-width="1.2"/><rect x="1124.8" y="129.3" width="10.6" height="10.6" fill="none" stroke="#111" stroke-width="2"/><g stroke="#141414" stroke-width="1.45"><circle cx="1078.3" cy="70.9" r="3.35" fill="#b0aea6" fill-opacity=".88"/><circle cx="1102.5" cy="74.4" r="3.35" fill="#5e5a50" fill-opacity=".88"/><circle cx="1095.7" cy="81.7" r="3.35" fill="#5e5a50" fill-opacity=".88"/><circle cx="1105.1" cy="81.7" r="3.35" fill="#5e5a50" fill-opacity=".88"/><circle cx="1113.3" cy="82.1" r="3.35" fill="#85817a" fill-opacity=".88"/><circle cx="1117.0" cy="79.1" r="3.35" fill="#b0aea6" fill-opacity=".88"/><circle cx="1126.8" cy="77.9" r="3.35" fill="#85817a" fill-opacity=".88"/><circle cx="1144.0" cy="79.9" r="3.35" fill="#9a968c" fill-opacity=".88"/><circle cx="1158.3" cy="85.8" r="3.35" fill="#b0aea6" fill-opacity=".88"/><circle cx="1177.5" cy="86.8" r="3.35" fill="#85817a" fill-opacity=".88"/><circle cx="1189.2" cy="88.2" r="3.35" fill="#9a968c" fill-opacity=".88"/><circle cx="1162.4" cy="94.4" r="3.35" fill="#85817a" fill-opacity=".88"/><circle cx="1171.8" cy="93.0" r="3.35" fill="#b0aea6" fill-opacity=".88"/><circle cx="1173.4" cy="102.2" r="3.35" fill="#b0aea6" fill-opacity=".88"/><circle cx="1153.5" cy="106.7" r="3.35" fill="#b0aea6" fill-opacity=".88"/><circle cx="1192.4" cy="106.8" r="3.35" fill="#5e5a50" fill-opacity=".88"/><circle cx="1137.4" cy="120.2" r="3.35" fill="#5e5a50" fill-opacity=".88"/><circle cx="1205.5" cy="98.7" r="3.35" fill="#b0aea6" fill-opacity=".88"/><circle cx="1218.4" cy="91.7" r="3.35" fill="#9a968c" fill-opacity=".88"/><circle cx="1200.7" cy="111.5" r="3.35" fill="#5e5a50" fill-opacity=".88"/><circle cx="1234.1" cy="93.4" r="3.35" fill="#6e6860" fill-opacity=".88"/><circle cx="1250.4" cy="96.5" r="3.35" fill="#5e5a50" fill-opacity=".88"/><circle cx="1260.8" cy="97.4" r="3.35" fill="#b0aea6" fill-opacity=".88"/><circle cx="1274.7" cy="100.0" r="3.35" fill="#9a968c" fill-opacity=".88"/><circle cx="1280.5" cy="100.8" r="3.35" fill="#85817a" fill-opacity=".88"/><circle cx="1282.7" cy="106.2" r="3.35" fill="#b0aea6" fill-opacity=".88"/><circle cx="1291.5" cy="106.0" r="3.35" fill="#b0aea6" fill-opacity=".88"/><circle cx="1299.9" cy="105.8" r="3.35" fill="#5e5a50" fill-opacity=".88"/><circle cx="1303.9" cy="105.8" r="3.35" fill="#85817a" fill-opacity=".88"/><circle cx="1306.5" cy="105.8" r="3.35" fill="#5e5a50" fill-opacity=".88"/><circle cx="1231.0" cy="113.8" r="3.35" fill="#5e5a50" fill-opacity=".88"/><circle cx="1205.4" cy="130.8" r="3.35" fill="#b0aea6" fill-opacity=".88"/><circle cx="1276.7" cy="133.3" r="3.35" fill="#9a968c" fill-opacity=".88"/><circle cx="1088.5" cy="134.5" r="3.35" fill="#b0aea6" fill-opacity=".88"/><circle cx="1085.3" cy="147.1" r="3.35" fill="#5e5a50" fill-opacity=".88"/><circle cx="1167.2" cy="153.1" r="3.35" fill="#85817a" fill-opacity=".88"/><circle cx="1227.4" cy="149.6" r="3.35" fill="#b0aea6" fill-opacity=".88"/><circle cx="1086.3" cy="170.1" r="3.35" fill="#b0aea6" fill-opacity=".88"/><circle cx="1092.2" cy="208.3" r="3.35" fill="#b0aea6" fill-opacity=".88"/><circle cx="1126.5" cy="194.7" r="3.35" fill="#5e5a50" fill-opacity=".88"/><circle cx="1138.2" cy="202.7" r="3.35" fill="#b0aea6" fill-opacity=".88"/><circle cx="1173.9" cy="229.3" r="3.35" fill="#5e5a50" fill-opacity=".88"/><circle cx="1170.8" cy="243.2" r="3.35" fill="#85817a" fill-opacity=".88"/><circle cx="1108.1" cy="264.0" r="3.35" fill="#85817a" fill-opacity=".88"/><circle cx="1117.4" cy="265.1" r="3.35" fill="#b0aea6" fill-opacity=".88"/><circle cx="1140.9" cy="269.8" r="3.35" fill="#85817a" fill-opacity=".88"/><circle cx="1132" cy="135.6" r="3.35" fill="none"/><circle cx="1129.1" cy="135.9" r="3.35" fill="#c4c4c4" fill-opacity=".9"/></g>
<rect x="122.7" y="428.1" width="6.2" height="11.1" fill="#060606"/><rect x="123.8" y="429.3" width="4" height="9.9" fill="#ffffff"/><rect x="123.8" y="429.3" width="4" height="9.9" fill="url(#bg)"/><rect x="129.4" y="366.5" width="6.2" height="72.7" fill="#060606"/><rect x="130.5" y="367.7" width="4" height="71.5" fill="#c8baa0"/><rect x="130.5" y="367.7" width="4" height="71.5" fill="url(#bg)"/><rect x="136.1" y="367.5" width="6.2" height="71.7" fill="#060606"/><rect x="137.2" y="368.7" width="4" height="70.5" fill="#c8aa8c"/><rect x="137.2" y="368.7" width="4" height="70.5" fill="url(#bg)"/><rect x="142.8" y="412.5" width="6.2" height="26.7" fill="#060606"/><rect x="143.9" y="413.7" width="4" height="25.5" fill="#a8b47e"/><rect x="143.9" y="413.7" width="4" height="25.5" fill="url(#bg)"/><rect x="149.5" y="422.5" width="6.2" height="16.7" fill="#060606"/><rect x="150.6" y="423.7" width="4" height="15.5" fill="#66784a"/><rect x="150.6" y="423.7" width="4" height="15.5" fill="url(#bg)"/><rect x="156.2" y="418.5" width="6.2" height="20.7" fill="#060606"/><rect x="157.3" y="419.7" width="4" height="19.5" fill="#6a8c8c"/><rect x="157.3" y="419.7" width="4" height="19.5" fill="url(#bg)"/><rect x="162.9" y="339.5" width="6.2" height="99.7" fill="#060606"/><rect x="164.0" y="340.7" width="4" height="98.5" fill="#d49484"/><rect x="164.0" y="340.7" width="4" height="98.5" fill="url(#bg)"/><rect x="169.6" y="422.5" width="6.2" height="16.7" fill="#060606"/><rect x="170.7" y="423.7" width="4" height="15.5" fill="#8c6e5c"/><rect x="170.7" y="423.7" width="4" height="15.5" fill="url(#bg)"/><rect x="176.3" y="423.5" width="6.2" height="15.7" fill="#060606"/><rect x="177.4" y="424.7" width="4" height="14.5" fill="#7c78b0"/><rect x="177.4" y="424.7" width="4" height="14.5" fill="url(#bg)"/><rect x="183.0" y="411.5" width="6.2" height="27.7" fill="#060606"/><rect x="184.1" y="412.7" width="4" height="26.5" fill="#b4a0b8"/><rect x="184.1" y="412.7" width="4" height="26.5" fill="url(#bg)"/><rect x="189.7" y="425.5" width="6.2" height="13.7" fill="#060606"/><rect x="190.8" y="426.7" width="4" height="12.5" fill="#8058a0"/><rect x="190.8" y="426.7" width="4" height="12.5" fill="url(#bg)"/><rect x="196.4" y="323.2" width="6.2" height="116.0" fill="#060606"/><rect x="197.5" y="324.4" width="4" height="114.8" fill="#bcc88c"/><rect x="197.5" y="324.4" width="4" height="114.8" fill="url(#bg)"/><rect x="203.1" y="339.5" width="6.2" height="99.7" fill="#060606"/><rect x="204.2" y="340.7" width="4" height="98.5" fill="#d49686"/><rect x="204.2" y="340.7" width="4" height="98.5" fill="url(#bg)"/><rect x="209.8" y="423.5" width="6.2" height="15.7" fill="#060606"/><rect x="210.9" y="424.7" width="4" height="14.5" fill="#787670"/><rect x="210.9" y="424.7" width="4" height="14.5" fill="url(#bg)"/><rect x="216.5" y="422.5" width="6.2" height="16.7" fill="#060606"/><rect x="217.6" y="423.7" width="4" height="15.5" fill="#b47664"/><rect x="217.6" y="423.7" width="4" height="15.5" fill="url(#bg)"/><rect x="223.2" y="420.1" width="6.2" height="19.1" fill="#060606"/><rect x="224.3" y="421.3" width="4" height="17.9" fill="#a87c60"/><rect x="224.3" y="421.3" width="4" height="17.9" fill="url(#bg)"/><rect x="229.9" y="425.5" width="6.2" height="13.7" fill="#060606"/><rect x="231.0" y="426.7" width="4" height="12.5" fill="#c8bc94"/><rect x="231.0" y="426.7" width="4" height="12.5" fill="url(#bg)"/><rect x="236.6" y="412.5" width="6.2" height="26.7" fill="#060606"/><rect x="237.7" y="413.7" width="4" height="25.5" fill="#805a50"/><rect x="237.7" y="413.7" width="4" height="25.5" fill="url(#bg)"/><rect x="243.3" y="319.9" width="6.2" height="119.3" fill="#060606"/><rect x="244.4" y="321.1" width="4" height="118.1" fill="#d2ca90"/><rect x="244.4" y="321.1" width="4" height="118.1" fill="url(#bg)"/><rect x="250.0" y="417.5" width="6.2" height="21.7" fill="#060606"/><rect x="251.1" y="418.7" width="4" height="20.5" fill="#bab088"/><rect x="251.1" y="418.7" width="4" height="20.5" fill="url(#bg)"/><rect x="256.7" y="427.1" width="6.2" height="12.1" fill="#060606"/><rect x="257.8" y="428.3" width="4" height="10.9" fill="#c4b8a0"/><rect x="257.8" y="428.3" width="4" height="10.9" fill="url(#bg)"/><rect x="263.4" y="428.1" width="6.2" height="11.1" fill="#060606"/><rect x="264.5" y="429.3" width="4" height="9.9" fill="#5c7440"/><rect x="264.5" y="429.3" width="4" height="9.9" fill="url(#bg)"/><rect x="270.1" y="421.5" width="6.2" height="17.7" fill="#060606"/><rect x="271.2" y="422.7" width="4" height="16.5" fill="#94785c"/><rect x="271.2" y="422.7" width="4" height="16.5" fill="url(#bg)"/><rect x="276.8" y="380.5" width="6.2" height="58.7" fill="#060606"/><rect x="277.9" y="381.7" width="4" height="57.5" fill="#8c82d2"/><rect x="277.9" y="381.7" width="4" height="57.5" fill="url(#bg)"/><rect x="283.5" y="425.5" width="6.2" height="13.7" fill="#060606"/><rect x="284.6" y="426.7" width="4" height="12.5" fill="#d088a0"/><rect x="284.6" y="426.7" width="4" height="12.5" fill="url(#bg)"/><rect x="290.2" y="335.5" width="6.2" height="103.7" fill="#060606"/><rect x="291.3" y="336.7" width="4" height="102.5" fill="#d69482"/><rect x="291.3" y="336.7" width="4" height="102.5" fill="url(#bg)"/><rect x="296.9" y="391.9" width="6.2" height="47.3" fill="#060606"/><rect x="298.0" y="393.1" width="4" height="46.1" fill="#d8aa80"/><rect x="298.0" y="393.1" width="4" height="46.1" fill="url(#bg)"/><rect x="303.6" y="356.9" width="6.2" height="82.3" fill="#060606"/><rect x="304.7" y="358.1" width="4" height="81.1" fill="#a0be78"/><rect x="304.7" y="358.1" width="4" height="81.1" fill="url(#bg)"/><rect x="310.3" y="348.9" width="6.2" height="90.3" fill="#060606"/><rect x="311.4" y="350.1" width="4" height="89.1" fill="#a8c8dc"/><rect x="311.4" y="350.1" width="4" height="89.1" fill="url(#bg)"/><rect x="317.0" y="410.9" width="6.2" height="28.3" fill="#060606"/><rect x="318.1" y="412.1" width="4" height="27.1" fill="#c8c87e"/><rect x="318.1" y="412.1" width="4" height="27.1" fill="url(#bg)"/><rect x="323.7" y="384.5" width="6.2" height="54.7" fill="#060606"/><rect x="324.8" y="385.7" width="4" height="53.5" fill="#948cd8"/><rect x="324.8" y="385.7" width="4" height="53.5" fill="url(#bg)"/><rect x="330.4" y="424.7" width="6.2" height="14.5" fill="#060606"/><rect x="331.5" y="425.9" width="4" height="13.3" fill="#a070c0"/><rect x="331.5" y="425.9" width="4" height="13.3" fill="url(#bg)"/><rect x="337.1" y="361.5" width="6.2" height="77.7" fill="#060606"/><rect x="338.2" y="362.7" width="4" height="76.5" fill="#d8a0c0"/><rect x="338.2" y="362.7" width="4" height="76.5" fill="url(#bg)"/><rect x="343.8" y="423.5" width="6.2" height="15.7" fill="#060606"/><rect x="344.9" y="424.7" width="4" height="14.5" fill="#a080d4"/><rect x="344.9" y="424.7" width="4" height="14.5" fill="url(#bg)"/><rect x="350.5" y="418.8" width="6.2" height="20.4" fill="#060606"/><rect x="351.6" y="420.0" width="4" height="19.2" fill="#d8aa76"/><rect x="351.6" y="420.0" width="4" height="19.2" fill="url(#bg)"/><rect x="357.2" y="337.1" width="6.2" height="102.1" fill="#060606"/><rect x="358.3" y="338.3" width="4" height="100.9" fill="#d4c496"/><rect x="358.3" y="338.3" width="4" height="100.9" fill="url(#bg)"/><rect x="363.9" y="423.5" width="6.2" height="15.7" fill="#060606"/><rect x="365.0" y="424.7" width="4" height="14.5" fill="#e09468"/><rect x="365.0" y="424.7" width="4" height="14.5" fill="url(#bg)"/><rect x="370.6" y="375.3" width="6.2" height="63.9" fill="#060606"/><rect x="371.7" y="376.5" width="4" height="62.7" fill="#b4d4cc"/><rect x="371.7" y="376.5" width="4" height="62.7" fill="url(#bg)"/><rect x="377.3" y="432.5" width="6.2" height="6.7" fill="#060606"/><rect x="378.4" y="433.7" width="4" height="5.5" fill="#7a4034"/><rect x="378.4" y="433.7" width="4" height="5.5" fill="url(#bg)"/><rect x="384.0" y="319.9" width="6.2" height="119.3" fill="#060606"/><rect x="385.1" y="321.1" width="4" height="118.1" fill="#d6c08c"/><rect x="385.1" y="321.1" width="4" height="118.1" fill="url(#bg)"/><rect x="390.7" y="326.5" width="6.2" height="112.7" fill="#060606"/><rect x="391.8" y="327.7" width="4" height="111.5" fill="#c8be8a"/><rect x="391.8" y="327.7" width="4" height="111.5" fill="url(#bg)"/><rect x="397.4" y="414.8" width="6.2" height="24.4" fill="#060606"/><rect x="398.5" y="416.0" width="4" height="23.2" fill="#e4e4e4"/><rect x="398.5" y="416.0" width="4" height="23.2" fill="url(#bg)"/><rect x="404.1" y="380.5" width="6.2" height="58.7" fill="#060606"/><rect x="405.2" y="381.7" width="4" height="57.5" fill="#e0b4c0"/><rect x="405.2" y="381.7" width="4" height="57.5" fill="url(#bg)"/><rect x="410.8" y="379.5" width="6.2" height="59.7" fill="#060606"/><rect x="411.9" y="380.7" width="4" height="58.5" fill="#beb4e6"/><rect x="411.9" y="380.7" width="4" height="58.5" fill="url(#bg)"/><rect x="417.5" y="420.2" width="6.2" height="19.0" fill="#060606"/><rect x="418.6" y="421.4" width="4" height="17.8" fill="#aa7450"/><rect x="418.6" y="421.4" width="4" height="17.8" fill="url(#bg)"/><rect x="424.2" y="428.1" width="6.2" height="11.1" fill="#060606"/><rect x="425.3" y="429.3" width="4" height="9.9" fill="#e0a870"/><rect x="425.3" y="429.3" width="4" height="9.9" fill="url(#bg)"/><rect x="430.9" y="423.5" width="6.2" height="15.7" fill="#060606"/><rect x="432.0" y="424.7" width="4" height="14.5" fill="#d48070"/><rect x="432.0" y="424.7" width="4" height="14.5" fill="url(#bg)"/><rect x="437.6" y="338.1" width="6.2" height="101.1" fill="#060606"/><rect x="438.7" y="339.3" width="4" height="99.9" fill="#e09c90"/><rect x="438.7" y="339.3" width="4" height="99.9" fill="url(#bg)"/><rect x="444.3" y="421.5" width="6.2" height="17.7" fill="#060606"/><rect x="445.4" y="422.7" width="4" height="16.5" fill="#b47e5a"/><rect x="445.4" y="422.7" width="4" height="16.5" fill="url(#bg)"/><rect x="451.0" y="318.3" width="6.2" height="120.9" fill="#060606"/><rect x="452.1" y="319.5" width="4" height="119.7" fill="#cac48a"/><rect x="452.1" y="319.5" width="4" height="119.7" fill="url(#bg)"/><rect x="457.7" y="424.7" width="6.2" height="14.5" fill="#060606"/><rect x="458.8" y="425.9" width="4" height="13.3" fill="#cac474"/><rect x="458.8" y="425.9" width="4" height="13.3" fill="url(#bg)"/><rect x="464.4" y="421.5" width="6.2" height="17.7" fill="#060606"/><rect x="465.5" y="422.7" width="4" height="16.5" fill="#cc7860"/><rect x="465.5" y="422.7" width="4" height="16.5" fill="url(#bg)"/><rect x="471.1" y="423.5" width="6.2" height="15.7" fill="#060606"/><rect x="472.2" y="424.7" width="4" height="14.5" fill="#cc7c6a"/><rect x="472.2" y="424.7" width="4" height="14.5" fill="url(#bg)"/><rect x="477.8" y="422.7" width="6.2" height="16.5" fill="#060606"/><rect x="478.9" y="423.9" width="4" height="15.3" fill="#a8c06c"/><rect x="478.9" y="423.9" width="4" height="15.3" fill="url(#bg)"/><rect x="484.5" y="423.5" width="6.2" height="15.7" fill="#060606"/><rect x="485.6" y="424.7" width="4" height="14.5" fill="#90b4dc"/><rect x="485.6" y="424.7" width="4" height="14.5" fill="url(#bg)"/><rect x="491.2" y="422.7" width="6.2" height="16.5" fill="#060606"/><rect x="492.3" y="423.9" width="4" height="15.3" fill="#cc7864"/><rect x="492.3" y="423.9" width="4" height="15.3" fill="url(#bg)"/>
<rect x="544.4" y="428.4" width="6.2" height="10.8" fill="#060606"/><rect x="545.5" y="429.6" width="4" height="9.6" fill="#ffffff"/><rect x="545.5" y="429.6" width="4" height="9.6" fill="url(#bg)"/><rect x="551.1" y="426.0" width="6.2" height="13.2" fill="#060606"/><rect x="552.2" y="427.2" width="4" height="12.0" fill="#c8baa0"/><rect x="552.2" y="427.2" width="4" height="12.0" fill="url(#bg)"/><rect x="557.8" y="425.3" width="6.2" height="13.9" fill="#060606"/><rect x="558.9" y="426.5" width="4" height="12.7" fill="#c8aa8c"/><rect x="558.9" y="426.5" width="4" height="12.7" fill="url(#bg)"/><rect x="565.1" y="438.2" width="5" height="1.0" fill="#a8b47e" fill-opacity=".7"/><rect x="571.2" y="431.0" width="6.2" height="8.2" fill="#060606"/><rect x="572.3" y="432.2" width="4" height="7.0" fill="#66784a"/><rect x="572.3" y="432.2" width="4" height="7.0" fill="url(#bg)"/><rect x="577.9" y="431.0" width="6.2" height="8.2" fill="#060606"/><rect x="579.0" y="432.2" width="4" height="7.0" fill="#6a8c8c"/><rect x="579.0" y="432.2" width="4" height="7.0" fill="url(#bg)"/><rect x="584.6" y="436.0" width="6.2" height="3.2" fill="#060606"/><rect x="585.7" y="437.2" width="4" height="2.0" fill="#d49484"/><rect x="585.7" y="437.2" width="4" height="2.0" fill="url(#bg)"/><rect x="597.9" y="433.0" width="6.2" height="6.2" fill="#060606"/><rect x="599.0" y="434.2" width="4" height="5.0" fill="#7c78b0"/><rect x="599.0" y="434.2" width="4" height="5.0" fill="url(#bg)"/><rect x="604.6" y="428.4" width="6.2" height="10.8" fill="#060606"/><rect x="605.7" y="429.6" width="4" height="9.6" fill="#b4a0b8"/><rect x="605.7" y="429.6" width="4" height="9.6" fill="url(#bg)"/><rect x="611.3" y="432.0" width="6.2" height="7.2" fill="#060606"/><rect x="612.4" y="433.2" width="4" height="6.0" fill="#8058a0"/><rect x="612.4" y="433.2" width="4" height="6.0" fill="url(#bg)"/><rect x="618.6" y="438.2" width="5" height="1.0" fill="#bcc88c" fill-opacity=".7"/><rect x="624.7" y="434.0" width="6.2" height="5.2" fill="#060606"/><rect x="625.8" y="435.2" width="4" height="4.0" fill="#d49686"/><rect x="625.8" y="435.2" width="4" height="4.0" fill="url(#bg)"/><rect x="631.4" y="432.0" width="6.2" height="7.2" fill="#060606"/><rect x="632.5" y="433.2" width="4" height="6.0" fill="#787670"/><rect x="632.5" y="433.2" width="4" height="6.0" fill="url(#bg)"/><rect x="638.1" y="436.0" width="6.2" height="3.2" fill="#060606"/><rect x="639.2" y="437.2" width="4" height="2.0" fill="#b47664"/><rect x="639.2" y="437.2" width="4" height="2.0" fill="url(#bg)"/><rect x="644.8" y="435.5" width="6.2" height="3.7" fill="#060606"/><rect x="645.9" y="436.7" width="4" height="2.5" fill="#a87c60"/><rect x="645.9" y="436.7" width="4" height="2.5" fill="url(#bg)"/><rect x="651.5" y="426.0" width="6.2" height="13.2" fill="#060606"/><rect x="652.6" y="427.2" width="4" height="12.0" fill="#c8bc94"/><rect x="652.6" y="427.2" width="4" height="12.0" fill="url(#bg)"/><rect x="658.2" y="434.0" width="6.2" height="5.2" fill="#060606"/><rect x="659.3" y="435.2" width="4" height="4.0" fill="#805a50"/><rect x="659.3" y="435.2" width="4" height="4.0" fill="url(#bg)"/><rect x="664.9" y="434.0" width="6.2" height="5.2" fill="#060606"/><rect x="666.0" y="435.2" width="4" height="4.0" fill="#d2ca90"/><rect x="666.0" y="435.2" width="4" height="4.0" fill="url(#bg)"/><rect x="672.2" y="438.2" width="5" height="1.0" fill="#bab088" fill-opacity=".7"/><rect x="678.3" y="429.6" width="6.2" height="9.6" fill="#060606"/><rect x="679.4" y="430.8" width="4" height="8.4" fill="#c4b8a0"/><rect x="679.4" y="430.8" width="4" height="8.4" fill="url(#bg)"/><rect x="685.5" y="438.2" width="5" height="1.0" fill="#5c7440" fill-opacity=".7"/><rect x="692.2" y="438.2" width="5" height="1.0" fill="#94785c" fill-opacity=".7"/><rect x="698.9" y="438.2" width="5" height="1.0" fill="#8c82d2" fill-opacity=".7"/><rect x="705.0" y="432.0" width="6.2" height="7.2" fill="#060606"/><rect x="706.1" y="433.2" width="4" height="6.0" fill="#d088a0"/><rect x="706.1" y="433.2" width="4" height="6.0" fill="url(#bg)"/><rect x="711.7" y="436.5" width="6.2" height="2.7" fill="#060606"/><rect x="712.8" y="437.7" width="4" height="1.5" fill="#d69482"/><rect x="712.8" y="437.7" width="4" height="1.5" fill="url(#bg)"/><rect x="718.4" y="433.0" width="6.2" height="6.2" fill="#060606"/><rect x="719.5" y="434.2" width="4" height="5.0" fill="#d8aa80"/><rect x="719.5" y="434.2" width="4" height="5.0" fill="url(#bg)"/><rect x="725.1" y="436.5" width="6.2" height="2.7" fill="#060606"/><rect x="726.2" y="437.7" width="4" height="1.5" fill="#a0be78"/><rect x="726.2" y="437.7" width="4" height="1.5" fill="url(#bg)"/><rect x="732.4" y="437.7" width="5" height="1.5" fill="#a8c8dc" fill-opacity=".7"/><rect x="751.9" y="433.0" width="6.2" height="6.2" fill="#060606"/><rect x="753.0" y="434.2" width="4" height="5.0" fill="#a070c0"/><rect x="753.0" y="434.2" width="4" height="5.0" fill="url(#bg)"/><rect x="758.6" y="431.0" width="6.2" height="8.2" fill="#060606"/><rect x="759.7" y="432.2" width="4" height="7.0" fill="#d8a0c0"/><rect x="759.7" y="432.2" width="4" height="7.0" fill="url(#bg)"/><rect x="765.3" y="430.0" width="6.2" height="9.2" fill="#060606"/><rect x="766.4" y="431.2" width="4" height="8.0" fill="#a080d4"/><rect x="766.4" y="431.2" width="4" height="8.0" fill="url(#bg)"/><rect x="772.0" y="428.4" width="6.2" height="10.8" fill="#060606"/><rect x="773.1" y="429.6" width="4" height="9.6" fill="#d8aa76"/><rect x="773.1" y="429.6" width="4" height="9.6" fill="url(#bg)"/><rect x="778.6" y="433.0" width="6.2" height="6.2" fill="#060606"/><rect x="779.7" y="434.2" width="4" height="5.0" fill="#d4c496"/><rect x="779.7" y="434.2" width="4" height="5.0" fill="url(#bg)"/><rect x="785.3" y="434.0" width="6.2" height="5.2" fill="#060606"/><rect x="786.4" y="435.2" width="4" height="4.0" fill="#e09468"/><rect x="786.4" y="435.2" width="4" height="4.0" fill="url(#bg)"/><rect x="798.7" y="435.0" width="6.2" height="4.2" fill="#060606"/><rect x="799.8" y="436.2" width="4" height="3.0" fill="#7a4034"/><rect x="799.8" y="436.2" width="4" height="3.0" fill="url(#bg)"/><rect x="805.4" y="427.0" width="6.2" height="12.2" fill="#060606"/><rect x="806.5" y="428.2" width="4" height="11.0" fill="#d6c08c"/><rect x="806.5" y="428.2" width="4" height="11.0" fill="url(#bg)"/><rect x="812.1" y="432.0" width="6.2" height="7.2" fill="#060606"/><rect x="813.2" y="433.2" width="4" height="6.0" fill="#c8be8a"/><rect x="813.2" y="433.2" width="4" height="6.0" fill="url(#bg)"/><rect x="818.8" y="415.0" width="6.2" height="24.2" fill="#060606"/><rect x="819.9" y="416.2" width="4" height="23.0" fill="#e4e4e4"/><rect x="819.9" y="416.2" width="4" height="23.0" fill="url(#bg)"/><rect x="825.5" y="425.0" width="6.2" height="14.2" fill="#060606"/><rect x="826.6" y="426.2" width="4" height="13.0" fill="#e0b4c0"/><rect x="826.6" y="426.2" width="4" height="13.0" fill="url(#bg)"/><rect x="832.2" y="431.0" width="6.2" height="8.2" fill="#060606"/><rect x="833.3" y="432.2" width="4" height="7.0" fill="#beb4e6"/><rect x="833.3" y="432.2" width="4" height="7.0" fill="url(#bg)"/><rect x="839.5" y="438.2" width="5" height="1.0" fill="#aa7450" fill-opacity=".7"/><rect x="845.6" y="431.0" width="6.2" height="8.2" fill="#060606"/><rect x="846.7" y="432.2" width="4" height="7.0" fill="#e0a870"/><rect x="846.7" y="432.2" width="4" height="7.0" fill="url(#bg)"/><rect x="852.9" y="438.2" width="5" height="1.0" fill="#d48070" fill-opacity=".7"/><rect x="859.0" y="436.5" width="6.2" height="2.7" fill="#060606"/><rect x="860.1" y="437.7" width="4" height="1.5" fill="#e09c90"/><rect x="860.1" y="437.7" width="4" height="1.5" fill="url(#bg)"/><rect x="872.3" y="431.0" width="6.2" height="8.2" fill="#060606"/><rect x="873.4" y="432.2" width="4" height="7.0" fill="#cac48a"/><rect x="873.4" y="432.2" width="4" height="7.0" fill="url(#bg)"/><rect x="879.0" y="436.5" width="6.2" height="2.7" fill="#060606"/><rect x="880.1" y="437.7" width="4" height="1.5" fill="#cac474"/><rect x="880.1" y="437.7" width="4" height="1.5" fill="url(#bg)"/><rect x="885.7" y="432.0" width="6.2" height="7.2" fill="#060606"/><rect x="886.8" y="433.2" width="4" height="6.0" fill="#cc7860"/><rect x="886.8" y="433.2" width="4" height="6.0" fill="url(#bg)"/><rect x="893.0" y="437.7" width="5" height="1.5" fill="#cc7c6a" fill-opacity=".7"/><rect x="899.7" y="438.2" width="5" height="1.0" fill="#a8c06c" fill-opacity=".7"/><rect x="905.8" y="434.0" width="6.2" height="5.2" fill="#060606"/><rect x="906.9" y="435.2" width="4" height="4.0" fill="#90b4dc"/><rect x="906.9" y="435.2" width="4" height="4.0" fill="url(#bg)"/><rect x="912.5" y="432.0" width="6.2" height="7.2" fill="#060606"/><rect x="913.6" y="433.2" width="4" height="6.0" fill="#cc7864"/><rect x="913.6" y="433.2" width="4" height="6.0" fill="url(#bg)"/>
<line x1="123.5" y1="439.5" x2="498" y2="439.5" stroke="#999" stroke-width="1.5"/>
<line x1="544" y1="439.5" x2="918.5" y2="439.5" stroke="#999" stroke-width="1.5"/>
<text x="153" y="129.6" font-size="13.8" fill="#fff" textLength="52.8" lengthAdjust="spacingAndGlyphs" stroke="#fff" stroke-width="0.25">Avg: 2,13</text>
<text x="267.3" y="126.7" font-size="13.8" fill="#ddd" textLength="67.5" lengthAdjust="spacingAndGlyphs" stroke="#ddd" stroke-width="0.25">DeltaE 2000</text>
<text x="405" y="129.6" font-size="13.8" fill="#fff" textLength="56.4" lengthAdjust="spacingAndGlyphs" stroke="#fff" stroke-width="0.25">Max: 5,91</text>
<text x="574.4" y="129" font-size="13.8" fill="#fff" textLength="52.6" lengthAdjust="spacingAndGlyphs" stroke="#fff" stroke-width="0.25">Avg: 0,32</text>
<text x="688.6" y="126.7" font-size="13.8" fill="#ddd" textLength="67" lengthAdjust="spacingAndGlyphs" stroke="#ddd" stroke-width="0.25">DeltaE 2000</text>
<text x="826.4" y="129" font-size="13.8" fill="#fff" textLength="56.6" lengthAdjust="spacingAndGlyphs" stroke="#fff" stroke-width="0.25">Max: 1,23</text>
<text x="197.7" y="467.8" font-size="21.5" fill="#fff" textLength="188.5" lengthAdjust="spacingAndGlyphs" stroke="#fff" stroke-width="0.25">w/ Luminance Error</text>
<text x="637.3" y="467.8" font-size="21.5" fill="#fff" textLength="199.2" lengthAdjust="spacingAndGlyphs" stroke="#fff" stroke-width="0.25">w/o Luminance Error</text>
<text x="700" y="98.6" font-size="22.5" fill="#fff" textLength="114" lengthAdjust="spacingAndGlyphs" stroke="#fff" stroke-width="0.25">dE Formula:</text>
<rect x="821.2" y="77" width="113.6" height="25.5" fill="url(#dd)"/>
<text x="825.6" y="97.2" font-size="16.5" fill="#fff" textLength="33.6" lengthAdjust="spacingAndGlyphs" stroke="#fff" stroke-width="0.25">2000</text>
<path d="M920.3 88 h9 l-4.5 5z" fill="#000"/>
<text x="1177" y="39.2" font-size="13" fill="#ddd" textLength="71.3" lengthAdjust="spacingAndGlyphs" stroke="#ddd" stroke-width="0.25">CIE 1976 u'v'</text>
<line x1="967.6" y1="461" x2="967.6" y2="465.5" stroke="#ddd" stroke-width="1.4"/>
<text x="967.6" y="479.6" font-size="13" fill="#ddd" text-anchor="middle" stroke="#ddd" stroke-width="0.25">0</text>
<line x1="1008.8" y1="461" x2="1008.8" y2="465.5" stroke="#ddd" stroke-width="1.4"/>
<text x="1008.8" y="479.6" font-size="13" fill="#ddd" text-anchor="middle" stroke="#ddd" stroke-width="0.25">0,05</text>
<line x1="1049.9" y1="461" x2="1049.9" y2="465.5" stroke="#ddd" stroke-width="1.4"/>
<text x="1049.9" y="479.6" font-size="13" fill="#ddd" text-anchor="middle" stroke="#ddd" stroke-width="0.25">0,1</text>
<line x1="1091.1" y1="461" x2="1091.1" y2="465.5" stroke="#ddd" stroke-width="1.4"/>
<text x="1091.1" y="479.6" font-size="13" fill="#ddd" text-anchor="middle" stroke="#ddd" stroke-width="0.25">0,15</text>
<line x1="1132.3" y1="461" x2="1132.3" y2="465.5" stroke="#ddd" stroke-width="1.4"/>
<text x="1132.3" y="479.6" font-size="13" fill="#ddd" text-anchor="middle" stroke="#ddd" stroke-width="0.25">0,2</text>
<line x1="1173.4" y1="461" x2="1173.4" y2="465.5" stroke="#ddd" stroke-width="1.4"/>
<text x="1173.4" y="479.6" font-size="13" fill="#ddd" text-anchor="middle" stroke="#ddd" stroke-width="0.25">0,25</text>
<line x1="1214.6" y1="461" x2="1214.6" y2="465.5" stroke="#ddd" stroke-width="1.4"/>
<text x="1214.6" y="479.6" font-size="13" fill="#ddd" text-anchor="middle" stroke="#ddd" stroke-width="0.25">0,3</text>
<line x1="1255.8" y1="461" x2="1255.8" y2="465.5" stroke="#ddd" stroke-width="1.4"/>
<text x="1255.8" y="479.6" font-size="13" fill="#ddd" text-anchor="middle" stroke="#ddd" stroke-width="0.25">0,35</text>
<line x1="1296.9" y1="461" x2="1296.9" y2="465.5" stroke="#ddd" stroke-width="1.4"/>
<text x="1296.9" y="479.6" font-size="13" fill="#ddd" text-anchor="middle" stroke="#ddd" stroke-width="0.25">0,4</text>
<line x1="1338.1" y1="461" x2="1338.1" y2="465.5" stroke="#ddd" stroke-width="1.4"/>
<text x="1338.1" y="479.6" font-size="13" fill="#ddd" text-anchor="middle" stroke="#ddd" stroke-width="0.25">0,45</text>
<line x1="1379.2" y1="461" x2="1379.2" y2="465.5" stroke="#ddd" stroke-width="1.4"/>
<text x="1379.2" y="479.6" font-size="13" fill="#ddd" text-anchor="middle" stroke="#ddd" stroke-width="0.25">0,5</text>
<line x1="1420.4" y1="461" x2="1420.4" y2="465.5" stroke="#ddd" stroke-width="1.4"/>
<text x="1420.4" y="479.6" font-size="13" fill="#ddd" text-anchor="middle" stroke="#ddd" stroke-width="0.25">0,55</text>
<line x1="1461.6" y1="461" x2="1461.6" y2="465.5" stroke="#ddd" stroke-width="1.4"/>
<text x="1461.6" y="479.6" font-size="13" fill="#ddd" text-anchor="middle" stroke="#ddd" stroke-width="0.25">0,6</text>
<line x1="962.5" y1="461.0" x2="967" y2="461.0" stroke="#ddd" stroke-width="1.4"/>
<text x="962" y="465.7" font-size="13" fill="#ddd" text-anchor="end" stroke="#ddd" stroke-width="0.25">0</text>
<line x1="962.5" y1="426.3" x2="967" y2="426.3" stroke="#ddd" stroke-width="1.4"/>
<text x="962" y="431.0" font-size="13" fill="#ddd" text-anchor="end" stroke="#ddd" stroke-width="0.25">0,05</text>
<line x1="962.5" y1="391.6" x2="967" y2="391.6" stroke="#ddd" stroke-width="1.4"/>
<text x="962" y="396.3" font-size="13" fill="#ddd" text-anchor="end" stroke="#ddd" stroke-width="0.25">0,1</text>
<line x1="962.5" y1="356.9" x2="967" y2="356.9" stroke="#ddd" stroke-width="1.4"/>
<text x="962" y="361.6" font-size="13" fill="#ddd" text-anchor="end" stroke="#ddd" stroke-width="0.25">0,15</text>
<line x1="962.5" y1="322.2" x2="967" y2="322.2" stroke="#ddd" stroke-width="1.4"/>
<text x="962" y="326.9" font-size="13" fill="#ddd" text-anchor="end" stroke="#ddd" stroke-width="0.25">0,2</text>
<line x1="962.5" y1="287.5" x2="967" y2="287.5" stroke="#ddd" stroke-width="1.4"/>
<text x="962" y="292.2" font-size="13" fill="#ddd" text-anchor="end" stroke="#ddd" stroke-width="0.25">0,25</text>
<line x1="962.5" y1="252.8" x2="967" y2="252.8" stroke="#ddd" stroke-width="1.4"/>
<text x="962" y="257.5" font-size="13" fill="#ddd" text-anchor="end" stroke="#ddd" stroke-width="0.25">0,3</text>
<line x1="962.5" y1="218.1" x2="967" y2="218.1" stroke="#ddd" stroke-width="1.4"/>
<text x="962" y="222.8" font-size="13" fill="#ddd" text-anchor="end" stroke="#ddd" stroke-width="0.25">0,35</text>
<line x1="962.5" y1="183.4" x2="967" y2="183.4" stroke="#ddd" stroke-width="1.4"/>
<text x="962" y="188.1" font-size="13" fill="#ddd" text-anchor="end" stroke="#ddd" stroke-width="0.25">0,4</text>
<line x1="962.5" y1="148.7" x2="967" y2="148.7" stroke="#ddd" stroke-width="1.4"/>
<text x="962" y="153.4" font-size="13" fill="#ddd" text-anchor="end" stroke="#ddd" stroke-width="0.25">0,45</text>
<line x1="962.5" y1="114.0" x2="967" y2="114.0" stroke="#ddd" stroke-width="1.4"/>
<text x="962" y="118.7" font-size="13" fill="#ddd" text-anchor="end" stroke="#ddd" stroke-width="0.25">0,5</text>
<line x1="962.5" y1="79.3" x2="967" y2="79.3" stroke="#ddd" stroke-width="1.4"/>
<text x="962" y="84.0" font-size="13" fill="#ddd" text-anchor="end" stroke="#ddd" stroke-width="0.25">0,55</text>
<rect x="1230" y="428" width="253" height="28.3" fill="#333"/>
<text x="1231" y="450.2" font-size="21" fill="#fff" textLength="246.5" lengthAdjust="spacingAndGlyphs" stroke="#fff" stroke-width="0.25">RGB Triplet: 235, 235, 235</text>
<rect x="104.5" y="490.5" width="1391.2" height="194.5" fill="#262626"/>
<rect x="105.5" y="491.6" width="1389.2" height="24.4" fill="url(#th)"/>
<rect x="105.5" y="516" width="1389.2" height="21.799999999999955" fill="#3b3b3b"/>
<rect x="105.5" y="537.8" width="1389.2" height="22.200000000000045" fill="#7a7a7a"/>
<rect x="105.5" y="560" width="1389.2" height="22" fill="#3b3b3b"/>
<rect x="105.5" y="582" width="1389.2" height="22" fill="#7a7a7a"/>
<rect x="105.5" y="604" width="1389.2" height="21.899999999999977" fill="#3b3b3b"/>
<rect x="105.5" y="625.9" width="1389.2" height="21.899999999999977" fill="#7a7a7a"/>
<rect x="105.5" y="647.8" width="1389.2" height="21.800000000000068" fill="#3b3b3b"/>
<g clip-path="url(#tc)">
<text x="237.5" y="508.7" font-size="13.6" fill="#fff" textLength="33.4" lengthAdjust="spacingAndGlyphs" stroke="#fff" stroke-width="0.25">White</text>
<text x="300.1" y="508.7" font-size="13.6" fill="#fff" textLength="39.6" lengthAdjust="spacingAndGlyphs" stroke="#fff" stroke-width="0.25">Color 1</text>
<text x="362.5" y="508.7" font-size="13.6" fill="#fff" textLength="39.6" lengthAdjust="spacingAndGlyphs" stroke="#fff" stroke-width="0.25">Color 2</text>
<text x="425.2" y="508.7" font-size="13.6" fill="#fff" textLength="39.6" lengthAdjust="spacingAndGlyphs" stroke="#fff" stroke-width="0.25">Color 3</text>
<text x="483.6" y="508.7" font-size="13.6" fill="#fff" textLength="39.6" lengthAdjust="spacingAndGlyphs" stroke="#fff" stroke-width="0.25">Color 4</text>
<text x="538.1" y="508.7" font-size="13.6" fill="#fff" textLength="39.6" lengthAdjust="spacingAndGlyphs" stroke="#fff" stroke-width="0.25">Color 5</text>
<text x="596.7" y="508.7" font-size="13.6" fill="#fff" textLength="39.6" lengthAdjust="spacingAndGlyphs" stroke="#fff" stroke-width="0.25">Color 6</text>
<text x="655.3" y="508.7" font-size="13.6" fill="#fff" textLength="39.6" lengthAdjust="spacingAndGlyphs" stroke="#fff" stroke-width="0.25">Color 7</text>
<text x="710.0" y="508.7" font-size="13.6" fill="#fff" textLength="39.6" lengthAdjust="spacingAndGlyphs" stroke="#fff" stroke-width="0.25">Color 8</text>
<text x="768.4" y="508.7" font-size="13.6" fill="#fff" textLength="39.6" lengthAdjust="spacingAndGlyphs" stroke="#fff" stroke-width="0.25">Color 9</text>
<text x="823.0" y="508.7" font-size="13.6" fill="#fff" textLength="47.2" lengthAdjust="spacingAndGlyphs" stroke="#fff" stroke-width="0.25">Color 10</text>
<text x="881.6" y="508.7" font-size="13.6" fill="#fff" textLength="47.2" lengthAdjust="spacingAndGlyphs" stroke="#fff" stroke-width="0.25">Color 11</text>
<text x="943.9" y="508.7" font-size="13.6" fill="#fff" textLength="47.2" lengthAdjust="spacingAndGlyphs" stroke="#fff" stroke-width="0.25">Color 12</text>
<text x="1002.3" y="508.7" font-size="13.6" fill="#fff" textLength="47.2" lengthAdjust="spacingAndGlyphs" stroke="#fff" stroke-width="0.25">Color 13</text>
<text x="1057.1" y="508.7" font-size="13.6" fill="#fff" textLength="47.2" lengthAdjust="spacingAndGlyphs" stroke="#fff" stroke-width="0.25">Color 14</text>
<text x="1111.8" y="508.7" font-size="13.6" fill="#fff" textLength="47.2" lengthAdjust="spacingAndGlyphs" stroke="#fff" stroke-width="0.25">Color 15</text>
<text x="1170.4" y="508.7" font-size="13.6" fill="#fff" textLength="47.2" lengthAdjust="spacingAndGlyphs" stroke="#fff" stroke-width="0.25">Color 16</text>
<text x="1229.0" y="508.7" font-size="13.6" fill="#fff" textLength="47.2" lengthAdjust="spacingAndGlyphs" stroke="#fff" stroke-width="0.25">Color 17</text>
<text x="1287.4" y="508.7" font-size="13.6" fill="#fff" textLength="47.2" lengthAdjust="spacingAndGlyphs" stroke="#fff" stroke-width="0.25">Color 18</text>
<text x="1349.3" y="508.7" font-size="13.6" fill="#fff" textLength="47.2" lengthAdjust="spacingAndGlyphs" stroke="#fff" stroke-width="0.25">Color 19</text>
<text x="1411.2" y="508.7" font-size="13.6" fill="#fff" textLength="47.2" lengthAdjust="spacingAndGlyphs" stroke="#fff" stroke-width="0.25">Color 20</text>
<text x="1469.8" y="508.7" font-size="13.6" fill="#fff" textLength="47.2" lengthAdjust="spacingAndGlyphs" stroke="#fff" stroke-width="0.25">Color 21</text>
<text x="116" y="531.7" font-size="13.6" fill="#fff" textLength="51" lengthAdjust="spacingAndGlyphs" font-weight="bold">x: CIE31</text>
<text x="223" y="531.7" font-size="13.4" fill="#f4f4f4" textLength="39.8" lengthAdjust="spacingAndGlyphs" stroke="#f4f4f4" stroke-width="0.25">0,3133</text>
<text x="292.4" y="531.7" font-size="13.4" fill="#f4f4f4" textLength="39.8" lengthAdjust="spacingAndGlyphs" stroke="#f4f4f4" stroke-width="0.25">0,4275</text>
<text x="354.4" y="531.7" font-size="13.4" fill="#f4f4f4" textLength="39.8" lengthAdjust="spacingAndGlyphs" stroke="#f4f4f4" stroke-width="0.25">0,4795</text>
<text x="417.2" y="531.7" font-size="13.4" fill="#f4f4f4" textLength="39.8" lengthAdjust="spacingAndGlyphs" stroke="#f4f4f4" stroke-width="0.25">0,3657</text>
<text x="479.75" y="531.7" font-size="13.4" fill="#f4f4f4" textLength="39.8" lengthAdjust="spacingAndGlyphs" stroke="#f4f4f4" stroke-width="0.25">0,3340</text>
<text x="534" y="531.7" font-size="13.4" fill="#f4f4f4" textLength="39.8" lengthAdjust="spacingAndGlyphs" stroke="#f4f4f4" stroke-width="0.25">0,2286</text>
<text x="588.7" y="531.7" font-size="13.4" fill="#f4f4f4" textLength="39.8" lengthAdjust="spacingAndGlyphs" stroke="#f4f4f4" stroke-width="0.25">0,5687</text>
<text x="651.25" y="531.7" font-size="13.4" fill="#f4f4f4" textLength="39.8" lengthAdjust="spacingAndGlyphs" stroke="#f4f4f4" stroke-width="0.25">0,4505</text>
<text x="706" y="531.7" font-size="13.4" fill="#f4f4f4" textLength="39.8" lengthAdjust="spacingAndGlyphs" stroke="#f4f4f4" stroke-width="0.25">0,2472</text>
<text x="760.6" y="531.7" font-size="13.4" fill="#f4f4f4" textLength="39.8" lengthAdjust="spacingAndGlyphs" stroke="#f4f4f4" stroke-width="0.25">0,3423</text>
<text x="822.75" y="531.7" font-size="13.4" fill="#f4f4f4" textLength="39.8" lengthAdjust="spacingAndGlyphs" stroke="#f4f4f4" stroke-width="0.25">0,2760</text>
<text x="877.4" y="531.7" font-size="13.4" fill="#f4f4f4" textLength="39.8" lengthAdjust="spacingAndGlyphs" stroke="#f4f4f4" stroke-width="0.25">0,3788</text>
<text x="940" y="531.7" font-size="13.4" fill="#f4f4f4" textLength="39.8" lengthAdjust="spacingAndGlyphs" stroke="#f4f4f4" stroke-width="0.25">0,5605</text>
<text x="1002" y="531.7" font-size="13.4" fill="#f4f4f4" textLength="39.8" lengthAdjust="spacingAndGlyphs" stroke="#f4f4f4" stroke-width="0.25">0,3419</text>
<text x="1056.8" y="531.7" font-size="13.4" fill="#f4f4f4" textLength="39.8" lengthAdjust="spacingAndGlyphs" stroke="#f4f4f4" stroke-width="0.25">0,5819</text>
<text x="1111.5" y="531.7" font-size="13.4" fill="#f4f4f4" textLength="39.8" lengthAdjust="spacingAndGlyphs" stroke="#f4f4f4" stroke-width="0.25">0,5512</text>
<text x="1166.2" y="531.7" font-size="13.4" fill="#f4f4f4" textLength="39.8" lengthAdjust="spacingAndGlyphs" stroke="#f4f4f4" stroke-width="0.25">0,4257</text>
<text x="1228.75" y="531.7" font-size="13.4" fill="#f4f4f4" textLength="39.8" lengthAdjust="spacingAndGlyphs" stroke="#f4f4f4" stroke-width="0.25">0,4847</text>
<text x="1283.4" y="531.7" font-size="13.4" fill="#f4f4f4" textLength="39.8" lengthAdjust="spacingAndGlyphs" stroke="#f4f4f4" stroke-width="0.25">0,4370</text>
<text x="1345.6" y="531.7" font-size="13.4" fill="#f4f4f4" textLength="39.8" lengthAdjust="spacingAndGlyphs" stroke="#f4f4f4" stroke-width="0.25">0,4259</text>
<text x="1407.25" y="531.7" font-size="13.4" fill="#f4f4f4" textLength="39.8" lengthAdjust="spacingAndGlyphs" stroke="#f4f4f4" stroke-width="0.25">0,3901</text>
<text x="1469.4" y="531.7" font-size="13.4" fill="#f4f4f4" textLength="39.8" lengthAdjust="spacingAndGlyphs" stroke="#f4f4f4" stroke-width="0.25">0,3512</text>
<text x="116" y="553.5" font-size="13.6" fill="#fff" textLength="51" lengthAdjust="spacingAndGlyphs" font-weight="bold">y: CIE31</text>
<text x="223" y="553.5" font-size="13.4" fill="#f4f4f4" textLength="39.8" lengthAdjust="spacingAndGlyphs" stroke="#f4f4f4" stroke-width="0.25">0,3290</text>
<text x="292.4" y="553.5" font-size="13.4" fill="#f4f4f4" textLength="39.8" lengthAdjust="spacingAndGlyphs" stroke="#f4f4f4" stroke-width="0.25">0,3920</text>
<text x="354.4" y="553.5" font-size="13.4" fill="#f4f4f4" textLength="39.8" lengthAdjust="spacingAndGlyphs" stroke="#f4f4f4" stroke-width="0.25">0,3816</text>
<text x="417.2" y="553.5" font-size="13.4" fill="#f4f4f4" textLength="39.8" lengthAdjust="spacingAndGlyphs" stroke="#f4f4f4" stroke-width="0.25">0,4980</text>
<text x="479.75" y="553.5" font-size="13.4" fill="#f4f4f4" textLength="39.8" lengthAdjust="spacingAndGlyphs" stroke="#f4f4f4" stroke-width="0.25">0,5170</text>
<text x="534" y="553.5" font-size="13.4" fill="#f4f4f4" textLength="39.8" lengthAdjust="spacingAndGlyphs" stroke="#f4f4f4" stroke-width="0.25">0,3177</text>
<text x="588.7" y="553.5" font-size="13.4" fill="#f4f4f4" textLength="39.8" lengthAdjust="spacingAndGlyphs" stroke="#f4f4f4" stroke-width="0.25">0,3270</text>
<text x="651.25" y="553.5" font-size="13.4" fill="#f4f4f4" textLength="39.8" lengthAdjust="spacingAndGlyphs" stroke="#f4f4f4" stroke-width="0.25">0,3539</text>
<text x="706" y="553.5" font-size="13.4" fill="#f4f4f4" textLength="39.8" lengthAdjust="spacingAndGlyphs" stroke="#f4f4f4" stroke-width="0.25">0,2159</text>
<text x="760.6" y="553.5" font-size="13.4" fill="#f4f4f4" textLength="39.8" lengthAdjust="spacingAndGlyphs" stroke="#f4f4f4" stroke-width="0.25">0,2763</text>
<text x="822.75" y="553.5" font-size="13.4" fill="#f4f4f4" textLength="39.8" lengthAdjust="spacingAndGlyphs" stroke="#f4f4f4" stroke-width="0.25">0,1619</text>
<text x="877.4" y="553.5" font-size="13.4" fill="#f4f4f4" textLength="39.8" lengthAdjust="spacingAndGlyphs" stroke="#f4f4f4" stroke-width="0.25">0,5075</text>
<text x="940" y="553.5" font-size="13.4" fill="#f4f4f4" textLength="39.8" lengthAdjust="spacingAndGlyphs" stroke="#f4f4f4" stroke-width="0.25">0,3309</text>
<text x="1002" y="553.5" font-size="13.4" fill="#f4f4f4" textLength="39.8" lengthAdjust="spacingAndGlyphs" stroke="#f4f4f4" stroke-width="0.25">0,3602</text>
<text x="1056.8" y="553.5" font-size="13.4" fill="#f4f4f4" textLength="39.8" lengthAdjust="spacingAndGlyphs" stroke="#f4f4f4" stroke-width="0.25">0,3288</text>
<text x="1111.5" y="553.5" font-size="13.4" fill="#f4f4f4" textLength="39.8" lengthAdjust="spacingAndGlyphs" stroke="#f4f4f4" stroke-width="0.25">0,3602</text>
<text x="1166.2" y="553.5" font-size="13.4" fill="#f4f4f4" textLength="39.8" lengthAdjust="spacingAndGlyphs" stroke="#f4f4f4" stroke-width="0.25">0,4162</text>
<text x="1228.75" y="553.5" font-size="13.4" fill="#f4f4f4" textLength="39.8" lengthAdjust="spacingAndGlyphs" stroke="#f4f4f4" stroke-width="0.25">0,3344</text>
<text x="1283.4" y="553.5" font-size="13.4" fill="#f4f4f4" textLength="39.8" lengthAdjust="spacingAndGlyphs" stroke="#f4f4f4" stroke-width="0.25">0,4505</text>
<text x="1345.6" y="553.5" font-size="13.4" fill="#f4f4f4" textLength="39.8" lengthAdjust="spacingAndGlyphs" stroke="#f4f4f4" stroke-width="0.25">0,4218</text>
<text x="1407.25" y="553.5" font-size="13.4" fill="#f4f4f4" textLength="39.8" lengthAdjust="spacingAndGlyphs" stroke="#f4f4f4" stroke-width="0.25">0,3883</text>
<text x="1469.4" y="553.5" font-size="13.4" fill="#f4f4f4" textLength="39.8" lengthAdjust="spacingAndGlyphs" stroke="#f4f4f4" stroke-width="0.25">0,5062</text>
<text x="116" y="575.7" font-size="13.6" fill="#fff" textLength="9" lengthAdjust="spacingAndGlyphs" font-weight="bold">Y</text>
<text x="223" y="575.7" font-size="13.4" fill="#f4f4f4" textLength="61.5" lengthAdjust="spacingAndGlyphs" stroke="#f4f4f4" stroke-width="0.25">2311,5456</text>
<text x="292.4" y="575.7" font-size="13.4" fill="#f4f4f4" textLength="54.2" lengthAdjust="spacingAndGlyphs" stroke="#f4f4f4" stroke-width="0.25">337,1506</text>
<text x="354.4" y="575.7" font-size="13.4" fill="#f4f4f4" textLength="54.2" lengthAdjust="spacingAndGlyphs" stroke="#f4f4f4" stroke-width="0.25">234,8741</text>
<text x="417.2" y="575.7" font-size="13.4" fill="#f4f4f4" textLength="54.2" lengthAdjust="spacingAndGlyphs" stroke="#f4f4f4" stroke-width="0.25">220,2036</text>
<text x="479.75" y="575.7" font-size="13.4" fill="#f4f4f4" textLength="47.0" lengthAdjust="spacingAndGlyphs" stroke="#f4f4f4" stroke-width="0.25">18,3974</text>
<text x="534" y="575.7" font-size="13.4" fill="#f4f4f4" textLength="47.0" lengthAdjust="spacingAndGlyphs" stroke="#f4f4f4" stroke-width="0.25">35,5284</text>
<text x="588.7" y="575.7" font-size="13.4" fill="#f4f4f4" textLength="54.2" lengthAdjust="spacingAndGlyphs" stroke="#f4f4f4" stroke-width="0.25">165,4945</text>
<text x="651.25" y="575.7" font-size="13.4" fill="#f4f4f4" textLength="47.0" lengthAdjust="spacingAndGlyphs" stroke="#f4f4f4" stroke-width="0.25">23,0874</text>
<text x="706" y="575.7" font-size="13.4" fill="#f4f4f4" textLength="47.0" lengthAdjust="spacingAndGlyphs" stroke="#f4f4f4" stroke-width="0.25">55,5656</text>
<text x="760.6" y="575.7" font-size="13.4" fill="#f4f4f4" textLength="54.2" lengthAdjust="spacingAndGlyphs" stroke="#f4f4f4" stroke-width="0.25">156,5714</text>
<text x="822.75" y="575.7" font-size="13.4" fill="#f4f4f4" textLength="47.0" lengthAdjust="spacingAndGlyphs" stroke="#f4f4f4" stroke-width="0.25">21,0316</text>
<text x="877.4" y="575.7" font-size="13.4" fill="#f4f4f4" textLength="54.2" lengthAdjust="spacingAndGlyphs" stroke="#f4f4f4" stroke-width="0.25">409,9523</text>
<text x="940" y="575.7" font-size="13.4" fill="#f4f4f4" textLength="54.2" lengthAdjust="spacingAndGlyphs" stroke="#f4f4f4" stroke-width="0.25">171,6204</text>
<text x="1002" y="575.7" font-size="13.4" fill="#f4f4f4" textLength="47.0" lengthAdjust="spacingAndGlyphs" stroke="#f4f4f4" stroke-width="0.25">28,8904</text>
<text x="1056.8" y="575.7" font-size="13.4" fill="#f4f4f4" textLength="47.0" lengthAdjust="spacingAndGlyphs" stroke="#f4f4f4" stroke-width="0.25">59,2315</text>
<text x="1111.5" y="575.7" font-size="13.4" fill="#f4f4f4" textLength="47.0" lengthAdjust="spacingAndGlyphs" stroke="#f4f4f4" stroke-width="0.25">58,8274</text>
<text x="1166.2" y="575.7" font-size="13.4" fill="#f4f4f4" textLength="54.2" lengthAdjust="spacingAndGlyphs" stroke="#f4f4f4" stroke-width="0.25">243,0737</text>
<text x="1228.75" y="575.7" font-size="13.4" fill="#f4f4f4" textLength="47.0" lengthAdjust="spacingAndGlyphs" stroke="#f4f4f4" stroke-width="0.25">12,1015</text>
<text x="1283.4" y="575.7" font-size="13.4" fill="#f4f4f4" textLength="54.2" lengthAdjust="spacingAndGlyphs" stroke="#f4f4f4" stroke-width="0.25">361,8962</text>
<text x="1345.6" y="575.7" font-size="13.4" fill="#f4f4f4" textLength="54.2" lengthAdjust="spacingAndGlyphs" stroke="#f4f4f4" stroke-width="0.25">191,7588</text>
<text x="1407.25" y="575.7" font-size="13.4" fill="#f4f4f4" textLength="54.2" lengthAdjust="spacingAndGlyphs" stroke="#f4f4f4" stroke-width="0.25">280,9832</text>
<text x="1469.4" y="575.7" font-size="13.4" fill="#f4f4f4" textLength="39.8" lengthAdjust="spacingAndGlyphs" stroke="#f4f4f4" stroke-width="0.25">7,8812</text>
<text x="116" y="597.7" font-size="13.6" fill="#fff" textLength="91.4" lengthAdjust="spacingAndGlyphs" font-weight="bold">Target x:CIE31</text>
<text x="223" y="597.7" font-size="13.4" fill="#f4f4f4" textLength="39.8" lengthAdjust="spacingAndGlyphs" stroke="#f4f4f4" stroke-width="0.25">0,3127</text>
<text x="292.4" y="597.7" font-size="13.4" fill="#f4f4f4" textLength="39.8" lengthAdjust="spacingAndGlyphs" stroke="#f4f4f4" stroke-width="0.25">0,4305</text>
<text x="354.4" y="597.7" font-size="13.4" fill="#f4f4f4" textLength="39.8" lengthAdjust="spacingAndGlyphs" stroke="#f4f4f4" stroke-width="0.25">0,4844</text>
<text x="417.2" y="597.7" font-size="13.4" fill="#f4f4f4" textLength="39.8" lengthAdjust="spacingAndGlyphs" stroke="#f4f4f4" stroke-width="0.25">0,3650</text>
<text x="479.75" y="597.7" font-size="13.4" fill="#f4f4f4" textLength="39.8" lengthAdjust="spacingAndGlyphs" stroke="#f4f4f4" stroke-width="0.25">0,3306</text>
<text x="534" y="597.7" font-size="13.4" fill="#f4f4f4" textLength="39.8" lengthAdjust="spacingAndGlyphs" stroke="#f4f4f4" stroke-width="0.25">0,2324</text>
<text x="588.7" y="597.7" font-size="13.4" fill="#f4f4f4" textLength="39.8" lengthAdjust="spacingAndGlyphs" stroke="#f4f4f4" stroke-width="0.25">0,5713</text>
<text x="651.25" y="597.7" font-size="13.4" fill="#f4f4f4" textLength="39.8" lengthAdjust="spacingAndGlyphs" stroke="#f4f4f4" stroke-width="0.25">0,4512</text>
<text x="706" y="597.7" font-size="13.4" fill="#f4f4f4" textLength="39.8" lengthAdjust="spacingAndGlyphs" stroke="#f4f4f4" stroke-width="0.25">0,2457</text>
<text x="760.6" y="597.7" font-size="13.4" fill="#f4f4f4" textLength="39.8" lengthAdjust="spacingAndGlyphs" stroke="#f4f4f4" stroke-width="0.25">0,3412</text>
<text x="822.75" y="597.7" font-size="13.4" fill="#f4f4f4" textLength="39.8" lengthAdjust="spacingAndGlyphs" stroke="#f4f4f4" stroke-width="0.25">0,2738</text>
<text x="877.4" y="597.7" font-size="13.4" fill="#f4f4f4" textLength="39.8" lengthAdjust="spacingAndGlyphs" stroke="#f4f4f4" stroke-width="0.25">0,3793</text>
<text x="940" y="597.7" font-size="13.4" fill="#f4f4f4" textLength="39.8" lengthAdjust="spacingAndGlyphs" stroke="#f4f4f4" stroke-width="0.25">0,5641</text>
<text x="1002" y="597.7" font-size="13.4" fill="#f4f4f4" textLength="39.8" lengthAdjust="spacingAndGlyphs" stroke="#f4f4f4" stroke-width="0.25">0,3387</text>
<text x="1056.8" y="597.7" font-size="13.4" fill="#f4f4f4" textLength="39.8" lengthAdjust="spacingAndGlyphs" stroke="#f4f4f4" stroke-width="0.25">0,5849</text>
<text x="1111.5" y="597.7" font-size="13.4" fill="#f4f4f4" textLength="39.8" lengthAdjust="spacingAndGlyphs" stroke="#f4f4f4" stroke-width="0.25">0,5531</text>
<text x="1166.2" y="597.7" font-size="13.4" fill="#f4f4f4" textLength="39.8" lengthAdjust="spacingAndGlyphs" stroke="#f4f4f4" stroke-width="0.25">0,4277</text>
<text x="1228.75" y="597.7" font-size="13.4" fill="#f4f4f4" textLength="39.8" lengthAdjust="spacingAndGlyphs" stroke="#f4f4f4" stroke-width="0.25">0,4848</text>
<text x="1283.4" y="597.7" font-size="13.4" fill="#f4f4f4" textLength="39.8" lengthAdjust="spacingAndGlyphs" stroke="#f4f4f4" stroke-width="0.25">0,4377</text>
<text x="1345.6" y="597.7" font-size="13.4" fill="#f4f4f4" textLength="39.8" lengthAdjust="spacingAndGlyphs" stroke="#f4f4f4" stroke-width="0.25">0,4259</text>
<text x="1407.25" y="597.7" font-size="13.4" fill="#f4f4f4" textLength="39.8" lengthAdjust="spacingAndGlyphs" stroke="#f4f4f4" stroke-width="0.25">0,3909</text>
<text x="1469.4" y="597.7" font-size="13.4" fill="#f4f4f4" textLength="39.8" lengthAdjust="spacingAndGlyphs" stroke="#f4f4f4" stroke-width="0.25">0,3528</text>
<text x="116" y="619.7" font-size="13.6" fill="#fff" textLength="91.4" lengthAdjust="spacingAndGlyphs" font-weight="bold">Target y:CIE31</text>
<text x="223" y="619.7" font-size="13.4" fill="#f4f4f4" textLength="39.8" lengthAdjust="spacingAndGlyphs" stroke="#f4f4f4" stroke-width="0.25">0,3290</text>
<text x="292.4" y="619.7" font-size="13.4" fill="#f4f4f4" textLength="39.8" lengthAdjust="spacingAndGlyphs" stroke="#f4f4f4" stroke-width="0.25">0,3909</text>
<text x="354.4" y="619.7" font-size="13.4" fill="#f4f4f4" textLength="39.8" lengthAdjust="spacingAndGlyphs" stroke="#f4f4f4" stroke-width="0.25">0,3798</text>
<text x="417.2" y="619.7" font-size="13.4" fill="#f4f4f4" textLength="39.8" lengthAdjust="spacingAndGlyphs" stroke="#f4f4f4" stroke-width="0.25">0,4977</text>
<text x="479.75" y="619.7" font-size="13.4" fill="#f4f4f4" textLength="39.8" lengthAdjust="spacingAndGlyphs" stroke="#f4f4f4" stroke-width="0.25">0,5246</text>
<text x="534" y="619.7" font-size="13.4" fill="#f4f4f4" textLength="39.8" lengthAdjust="spacingAndGlyphs" stroke="#f4f4f4" stroke-width="0.25">0,3216</text>
<text x="588.7" y="619.7" font-size="13.4" fill="#f4f4f4" textLength="39.8" lengthAdjust="spacingAndGlyphs" stroke="#f4f4f4" stroke-width="0.25">0,3259</text>
<text x="651.25" y="619.7" font-size="13.4" fill="#f4f4f4" textLength="39.8" lengthAdjust="spacingAndGlyphs" stroke="#f4f4f4" stroke-width="0.25">0,3545</text>
<text x="706" y="619.7" font-size="13.4" fill="#f4f4f4" textLength="39.8" lengthAdjust="spacingAndGlyphs" stroke="#f4f4f4" stroke-width="0.25">0,2134</text>
<text x="760.6" y="619.7" font-size="13.4" fill="#f4f4f4" textLength="39.8" lengthAdjust="spacingAndGlyphs" stroke="#f4f4f4" stroke-width="0.25">0,2728</text>
<text x="822.75" y="619.7" font-size="13.4" fill="#f4f4f4" textLength="39.8" lengthAdjust="spacingAndGlyphs" stroke="#f4f4f4" stroke-width="0.25">0,1585</text>
<text x="877.4" y="619.7" font-size="13.4" fill="#f4f4f4" textLength="39.8" lengthAdjust="spacingAndGlyphs" stroke="#f4f4f4" stroke-width="0.25">0,5077</text>
<text x="940" y="619.7" font-size="13.4" fill="#f4f4f4" textLength="39.8" lengthAdjust="spacingAndGlyphs" stroke="#f4f4f4" stroke-width="0.25">0,3298</text>
<text x="1002" y="619.7" font-size="13.4" fill="#f4f4f4" textLength="39.8" lengthAdjust="spacingAndGlyphs" stroke="#f4f4f4" stroke-width="0.25">0,3584</text>
<text x="1056.8" y="619.7" font-size="13.4" fill="#f4f4f4" textLength="39.8" lengthAdjust="spacingAndGlyphs" stroke="#f4f4f4" stroke-width="0.25">0,3280</text>
<text x="1111.5" y="619.7" font-size="13.4" fill="#f4f4f4" textLength="39.8" lengthAdjust="spacingAndGlyphs" stroke="#f4f4f4" stroke-width="0.25">0,3588</text>
<text x="1166.2" y="619.7" font-size="13.4" fill="#f4f4f4" textLength="39.8" lengthAdjust="spacingAndGlyphs" stroke="#f4f4f4" stroke-width="0.25">0,4144</text>
<text x="1228.75" y="619.7" font-size="13.4" fill="#f4f4f4" textLength="39.8" lengthAdjust="spacingAndGlyphs" stroke="#f4f4f4" stroke-width="0.25">0,3314</text>
<text x="1283.4" y="619.7" font-size="13.4" fill="#f4f4f4" textLength="39.8" lengthAdjust="spacingAndGlyphs" stroke="#f4f4f4" stroke-width="0.25">0,4496</text>
<text x="1345.6" y="619.7" font-size="13.4" fill="#f4f4f4" textLength="39.8" lengthAdjust="spacingAndGlyphs" stroke="#f4f4f4" stroke-width="0.25">0,4212</text>
<text x="1407.25" y="619.7" font-size="13.4" fill="#f4f4f4" textLength="39.8" lengthAdjust="spacingAndGlyphs" stroke="#f4f4f4" stroke-width="0.25">0,3870</text>
<text x="1469.4" y="619.7" font-size="13.4" fill="#f4f4f4" textLength="39.8" lengthAdjust="spacingAndGlyphs" stroke="#f4f4f4" stroke-width="0.25">0,5134</text>
<text x="116" y="641.6" font-size="13.6" fill="#fff" textLength="53" lengthAdjust="spacingAndGlyphs" font-weight="bold">Target Y</text>
<text x="223" y="641.6" font-size="13.4" fill="#f4f4f4" textLength="61.5" lengthAdjust="spacingAndGlyphs" stroke="#f4f4f4" stroke-width="0.25">2311,5456</text>
<text x="292.4" y="641.6" font-size="13.4" fill="#f4f4f4" textLength="54.2" lengthAdjust="spacingAndGlyphs" stroke="#f4f4f4" stroke-width="0.25">397,1174</text>
<text x="354.4" y="641.6" font-size="13.4" fill="#f4f4f4" textLength="54.2" lengthAdjust="spacingAndGlyphs" stroke="#f4f4f4" stroke-width="0.25">284,8081</text>
<text x="417.2" y="641.6" font-size="13.4" fill="#f4f4f4" textLength="54.2" lengthAdjust="spacingAndGlyphs" stroke="#f4f4f4" stroke-width="0.25">202,8635</text>
<text x="479.75" y="641.6" font-size="13.4" fill="#f4f4f4" textLength="47.0" lengthAdjust="spacingAndGlyphs" stroke="#f4f4f4" stroke-width="0.25">16,4928</text>
<text x="534" y="641.6" font-size="13.4" fill="#f4f4f4" textLength="47.0" lengthAdjust="spacingAndGlyphs" stroke="#f4f4f4" stroke-width="0.25">31,6154</text>
<text x="588.7" y="641.6" font-size="13.4" fill="#f4f4f4" textLength="54.2" lengthAdjust="spacingAndGlyphs" stroke="#f4f4f4" stroke-width="0.25">228,3663</text>
<text x="651.25" y="641.6" font-size="13.4" fill="#f4f4f4" textLength="47.0" lengthAdjust="spacingAndGlyphs" stroke="#f4f4f4" stroke-width="0.25">20,5826</text>
<text x="706" y="641.6" font-size="13.4" fill="#f4f4f4" textLength="47.0" lengthAdjust="spacingAndGlyphs" stroke="#f4f4f4" stroke-width="0.25">50,0504</text>
<text x="760.6" y="641.6" font-size="13.4" fill="#f4f4f4" textLength="54.2" lengthAdjust="spacingAndGlyphs" stroke="#f4f4f4" stroke-width="0.25">140,6088</text>
<text x="822.75" y="641.6" font-size="13.4" fill="#f4f4f4" textLength="47.0" lengthAdjust="spacingAndGlyphs" stroke="#f4f4f4" stroke-width="0.25">18,4930</text>
<text x="877.4" y="641.6" font-size="13.4" fill="#f4f4f4" textLength="54.2" lengthAdjust="spacingAndGlyphs" stroke="#f4f4f4" stroke-width="0.25">523,9050</text>
<text x="940" y="641.6" font-size="13.4" fill="#f4f4f4" textLength="54.2" lengthAdjust="spacingAndGlyphs" stroke="#f4f4f4" stroke-width="0.25">235,1922</text>
<text x="1002" y="641.6" font-size="13.4" fill="#f4f4f4" textLength="47.0" lengthAdjust="spacingAndGlyphs" stroke="#f4f4f4" stroke-width="0.25">25,7040</text>
<text x="1056.8" y="641.6" font-size="13.4" fill="#f4f4f4" textLength="47.0" lengthAdjust="spacingAndGlyphs" stroke="#f4f4f4" stroke-width="0.25">53,6732</text>
<text x="1111.5" y="641.6" font-size="13.4" fill="#f4f4f4" textLength="47.0" lengthAdjust="spacingAndGlyphs" stroke="#f4f4f4" stroke-width="0.25">53,1283</text>
<text x="1166.2" y="641.6" font-size="13.4" fill="#f4f4f4" textLength="54.2" lengthAdjust="spacingAndGlyphs" stroke="#f4f4f4" stroke-width="0.25">245,7479</text>
<text x="1228.75" y="641.6" font-size="13.4" fill="#f4f4f4" textLength="47.0" lengthAdjust="spacingAndGlyphs" stroke="#f4f4f4" stroke-width="0.25">10,3597</text>
<text x="1283.4" y="641.6" font-size="13.4" fill="#f4f4f4" textLength="54.2" lengthAdjust="spacingAndGlyphs" stroke="#f4f4f4" stroke-width="0.25">469,4604</text>
<text x="1345.6" y="641.6" font-size="13.4" fill="#f4f4f4" textLength="54.2" lengthAdjust="spacingAndGlyphs" stroke="#f4f4f4" stroke-width="0.25">178,2913</text>
<text x="1407.25" y="641.6" font-size="13.4" fill="#f4f4f4" textLength="54.2" lengthAdjust="spacingAndGlyphs" stroke="#f4f4f4" stroke-width="0.25">274,6025</text>
<text x="1469.4" y="641.6" font-size="13.4" fill="#f4f4f4" textLength="39.8" lengthAdjust="spacingAndGlyphs" stroke="#f4f4f4" stroke-width="0.25">6,9431</text>
<text x="116" y="663.5" font-size="13.6" fill="#fff" textLength="87.5" lengthAdjust="spacingAndGlyphs" font-weight="bold">dE_ICtCp_240</text>
<text x="223" y="663.5" font-size="13.4" fill="#f4f4f4" textLength="39.8" lengthAdjust="spacingAndGlyphs" stroke="#f4f4f4" stroke-width="0.25">0,1518</text>
<text x="292.4" y="663.5" font-size="13.4" fill="#f4f4f4" textLength="39.8" lengthAdjust="spacingAndGlyphs" stroke="#f4f4f4" stroke-width="0.25">4,2952</text>
<text x="354.4" y="663.5" font-size="13.4" fill="#f4f4f4" textLength="39.8" lengthAdjust="spacingAndGlyphs" stroke="#f4f4f4" stroke-width="0.25">5,1256</text>
<text x="417.2" y="663.5" font-size="13.4" fill="#f4f4f4" textLength="39.8" lengthAdjust="spacingAndGlyphs" stroke="#f4f4f4" stroke-width="0.25">2,0734</text>
<text x="479.75" y="663.5" font-size="13.4" fill="#f4f4f4" textLength="39.8" lengthAdjust="spacingAndGlyphs" stroke="#f4f4f4" stroke-width="0.25">2,3465</text>
<text x="534" y="663.5" font-size="13.4" fill="#f4f4f4" textLength="39.8" lengthAdjust="spacingAndGlyphs" stroke="#f4f4f4" stroke-width="0.25">2,7366</text>
<text x="588.7" y="663.5" font-size="13.4" fill="#f4f4f4" textLength="39.8" lengthAdjust="spacingAndGlyphs" stroke="#f4f4f4" stroke-width="0.25">8,2549</text>
<text x="651.25" y="663.5" font-size="13.4" fill="#f4f4f4" textLength="39.8" lengthAdjust="spacingAndGlyphs" stroke="#f4f4f4" stroke-width="0.25">2,4246</text>
<text x="706" y="663.5" font-size="13.4" fill="#f4f4f4" textLength="39.8" lengthAdjust="spacingAndGlyphs" stroke="#f4f4f4" stroke-width="0.25">2,3852</text>
<text x="760.6" y="663.5" font-size="13.4" fill="#f4f4f4" textLength="39.8" lengthAdjust="spacingAndGlyphs" stroke="#f4f4f4" stroke-width="0.25">2,6669</text>
<text x="822.75" y="663.5" font-size="13.4" fill="#f4f4f4" textLength="39.8" lengthAdjust="spacingAndGlyphs" stroke="#f4f4f4" stroke-width="0.25">2,6380</text>
<text x="877.4" y="663.5" font-size="13.4" fill="#f4f4f4" textLength="39.8" lengthAdjust="spacingAndGlyphs" stroke="#f4f4f4" stroke-width="0.25">6,3453</text>
<text x="940" y="663.5" font-size="13.4" fill="#f4f4f4" textLength="39.8" lengthAdjust="spacingAndGlyphs" stroke="#f4f4f4" stroke-width="0.25">8,1355</text>
<text x="1002" y="663.5" font-size="13.4" fill="#f4f4f4" textLength="39.8" lengthAdjust="spacingAndGlyphs" stroke="#f4f4f4" stroke-width="0.25">2,5749</text>
<text x="1056.8" y="663.5" font-size="13.4" fill="#f4f4f4" textLength="39.8" lengthAdjust="spacingAndGlyphs" stroke="#f4f4f4" stroke-width="0.25">2,2945</text>
<text x="1111.5" y="663.5" font-size="13.4" fill="#f4f4f4" textLength="39.8" lengthAdjust="spacingAndGlyphs" stroke="#f4f4f4" stroke-width="0.25">2,3648</text>
<text x="1166.2" y="663.5" font-size="13.4" fill="#f4f4f4" textLength="39.8" lengthAdjust="spacingAndGlyphs" stroke="#f4f4f4" stroke-width="0.25">0,6482</text>
<text x="1228.75" y="663.5" font-size="13.4" fill="#f4f4f4" textLength="39.8" lengthAdjust="spacingAndGlyphs" stroke="#f4f4f4" stroke-width="0.25">3,0246</text>
<text x="1283.4" y="663.5" font-size="13.4" fill="#f4f4f4" textLength="39.8" lengthAdjust="spacingAndGlyphs" stroke="#f4f4f4" stroke-width="0.25">6,7186</text>
<text x="1345.6" y="663.5" font-size="13.4" fill="#f4f4f4" textLength="39.8" lengthAdjust="spacingAndGlyphs" stroke="#f4f4f4" stroke-width="0.25">1,8227</text>
<text x="1407.25" y="663.5" font-size="13.4" fill="#f4f4f4" textLength="39.8" lengthAdjust="spacingAndGlyphs" stroke="#f4f4f4" stroke-width="0.25">0,6472</text>
<text x="1469.4" y="663.5" font-size="13.4" fill="#f4f4f4" textLength="39.8" lengthAdjust="spacingAndGlyphs" stroke="#f4f4f4" stroke-width="0.25">2,3017</text>
</g>
<rect x="105.5" y="669.6" width="1389.2" height="14.6" fill="#454545"/>
<rect x="120" y="671" width="547" height="12" rx="5" fill="#585858"/>
<rect x="105.5" y="670.5" width="13" height="13" fill="#5a5a5a"/>
<path d="M116 673 v7.5 l-6 -3.75z" fill="#2a2a2a"/>
<rect x="1480.7" y="670.5" width="13" height="13" fill="#5a5a5a"/>
<path d="M1484.2 673 v7.5 l6 -3.75z" fill="#2a2a2a"/>
<g clip-path="url(#sc)">
<rect x="0" y="744.8" width="1264" height="13.2" fill="#4a4a4a"/>
<rect x="13.5" y="746" width="512" height="11" rx="5" fill="#5b5b5b"/>
<rect x="1.5" y="745.5" width="11.5" height="12" fill="#6a6a6a"/>
<path d="M10 748 v7 l-5.5 -3.5z" fill="#222"/>
<rect x="1250.5" y="745.5" width="11.5" height="12" fill="#6a6a6a"/>
<path d="M1254 748 v7 l5.5 -3.5z" fill="#222"/>
<path d="M1.7 744.5 v-46 q0 -5 5 -5 h41.6 q5 0 5 5 v46z" fill="#1e1e1e"/>
<rect x="6.0" y="698.6" width="42.3" height="25.3" rx="4" fill="#ffffff"/>
<text x="11.8" y="739.6" font-size="12" fill="#fff" textLength="30.4" lengthAdjust="spacingAndGlyphs" font-weight="bold">White</text>
<path d="M55.2 744.5 v-46 q0 -5 5 -5 h42.3 q5 0 5 5 v46z" fill="url(#cg)" stroke="#5a5a5a" stroke-width="1"/>
<rect x="61.0" y="699.4" width="40.5" height="24" rx="4" fill="#b5a98f" stroke="#777" stroke-width=".8"/>
<text x="63.4" y="739.6" font-size="12" fill="#303030" textLength="35.6" lengthAdjust="spacingAndGlyphs" font-weight="bold">Color 1</text>
<path d="M109.3 744.5 v-46 q0 -5 5 -5 h42.3 q5 0 5 5 v46z" fill="url(#cg)" stroke="#5a5a5a" stroke-width="1"/>
<rect x="115.1" y="699.4" width="40.5" height="24" rx="4" fill="#b59b80" stroke="#777" stroke-width=".8"/>
<text x="117.5" y="739.6" font-size="12" fill="#303030" textLength="35.6" lengthAdjust="spacingAndGlyphs" font-weight="bold">Color 2</text>
<path d="M163.4 744.5 v-46 q0 -5 5 -5 h42.3 q5 0 5 5 v46z" fill="url(#cg)" stroke="#5a5a5a" stroke-width="1"/>
<rect x="169.2" y="699.4" width="40.5" height="24" rx="4" fill="#96a070" stroke="#777" stroke-width=".8"/>
<text x="171.6" y="739.6" font-size="12" fill="#303030" textLength="35.6" lengthAdjust="spacingAndGlyphs" font-weight="bold">Color 3</text>
<path d="M217.6 744.5 v-46 q0 -5 5 -5 h42.3 q5 0 5 5 v46z" fill="url(#cg)" stroke="#5a5a5a" stroke-width="1"/>
<rect x="223.4" y="699.4" width="40.5" height="24" rx="4" fill="#50603c" stroke="#777" stroke-width=".8"/>
<text x="225.8" y="739.6" font-size="12" fill="#303030" textLength="35.6" lengthAdjust="spacingAndGlyphs" font-weight="bold">Color 4</text>
<path d="M271.8 744.5 v-46 q0 -5 5 -5 h42.3 q5 0 5 5 v46z" fill="url(#cg)" stroke="#5a5a5a" stroke-width="1"/>
<rect x="277.6" y="699.4" width="40.5" height="24" rx="4" fill="#506e6e" stroke="#777" stroke-width=".8"/>
<text x="279.9" y="739.6" font-size="12" fill="#303030" textLength="35.6" lengthAdjust="spacingAndGlyphs" font-weight="bold">Color 5</text>
<path d="M325.9 744.5 v-46 q0 -5 5 -5 h42.3 q5 0 5 5 v46z" fill="url(#cg)" stroke="#5a5a5a" stroke-width="1"/>
<rect x="331.7" y="699.4" width="40.5" height="24" rx="4" fill="#be8478" stroke="#777" stroke-width=".8"/>
<text x="334.1" y="739.6" font-size="12" fill="#303030" textLength="35.6" lengthAdjust="spacingAndGlyphs" font-weight="bold">Color 6</text>
<path d="M380.1 744.5 v-46 q0 -5 5 -5 h42.3 q5 0 5 5 v46z" fill="url(#cg)" stroke="#5a5a5a" stroke-width="1"/>
<rect x="385.9" y="699.4" width="40.5" height="24" rx="4" fill="#6e584b" stroke="#777" stroke-width=".8"/>
<text x="388.2" y="739.6" font-size="12" fill="#303030" textLength="35.6" lengthAdjust="spacingAndGlyphs" font-weight="bold">Color 7</text>
<path d="M434.2 744.5 v-46 q0 -5 5 -5 h42.3 q5 0 5 5 v46z" fill="url(#cg)" stroke="#5a5a5a" stroke-width="1"/>
<rect x="440.0" y="699.4" width="40.5" height="24" rx="4" fill="#6c6894" stroke="#777" stroke-width=".8"/>
<text x="442.4" y="739.6" font-size="12" fill="#303030" textLength="35.6" lengthAdjust="spacingAndGlyphs" font-weight="bold">Color 8</text>
<path d="M488.3 744.5 v-46 q0 -5 5 -5 h42.3 q5 0 5 5 v46z" fill="url(#cg)" stroke="#5a5a5a" stroke-width="1"/>
<rect x="494.1" y="699.4" width="40.5" height="24" rx="4" fill="#968698" stroke="#777" stroke-width=".8"/>
<text x="496.5" y="739.6" font-size="12" fill="#303030" textLength="35.6" lengthAdjust="spacingAndGlyphs" font-weight="bold">Color 9</text>
<path d="M542.5 744.5 v-46 q0 -5 5 -5 h42.3 q5 0 5 5 v46z" fill="url(#cg)" stroke="#5a5a5a" stroke-width="1"/>
<rect x="548.3" y="699.4" width="40.5" height="24" rx="4" fill="#6a4a80" stroke="#777" stroke-width=".8"/>
<text x="547.2" y="739.6" font-size="12" fill="#303030" textLength="42.6" lengthAdjust="spacingAndGlyphs" font-weight="bold">Color 10</text>
<path d="M596.6 744.5 v-46 q0 -5 5 -5 h42.3 q5 0 5 5 v46z" fill="url(#cg)" stroke="#5a5a5a" stroke-width="1"/>
<rect x="602.4" y="699.4" width="40.5" height="24" rx="4" fill="#b0ba82" stroke="#777" stroke-width=".8"/>
<text x="601.4" y="739.6" font-size="12" fill="#303030" textLength="42.6" lengthAdjust="spacingAndGlyphs" font-weight="bold">Color 11</text>
<path d="M650.8 744.5 v-46 q0 -5 5 -5 h42.3 q5 0 5 5 v46z" fill="url(#cg)" stroke="#5a5a5a" stroke-width="1"/>
<rect x="656.6" y="699.4" width="40.5" height="24" rx="4" fill="#be887c" stroke="#777" stroke-width=".8"/>
<text x="655.5" y="739.6" font-size="12" fill="#303030" textLength="42.6" lengthAdjust="spacingAndGlyphs" font-weight="bold">Color 12</text>
<path d="M704.9 744.5 v-46 q0 -5 5 -5 h42.3 q5 0 5 5 v46z" fill="url(#cg)" stroke="#5a5a5a" stroke-width="1"/>
<rect x="710.7" y="699.4" width="40.5" height="24" rx="4" fill="#686660" stroke="#777" stroke-width=".8"/>
<text x="709.6" y="739.6" font-size="12" fill="#303030" textLength="42.6" lengthAdjust="spacingAndGlyphs" font-weight="bold">Color 13</text>
<path d="M759.1 744.5 v-46 q0 -5 5 -5 h42.3 q5 0 5 5 v46z" fill="url(#cg)" stroke="#5a5a5a" stroke-width="1"/>
<rect x="764.9" y="699.4" width="40.5" height="24" rx="4" fill="#926254" stroke="#777" stroke-width=".8"/>
<text x="763.8" y="739.6" font-size="12" fill="#303030" textLength="42.6" lengthAdjust="spacingAndGlyphs" font-weight="bold">Color 14</text>
<path d="M813.2 744.5 v-46 q0 -5 5 -5 h42.3 q5 0 5 5 v46z" fill="url(#cg)" stroke="#5a5a5a" stroke-width="1"/>
<rect x="819.0" y="699.4" width="40.5" height="24" rx="4" fill="#8c6852" stroke="#777" stroke-width=".8"/>
<text x="818.0" y="739.6" font-size="12" fill="#303030" textLength="42.6" lengthAdjust="spacingAndGlyphs" font-weight="bold">Color 15</text>
<path d="M867.4 744.5 v-46 q0 -5 5 -5 h42.3 q5 0 5 5 v46z" fill="url(#cg)" stroke="#5a5a5a" stroke-width="1"/>
<rect x="873.2" y="699.4" width="40.5" height="24" rx="4" fill="#aca27e" stroke="#777" stroke-width=".8"/>
<text x="872.1" y="739.6" font-size="12" fill="#303030" textLength="42.6" lengthAdjust="spacingAndGlyphs" font-weight="bold">Color 16</text>
<path d="M921.5 744.5 v-46 q0 -5 5 -5 h42.3 q5 0 5 5 v46z" fill="url(#cg)" stroke="#5a5a5a" stroke-width="1"/>
<rect x="927.3" y="699.4" width="40.5" height="24" rx="4" fill="#60443e" stroke="#777" stroke-width=".8"/>
<text x="926.2" y="739.6" font-size="12" fill="#303030" textLength="42.6" lengthAdjust="spacingAndGlyphs" font-weight="bold">Color 17</text>
<path d="M975.7 744.5 v-46 q0 -5 5 -5 h42.3 q5 0 5 5 v46z" fill="url(#cg)" stroke="#5a5a5a" stroke-width="1"/>
<rect x="981.5" y="699.4" width="40.5" height="24" rx="4" fill="#c4bc86" stroke="#777" stroke-width=".8"/>
<text x="980.4" y="739.6" font-size="12" fill="#303030" textLength="42.6" lengthAdjust="spacingAndGlyphs" font-weight="bold">Color 18</text>
<path d="M1029.8 744.5 v-46 q0 -5 5 -5 h42.3 q5 0 5 5 v46z" fill="url(#cg)" stroke="#5a5a5a" stroke-width="1"/>
<rect x="1035.6" y="699.4" width="40.5" height="24" rx="4" fill="#a09876" stroke="#777" stroke-width=".8"/>
<text x="1034.5" y="739.6" font-size="12" fill="#303030" textLength="42.6" lengthAdjust="spacingAndGlyphs" font-weight="bold">Color 19</text>
<path d="M1084.0 744.5 v-46 q0 -5 5 -5 h42.3 q5 0 5 5 v46z" fill="url(#cg)" stroke="#5a5a5a" stroke-width="1"/>
<rect x="1089.8" y="699.4" width="40.5" height="24" rx="4" fill="#b2a890" stroke="#777" stroke-width=".8"/>
<text x="1088.7" y="739.6" font-size="12" fill="#303030" textLength="42.6" lengthAdjust="spacingAndGlyphs" font-weight="bold">Color 20</text>
<path d="M1138.1 744.5 v-46 q0 -5 5 -5 h42.3 q5 0 5 5 v46z" fill="url(#cg)" stroke="#5a5a5a" stroke-width="1"/>
<rect x="1143.9" y="699.4" width="40.5" height="24" rx="4" fill="#40522c" stroke="#777" stroke-width=".8"/>
<text x="1142.8" y="739.6" font-size="12" fill="#303030" textLength="42.6" lengthAdjust="spacingAndGlyphs" font-weight="bold">Color 21</text>
<path d="M1192.3 744.5 v-46 q0 -5 5 -5 h42.3 q5 0 5 5 v46z" fill="url(#cg)" stroke="#5a5a5a" stroke-width="1"/>
<rect x="1198.1" y="699.4" width="40.5" height="24" rx="4" fill="#7a6454" stroke="#777" stroke-width=".8"/>
<text x="1197.0" y="739.6" font-size="12" fill="#303030" textLength="42.6" lengthAdjust="spacingAndGlyphs" font-weight="bold">Color 22</text>
<path d="M1246.5 744.5 v-46 q0 -5 5 -5 h42.3 q5 0 5 5 v46z" fill="url(#cg)" stroke="#5a5a5a" stroke-width="1"/>
<rect x="1252.2" y="699.4" width="40.5" height="24" rx="4" fill="#8278c8" stroke="#777" stroke-width=".8"/>
<text x="1251.2" y="739.6" font-size="12" fill="#303030" textLength="42.6" lengthAdjust="spacingAndGlyphs" font-weight="bold">Color 23</text>
</g>
<rect x="1263.6" y="692.8" width="334" height="65.2" fill="#2a2a2a"/>
<rect x="1264.2" y="693.3" width="48.5" height="19" rx="3" fill="url(#bt)"/>
<circle cx="1288.5" cy="702" r="8" fill="url(#hl)"/>
<path d="M1283 705 h11 l-5.5 -6z" fill="#222"/>
<rect x="1264.2" y="713.2" width="48.5" height="45" fill="url(#bt)"/>
<rect x="1273.2" y="720" width="30.6" height="29.8" rx="3.5" fill="url(#gl)" stroke="#141414" stroke-width="2"/>
<rect x="1281.6" y="727.7" width="14.2" height="14.6" fill="url(#gk)"/>
<rect x="1313.8" y="693.3" width="48.3" height="30.8" rx="2" fill="url(#bt)"/>
<circle cx="1337.9" cy="708.5" r="10.5" fill="url(#hl)"/>
<rect x="1363.1" y="693.3" width="45.9" height="30.8" rx="2" fill="url(#bt)"/>
<circle cx="1386.0" cy="708.5" r="10.5" fill="url(#hl)"/>
<rect x="1410.0" y="693.3" width="46.1" height="30.8" rx="2" fill="url(#bt)"/>
<circle cx="1433.0" cy="708.5" r="10.5" fill="url(#hl)"/>
<rect x="1457.1" y="693.3" width="45.8" height="30.8" rx="2" fill="url(#bt)"/>
<circle cx="1480.0" cy="708.5" r="10.5" fill="url(#hl)"/>
<rect x="1503.9" y="693.3" width="45.6" height="30.8" fill="#383838"/>
<rect x="1550.5" y="693.3" width="46.3" height="30.8" fill="#383838"/>
<rect x="1333.7" y="704.3" width="8.4" height="8.4" fill="#2e2e2e"/>
<path d="M1382.5 703.5 v10 l8.5 -5z" fill="#2a2a2a"/>
<path d="M1430.0 702.6 h-2.6 v11.8 h2.6 M1436.0 702.6 h2.6 v11.8 h-2.6 M1431.0 708.5 h1.4 M1433.6 708.5 h1.4" fill="none" stroke="#2e2e2e" stroke-width="1.7"/>
<path d="M1480.0 708.6 c-2 -3.6 -7.2 -3.4 -7.2 0 c0 3.4 5.2 3.6 7.2 0 c2 -3.6 7.2 -3.4 7.2 0 c0 3.4 -5.2 3.6 -7.2 0z" fill="none" stroke="#2e2e2e" stroke-width="1.9"/>
<circle cx="1526.7" cy="708.5" r="9.5" fill="#3e3e3e"/>
<path d="M1522.1 707.3 a4.8 4.8 0 0 1 8 -2.6 M1531.3 709.7 a4.8 4.8 0 0 1 -8 2.6" fill="none" stroke="#202020" stroke-width="2.8"/>
<path d="M1532.7 702 v5 h-5z M1520.7 715 v-5 h5z" fill="#202020"/>
<circle cx="1573.7" cy="708.5" r="9.8" fill="#454545"/>
<rect x="1313.8" y="725.4" width="142.3" height="33.4" rx="3" fill="url(#bt)"/>
<rect x="1457.1" y="725.4" width="140.6" height="33.4" rx="3" fill="url(#bt)"/>
<circle cx="1346.9" cy="741.9" r="10.5" fill="url(#hl)"/>
<circle cx="1568.5" cy="741.9" r="10.5" fill="url(#hl)"/>
<path d="M1345.5 737 l-4 5 l4 5 M1351 737 l-4 5 l4 5" fill="none" stroke="#333" stroke-width="1.7"/>
<path d="M1564.5 737 l4 5 l-4 5 M1570 737 l4 5 l-4 5" fill="none" stroke="#333" stroke-width="1.7"/>
<text x="1375" y="749.3" font-size="22" fill="#2e2e2e" textLength="51.8" lengthAdjust="spacingAndGlyphs" stroke="#2e2e2e" stroke-width="0.5">Back</text>
<text x="1485.7" y="749.3" font-size="22" fill="#2e2e2e" textLength="53.6" lengthAdjust="spacingAndGlyphs" stroke="#2e2e2e" stroke-width="0.5">Next</text>
<rect x="1597.6" y="0" width="2.4" height="758" fill="#2a2a2a"/>
<rect x="0" y="0" width="1600" height="2" fill="#2d2d2d"/>
</svg>
</body></html>
